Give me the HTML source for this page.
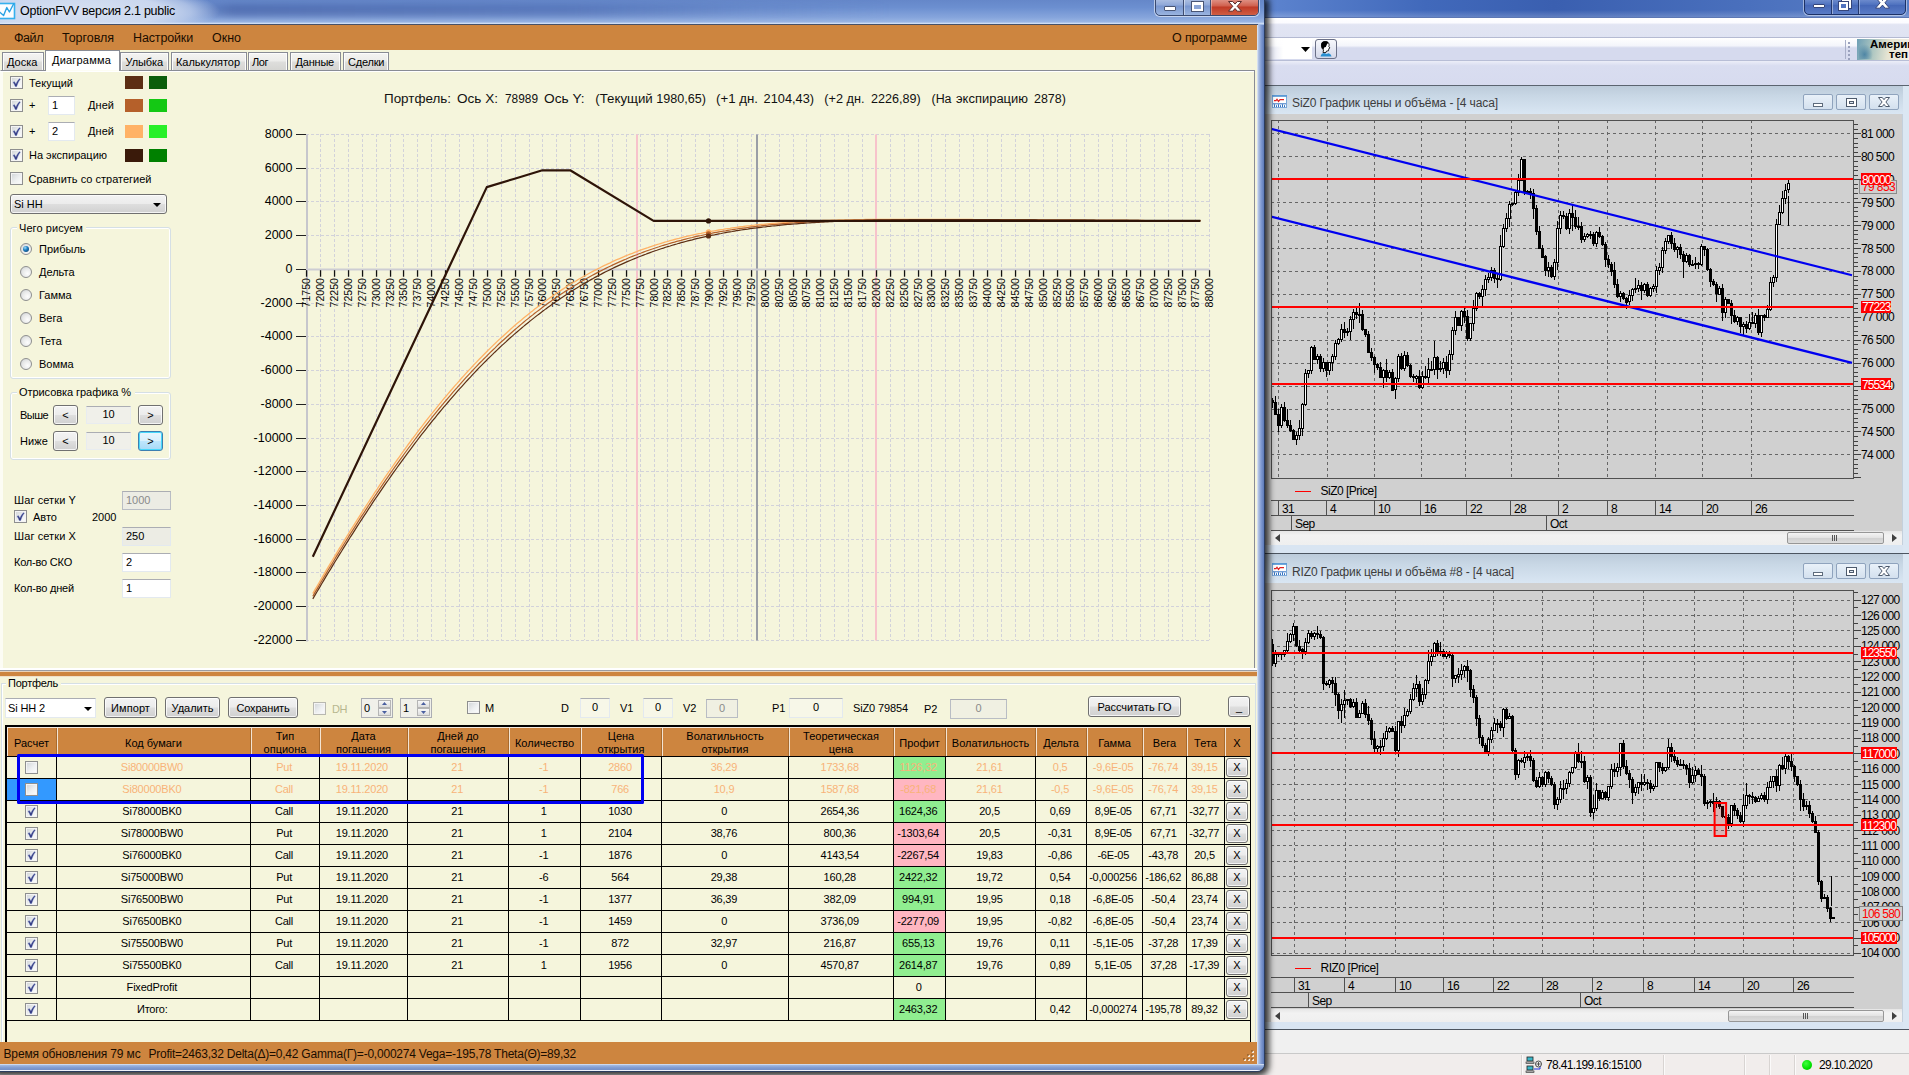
<!DOCTYPE html>
<html lang="ru"><head><meta charset="utf-8"><title>OptionFVV</title><style>html,body{margin:0;padding:0;}
body{width:1909px;height:1075px;overflow:hidden;position:relative;background:#f0f0f0;font-family:"Liberation Sans",sans-serif;font-size:11px;}
div,span.t,svg{position:absolute;}
span.t{white-space:nowrap;display:block;}
#root{left:0;top:0;width:1909px;height:1075px;overflow:hidden;}
</style></head><body><div id="root">
<div style="left:1264px;top:0px;width:645px;height:1075px;background:#f0f0f0;"></div>
<div style="left:1264px;top:0px;width:645px;height:17px;background:linear-gradient(90deg,#5d84cf 0%,#4169bb 25%,#3a5fb0 45%,#4a70bd 75%,#5a7fc7 100%);"></div>
<div style="left:1264px;top:10px;width:645px;height:7px;background:linear-gradient(rgba(255,255,255,0),rgba(255,255,255,.2));"></div>
<div style="left:1804px;top:-4px;width:102px;height:19px;border:1px solid #1c3166;border-radius:0 0 5px 5px;background:linear-gradient(#7e9ad6,#4f72bf 45%,#4668b8 50%,#5a7cc6);box-shadow:0 0 0 1px rgba(255,255,255,.45);box-sizing:border-box;"></div>
<div style="left:1831px;top:0px;width:1px;height:14px;background:#24396f;"></div>
<div style="left:1832px;top:0px;width:1px;height:14px;background:rgba(255,255,255,.4);"></div>
<div style="left:1858px;top:0px;width:1px;height:14px;background:#24396f;"></div>
<div style="left:1859px;top:0px;width:1px;height:14px;background:rgba(255,255,255,.4);"></div>
<div style="left:1813px;top:4px;width:12px;height:4px;background:#fff;border:1px solid #35457a;box-sizing:border-box;border-radius:1px;"></div>
<div style="left:1842px;top:0px;width:9px;height:8px;background:transparent;border:2px solid #fff;box-sizing:border-box;outline:1px solid #35457a;"></div>
<div style="left:1839px;top:2px;width:9px;height:8px;background:#5173bf;border:2px solid #fff;box-sizing:border-box;outline:1px solid #35457a;"></div>
<svg style="left:1875px;top:-3px" width="15" height="12" viewBox="0 0 15 12"><path d="M0.500 0.500h4.300l2.700 3 2.700-3h4.300l-4.600 5.300 4.600 5.400h-4.300l-2.700-3.100-2.700 3.100h-4.300l4.600-5.400z" fill="#fff" stroke="#35457a" stroke-width="1"/></svg>
<div style="left:1264px;top:17px;width:645px;height:1px;background:#5d78b4;"></div>
<div style="left:1264px;top:18px;width:645px;height:19px;background:linear-gradient(#ffffff 0,#fbfbff 25%,#e2e5f3 35%,#dfe3f2 100%);"></div>
<div style="left:1264px;top:37px;width:645px;height:1px;background:#b4bad2;"></div>
<div style="left:1264px;top:38px;width:645px;height:22px;background:linear-gradient(#ffffff 0,#f4f5fb 35%,#d6daee 45%,#d6daee 100%);"></div>
<div style="left:1264px;top:60px;width:645px;height:1px;background:#b8bed6;"></div>
<div style="left:1264px;top:61px;width:645px;height:24px;background:linear-gradient(#eceef8 0,#d9ddf0 20%,#d7dbef 100%);"></div>
<div style="left:1264px;top:39px;width:48px;height:20px;background:linear-gradient(90deg,rgba(255,255,255,0),#fff 40%);"></div>
<svg style="left:1301px;top:47px" width="9" height="5"><path d="M0 0h9l-4.5 5z" fill="#000"/></svg>
<div style="left:1315px;top:39px;width:22px;height:20px;border:1px solid #6a6f86;border-radius:3px;background:linear-gradient(#f7f8fc,#d4d8ea);box-sizing:border-box;"></div>
<svg style="left:1319px;top:41px" width="14" height="16" viewBox="0 0 14 16"><path d="M3 2c1-1.5 5-2 6.5 0 .8 1 .8 2.5.3 3.5l1.2 1.5-1.2.6-.3 2.2-2 .2-.5 1.5h-3l.5-2.5c-1.8-1-2.8-4.500-1.500-7z" fill="#fff" stroke="#000" stroke-width=".8"/><path d="M2.600 1.800c1.500-1.800 5.500-2 7 0l-1.500 1.200-1.300 3-1.700.5-.6 2.500c-1.800-1-3-5-1.900-7.200z" fill="#000"/><path d="M1.500 15.500c.5-2.500 2-3.500 4-3.500l2 1 2-.8c1.500.3 2.500 1.500 3 3.300z" fill="#2a8fd0"/></svg>
<div style="left:1845px;top:40px;width:1px;height:19px;background:#a9afc8;"></div>
<div style="left:1848px;top:42px;width:2px;height:2px;background:#9aa1bd;"></div>
<div style="left:1848px;top:46px;width:2px;height:2px;background:#9aa1bd;"></div>
<div style="left:1848px;top:50px;width:2px;height:2px;background:#9aa1bd;"></div>
<div style="left:1848px;top:54px;width:2px;height:2px;background:#9aa1bd;"></div>
<div style="left:1848px;top:58px;width:2px;height:2px;background:#9aa1bd;"></div>
<div style="left:1857px;top:39px;width:52px;height:21px;background:linear-gradient(100deg,#6e9fb5 0%,#a9c4c0 30%,#e6e4d2 60%,#f4f0e6 100%);overflow:hidden;"></div>
<div style="left:1859px;top:44px;width:14px;height:15px;background:radial-gradient(ellipse at 40% 70%,#4f86a5,rgba(110,160,180,0) 70%);"></div>
<span class="t" style="left:1909.50px;top:36.75px;height:15.5px;line-height:15.5px;font-size:11.5px;color:#000;font-weight:bold;left:1870px;">Америк</span>
<span class="t" style="left:1909.50px;top:46.75px;height:15.5px;line-height:15.5px;font-size:11.5px;color:#000;font-weight:bold;left:1889px;">теп</span>
<div style="left:1264px;top:85px;width:645px;height:1px;background:#5b6470;"></div>
<div style="left:1264px;top:86px;width:645px;height:28px;background:linear-gradient(#bccbda 0,#c8d7e5 35%,#d9e6f3 100%);"></div>
<div style="left:1903px;top:86px;width:6px;height:468px;background:#dbe7f3;"></div>
<div style="left:1902px;top:114px;width:1px;height:432px;background:#c4d0dc;"></div>
<svg style="left:1272px;top:95px" width="15" height="13" viewBox="0 0 15 14" preserveAspectRatio="none"><rect x="0.5" y="0.5" width="14" height="13" fill="#fff" stroke="#7aa7d8"/><rect x="0" y="0" width="15" height="2" fill="#5b9ad6"/><path d="M2 6h2l1-1.5 1.5 2.5 1.5-2h4" stroke="#e02020" fill="none" stroke-width="1.2"/><path d="M2.5 13v-3M4.5 13v-2M6.5 13v-3M8.5 13v-2M10.5 13v-3M12.5 13v-2" stroke="#2a6cc0" stroke-width="1"/><path d="M1 9.5h13" stroke="#2a6cc0" stroke-width="1"/></svg>
<span class="t" style="left:1292.00px;top:94.50px;height:16px;line-height:16px;font-size:12px;color:#3d3d3d;letter-spacing:-0.099px;">SiZ0 График цены и объёма - [4 часа]</span>
<div style="left:1803px;top:94px;width:30px;height:16px;border:1px solid #8fa3bd;border-radius:2px;background:linear-gradient(#e9f1f9,#d3e0ee);box-sizing:border-box;"></div>
<div style="left:1813px;top:103px;width:10px;height:4px;background:#fff;border:1px solid #5d6b7c;box-sizing:border-box;"></div>
<div style="left:1836px;top:94px;width:30px;height:16px;border:1px solid #8fa3bd;border-radius:2px;background:linear-gradient(#e9f1f9,#d3e0ee);box-sizing:border-box;"></div>
<div style="left:1846px;top:98px;width:11px;height:9px;background:#fff;border:1px solid #4d5a6c;box-sizing:border-box;"></div>
<div style="left:1849px;top:101px;width:5px;height:3px;background:#dfe8f2;border:1px solid #4d5a6c;box-sizing:border-box;"></div>
<div style="left:1869px;top:94px;width:30px;height:16px;border:1px solid #8fa3bd;border-radius:2px;background:linear-gradient(#e9f1f9,#d3e0ee);box-sizing:border-box;"></div>
<svg style="left:1878px;top:97px" width="12" height="10" viewBox="0 0 12 10"><path d="M0.500 0.500h3.800l1.700 2.200 1.700-2.200h3.800l-3.600 4.500 3.600 4.500h-3.800l-1.700-2.200-1.700 2.200h-3.800l3.600-4.500z" fill="#fff" stroke="#4d5a6c" stroke-width="1"/></svg>
<div style="left:1264px;top:114px;width:638px;height:432px;background:#d0d0d0;"></div>
<svg style="left:1271px;top:120px" width="583" height="359" viewBox="0 0 583 359" shape-rendering="crispEdges"><rect x="0" y="0" width="583" height="359" fill="#d0d0d0"/><path d="M0 334.5H582M0 311.5H582M0 289.5H582M0 266.5H582M0 243.5H582M0 220.5H582M0 197.5H582M0 174.5H582M0 151.5H582M0 128.5H582M0 105.5H582M0 82.5H582M0 59.5H582M0 36.5H582M0 13.5H582M7.5 0V358M56.5 0V358M103.5 0V358M150.5 0V358M194.5 0V358M240.5 0V358M287.5 0V358M336.5 0V358M384.5 0V358M431.5 0V358M480.5 0V358" stroke="#666" stroke-width="1" stroke-dasharray="3 3" fill="none"/><path d="M1.5 278.4V287.7M4.5 276.3V295.2M7.5 289.0V311.6M10.5 283.5V308.3M13.5 282.3V301.6M16.5 288.6V307.7M19.5 300.3V311.5M22.5 308.5V319.8M25.5 312.3V324.5M28.5 300.0V319.6M31.5 283.3V315.7M34.5 249.4V286.0M37.5 249.5V257.6M40.5 225.7V253.7M43.5 225.3V240.4M46.5 233.9V243.6M49.5 234.1V252.3M52.5 237.7V251.9M55.5 241.5V256.7M58.5 241.6V254.6M61.5 234.1V250.6M64.5 220.3V239.5M67.5 218.2V224.6M70.5 204.4V222.0M73.5 202.1V217.7M76.5 207.9V216.4M79.5 195.7V220.4M82.5 188.9V209.0M85.5 187.7V198.7M88.5 182.7V202.8M91.5 190.3V210.6M94.5 208.5V216.6M97.5 210.7V232.9M100.5 228.2V241.4M103.5 235.5V253.4M106.5 243.3V250.0M109.5 242.1V257.6M112.5 249.0V268.2M115.5 239.3V262.0M118.5 250.2V258.5M121.5 249.3V270.9M124.5 257.1V278.8M127.5 233.6V261.7M130.5 232.8V250.0M133.5 231.4V251.4M136.5 231.9V247.3M139.5 244.4V258.1M142.5 253.7V262.3M145.5 255.2V264.6M148.5 249.7V268.9M151.5 250.5V268.8M154.5 246.3V259.3M157.5 237.5V264.6M160.5 241.2V250.9M163.5 220.8V255.2M166.5 235.7V259.2M169.5 240.8V252.3M172.5 237.5V254.3M175.5 236.3V257.6M178.5 230.1V255.2M181.5 207.3V240.3M184.5 191.4V214.5M187.5 196.6V206.1M190.5 190.3V211.4M193.5 187.7V203.2M196.5 189.7V220.5M199.5 202.5V221.1M202.5 180.2V210.6M205.5 172.0V191.0M208.5 171.9V179.2M211.5 165.1V185.5M214.5 155.4V175.7M217.5 152.8V163.0M220.5 146.5V161.4M223.5 147.8V162.5M226.5 153.5V167.9M229.5 115.1V160.9M232.5 104.1V127.9M235.5 93.2V112.2M238.5 80.6V106.6M241.5 82.7V86.1M244.5 71.2V85.2M247.5 54.4V76.0M250.5 36.9V61.3M253.5 39.0V74.7M256.5 70.4V74.2M259.5 67.7V78.5M262.5 69.0V99.1M265.5 84.7V114.5M268.5 105.6V128.9M271.5 124.8V138.0M274.5 134.7V156.0M277.5 141.6V157.1M280.5 144.9V158.0M283.5 139.0V160.3M286.5 100.6V150.0M289.5 91.2V114.4M292.5 90.6V98.6M295.5 93.4V110.3M298.5 88.9V114.4M301.5 84.0V110.6M304.5 89.6V109.1M307.5 97.4V110.0M310.5 102.2V122.9M313.5 113.3V121.5M316.5 113.0V118.2M319.5 111.0V119.0M322.5 112.4V125.5M325.5 110.9V127.2M328.5 106.7V118.4M331.5 115.0V125.7M334.5 121.9V147.1M337.5 134.9V148.1M340.5 142.2V155.5M343.5 142.4V167.6M346.5 159.0V178.3M349.5 171.1V182.4M352.5 171.6V179.7M355.5 177.0V189.0M358.5 170.2V184.5M361.5 167.8V180.6M364.5 158.0V173.1M367.5 160.3V172.2M370.5 161.5V179.5M373.5 163.3V172.9M376.5 161.8V176.6M379.5 166.8V176.6M382.5 164.2V172.4M385.5 145.5V172.5M388.5 143.3V155.1M391.5 126.9V152.9M394.5 118.1V134.1M397.5 114.6V124.2M400.5 111.6V128.5M403.5 118.3V131.7M406.5 126.0V137.9M409.5 124.3V138.7M412.5 130.5V158.0M415.5 133.0V142.7M418.5 134.4V147.3M421.5 139.7V145.9M424.5 136.9V148.8M427.5 142.2V149.2M430.5 124.1V145.6M433.5 126.0V136.4M436.5 127.9V151.1M439.5 147.7V167.3M442.5 158.9V166.4M445.5 161.5V181.8M448.5 166.4V175.3M451.5 164.0V200.6M454.5 176.8V197.6M457.5 178.7V184.4M460.5 180.2V204.1M463.5 190.3V202.5M466.5 195.8V204.7M469.5 196.7V213.1M472.5 201.5V215.4M475.5 200.7V213.0M478.5 193.7V209.6M481.5 191.9V204.2M484.5 192.7V208.2M487.5 188.9V215.3M490.5 194.9V217.3M493.5 193.7V200.8M496.5 184.8V198.3M499.5 157.3V191.2M502.5 154.9V166.7M505.5 99.0V162.3M508.5 85.2V104.9M511.5 70.9V93.6M514.5 63.9V84.1M517.5 58.6V73.3" stroke="#000" stroke-width="1" fill="none"/><path d="M0.5 280.6h2.0v2.1h-2.0zM3.5 282.7h2.0v11.7h-2.0zM6.5 294.4h2.0v11.2h-2.0zM12.5 287.2h2.0v13.5h-2.0zM15.5 300.6h2.0v5.3h-2.0zM18.5 305.9h2.0v4.6h-2.0zM21.5 310.6h2.0v8.5h-2.0zM42.5 227.5h2.0v11.9h-2.0zM48.5 236.9h2.0v11.8h-2.0zM54.5 242.5h2.0v8.0h-2.0zM72.5 209.4h2.0v3.4h-2.0zM84.5 192.5h2.0v1.7h-2.0zM90.5 194.2h2.0v15.3h-2.0zM93.5 209.5h2.0v4.9h-2.0zM96.5 214.4h2.0v17.7h-2.0zM99.5 232.1h2.0v5.1h-2.0zM102.5 237.3h2.0v7.5h-2.0zM105.5 244.8h2.0v2.3h-2.0zM108.5 247.2h2.0v9.9h-2.0zM114.5 250.2h2.0v6.8h-2.0zM120.5 252.6h2.0v17.4h-2.0zM129.5 236.2h2.0v11.9h-2.0zM135.5 235.1h2.0v10.2h-2.0zM138.5 245.3h2.0v10.9h-2.0zM141.5 256.1h2.0v1.8h-2.0zM147.5 256.8h2.0v10.8h-2.0zM153.5 256.6h2.0v1.1h-2.0zM159.5 249.0h2.0v1.0h-2.0zM165.5 237.0h2.0v12.1h-2.0zM174.5 242.1h2.0v8.2h-2.0zM186.5 197.5h2.0v7.5h-2.0zM192.5 191.4h2.0v4.8h-2.0zM195.5 196.2h2.0v22.7h-2.0zM207.5 173.2h2.0v2.9h-2.0zM222.5 150.2h2.0v8.4h-2.0zM225.5 158.6h2.0v1.3h-2.0zM252.5 39.8h2.0v32.8h-2.0zM258.5 71.8h2.0v1.7h-2.0zM261.5 73.5h2.0v14.5h-2.0zM264.5 88.0h2.0v23.2h-2.0zM267.5 111.2h2.0v16.9h-2.0zM270.5 128.1h2.0v8.9h-2.0zM273.5 136.9h2.0v13.4h-2.0zM279.5 147.0h2.0v9.3h-2.0zM291.5 95.8h2.0v1.0h-2.0zM294.5 96.3h2.0v12.0h-2.0zM300.5 93.9h2.0v3.9h-2.0zM303.5 97.9h2.0v9.0h-2.0zM306.5 106.8h2.0v1.0h-2.0zM309.5 106.9h2.0v13.0h-2.0zM318.5 114.1h2.0v1.0h-2.0zM321.5 114.5h2.0v8.5h-2.0zM327.5 112.1h2.0v4.0h-2.0zM330.5 116.1h2.0v8.1h-2.0zM333.5 124.3h2.0v15.3h-2.0zM336.5 139.6h2.0v4.8h-2.0zM339.5 144.4h2.0v6.6h-2.0zM342.5 150.9h2.0v13.9h-2.0zM345.5 164.9h2.0v11.8h-2.0zM351.5 173.0h2.0v5.6h-2.0zM354.5 178.6h2.0v3.4h-2.0zM369.5 165.9h2.0v4.3h-2.0zM375.5 164.4h2.0v10.6h-2.0zM399.5 115.6h2.0v8.1h-2.0zM402.5 123.7h2.0v5.4h-2.0zM408.5 127.0h2.0v7.2h-2.0zM411.5 134.2h2.0v7.5h-2.0zM417.5 135.0h2.0v9.8h-2.0zM426.5 143.0h2.0v1.6h-2.0zM432.5 126.8h2.0v2.3h-2.0zM435.5 129.0h2.0v20.0h-2.0zM438.5 149.0h2.0v12.7h-2.0zM441.5 161.7h2.0v3.1h-2.0zM444.5 164.8h2.0v9.1h-2.0zM450.5 168.7h2.0v24.0h-2.0zM456.5 179.6h2.0v3.7h-2.0zM459.5 183.3h2.0v12.0h-2.0zM462.5 195.3h2.0v6.4h-2.0zM468.5 197.2h2.0v9.0h-2.0zM474.5 204.5h2.0v3.7h-2.0zM480.5 202.3h2.0v1.2h-2.0zM486.5 195.0h2.0v17.2h-2.0zM492.5 195.9h2.0v1.7h-2.0z" fill="#000" stroke="#000" stroke-width="1"/><path d="M9.5 287.2h2.0v18.5h-2.0zM24.5 315.9h2.0v3.2h-2.0zM27.5 308.6h2.0v7.3h-2.0zM30.5 284.6h2.0v24.0h-2.0zM33.5 253.4h2.0v31.2h-2.0zM36.5 250.2h2.0v3.2h-2.0zM39.5 227.5h2.0v22.7h-2.0zM45.5 236.9h2.0v2.5h-2.0zM51.5 242.5h2.0v6.2h-2.0zM57.5 242.8h2.0v7.8h-2.0zM60.5 236.7h2.0v6.0h-2.0zM63.5 223.2h2.0v13.5h-2.0zM66.5 219.7h2.0v3.6h-2.0zM69.5 209.4h2.0v10.2h-2.0zM75.5 211.9h2.0v1.0h-2.0zM78.5 199.7h2.0v12.2h-2.0zM81.5 192.5h2.0v7.2h-2.0zM87.5 194.2h2.0v1.0h-2.0zM111.5 250.2h2.0v6.8h-2.0zM117.5 252.6h2.0v4.4h-2.0zM123.5 258.0h2.0v11.9h-2.0zM126.5 236.2h2.0v21.8h-2.0zM132.5 235.1h2.0v13.1h-2.0zM144.5 256.8h2.0v1.2h-2.0zM150.5 256.6h2.0v11.0h-2.0zM156.5 249.0h2.0v8.7h-2.0zM162.5 237.0h2.0v12.6h-2.0zM168.5 248.3h2.0v1.0h-2.0zM171.5 242.1h2.0v6.2h-2.0zM177.5 234.4h2.0v15.8h-2.0zM180.5 210.9h2.0v23.6h-2.0zM183.5 197.5h2.0v13.4h-2.0zM189.5 191.4h2.0v13.6h-2.0zM198.5 203.4h2.0v15.5h-2.0zM201.5 188.4h2.0v15.1h-2.0zM204.5 173.2h2.0v15.2h-2.0zM210.5 169.3h2.0v6.8h-2.0zM213.5 159.0h2.0v10.2h-2.0zM216.5 157.9h2.0v1.2h-2.0zM219.5 150.2h2.0v7.6h-2.0zM228.5 126.3h2.0v33.6h-2.0zM231.5 108.0h2.0v18.3h-2.0zM234.5 98.2h2.0v9.8h-2.0zM237.5 84.6h2.0v13.6h-2.0zM240.5 83.8h2.0v1.0h-2.0zM243.5 72.6h2.0v11.2h-2.0zM246.5 60.5h2.0v12.1h-2.0zM249.5 39.8h2.0v20.7h-2.0zM255.5 71.8h2.0v1.0h-2.0zM276.5 147.0h2.0v3.3h-2.0zM282.5 142.5h2.0v13.9h-2.0zM285.5 108.1h2.0v34.4h-2.0zM288.5 95.8h2.0v12.3h-2.0zM297.5 93.9h2.0v14.4h-2.0zM312.5 116.2h2.0v3.7h-2.0zM315.5 114.1h2.0v2.1h-2.0zM324.5 112.1h2.0v10.9h-2.0zM348.5 173.0h2.0v3.7h-2.0zM357.5 175.5h2.0v6.4h-2.0zM360.5 169.9h2.0v5.7h-2.0zM363.5 168.4h2.0v1.5h-2.0zM366.5 165.9h2.0v2.5h-2.0zM372.5 164.4h2.0v5.8h-2.0zM378.5 168.2h2.0v6.8h-2.0zM381.5 166.3h2.0v2.0h-2.0zM384.5 150.9h2.0v15.4h-2.0zM387.5 147.6h2.0v3.3h-2.0zM390.5 130.3h2.0v17.3h-2.0zM393.5 121.9h2.0v8.4h-2.0zM396.5 115.6h2.0v6.3h-2.0zM405.5 127.0h2.0v2.2h-2.0zM414.5 135.0h2.0v6.7h-2.0zM420.5 144.3h2.0v1.0h-2.0zM423.5 143.0h2.0v1.3h-2.0zM429.5 126.8h2.0v17.9h-2.0zM447.5 168.7h2.0v5.3h-2.0zM453.5 179.6h2.0v13.0h-2.0zM465.5 197.2h2.0v4.4h-2.0zM471.5 204.5h2.0v1.8h-2.0zM477.5 202.3h2.0v6.0h-2.0zM483.5 195.0h2.0v8.4h-2.0zM489.5 195.9h2.0v16.4h-2.0zM495.5 189.5h2.0v8.1h-2.0zM498.5 162.6h2.0v26.9h-2.0zM501.5 157.4h2.0v5.2h-2.0zM504.5 104.4h2.0v53.0h-2.0zM507.5 92.2h2.0v12.2h-2.0zM510.5 78.7h2.0v13.5h-2.0zM513.5 70.0h2.0v8.7h-2.0zM516.5 63.6h2.0v6.3h-2.0z" fill="#fff" stroke="#000" stroke-width="1"/><g shape-rendering="auto"><line x1="0.0" y1="8.8" x2="581.0" y2="155.2" stroke="#0000f0" stroke-width="2.2"/><line x1="0.0" y1="96.5" x2="581.0" y2="242.9" stroke="#0000f0" stroke-width="2.2"/></g><rect x="0" y="58" width="582" height="2" fill="#ff0000"/><rect x="0" y="186" width="582" height="2" fill="#ff0000"/><rect x="0" y="263" width="582" height="2" fill="#ff0000"/><path d="M517.5 76.0V105.6" stroke="#000" stroke-width="1"/><rect x="0.5" y="0.5" width="582" height="358" fill="none" stroke="#505050" stroke-width="1"/></svg>
<div style="left:1854px;top:477px;width:7px;height:1px;background:#404040;"></div>
<div style="left:1854px;top:473px;width:4px;height:1px;background:#404040;"></div>
<div style="left:1854px;top:468px;width:4px;height:1px;background:#404040;"></div>
<div style="left:1854px;top:464px;width:4px;height:1px;background:#404040;"></div>
<div style="left:1854px;top:459px;width:4px;height:1px;background:#404040;"></div>
<div style="left:1854px;top:454px;width:7px;height:1px;background:#404040;"></div>
<div style="left:1854px;top:450px;width:4px;height:1px;background:#404040;"></div>
<div style="left:1854px;top:445px;width:4px;height:1px;background:#404040;"></div>
<div style="left:1854px;top:441px;width:4px;height:1px;background:#404040;"></div>
<div style="left:1854px;top:436px;width:4px;height:1px;background:#404040;"></div>
<div style="left:1854px;top:431px;width:7px;height:1px;background:#404040;"></div>
<div style="left:1854px;top:427px;width:4px;height:1px;background:#404040;"></div>
<div style="left:1854px;top:422px;width:4px;height:1px;background:#404040;"></div>
<div style="left:1854px;top:418px;width:4px;height:1px;background:#404040;"></div>
<div style="left:1854px;top:413px;width:4px;height:1px;background:#404040;"></div>
<div style="left:1854px;top:409px;width:7px;height:1px;background:#404040;"></div>
<div style="left:1854px;top:404px;width:4px;height:1px;background:#404040;"></div>
<div style="left:1854px;top:399px;width:4px;height:1px;background:#404040;"></div>
<div style="left:1854px;top:395px;width:4px;height:1px;background:#404040;"></div>
<div style="left:1854px;top:390px;width:4px;height:1px;background:#404040;"></div>
<div style="left:1854px;top:386px;width:7px;height:1px;background:#404040;"></div>
<div style="left:1854px;top:381px;width:4px;height:1px;background:#404040;"></div>
<div style="left:1854px;top:376px;width:4px;height:1px;background:#404040;"></div>
<div style="left:1854px;top:372px;width:4px;height:1px;background:#404040;"></div>
<div style="left:1854px;top:367px;width:4px;height:1px;background:#404040;"></div>
<div style="left:1854px;top:363px;width:7px;height:1px;background:#404040;"></div>
<div style="left:1854px;top:358px;width:4px;height:1px;background:#404040;"></div>
<div style="left:1854px;top:354px;width:4px;height:1px;background:#404040;"></div>
<div style="left:1854px;top:349px;width:4px;height:1px;background:#404040;"></div>
<div style="left:1854px;top:344px;width:4px;height:1px;background:#404040;"></div>
<div style="left:1854px;top:340px;width:7px;height:1px;background:#404040;"></div>
<div style="left:1854px;top:335px;width:4px;height:1px;background:#404040;"></div>
<div style="left:1854px;top:331px;width:4px;height:1px;background:#404040;"></div>
<div style="left:1854px;top:326px;width:4px;height:1px;background:#404040;"></div>
<div style="left:1854px;top:321px;width:4px;height:1px;background:#404040;"></div>
<div style="left:1854px;top:317px;width:7px;height:1px;background:#404040;"></div>
<div style="left:1854px;top:312px;width:4px;height:1px;background:#404040;"></div>
<div style="left:1854px;top:308px;width:4px;height:1px;background:#404040;"></div>
<div style="left:1854px;top:303px;width:4px;height:1px;background:#404040;"></div>
<div style="left:1854px;top:298px;width:4px;height:1px;background:#404040;"></div>
<div style="left:1854px;top:294px;width:7px;height:1px;background:#404040;"></div>
<div style="left:1854px;top:289px;width:4px;height:1px;background:#404040;"></div>
<div style="left:1854px;top:285px;width:4px;height:1px;background:#404040;"></div>
<div style="left:1854px;top:280px;width:4px;height:1px;background:#404040;"></div>
<div style="left:1854px;top:276px;width:4px;height:1px;background:#404040;"></div>
<div style="left:1854px;top:271px;width:7px;height:1px;background:#404040;"></div>
<div style="left:1854px;top:266px;width:4px;height:1px;background:#404040;"></div>
<div style="left:1854px;top:262px;width:4px;height:1px;background:#404040;"></div>
<div style="left:1854px;top:257px;width:4px;height:1px;background:#404040;"></div>
<div style="left:1854px;top:253px;width:4px;height:1px;background:#404040;"></div>
<div style="left:1854px;top:248px;width:7px;height:1px;background:#404040;"></div>
<div style="left:1854px;top:243px;width:4px;height:1px;background:#404040;"></div>
<div style="left:1854px;top:239px;width:4px;height:1px;background:#404040;"></div>
<div style="left:1854px;top:234px;width:4px;height:1px;background:#404040;"></div>
<div style="left:1854px;top:230px;width:4px;height:1px;background:#404040;"></div>
<div style="left:1854px;top:225px;width:7px;height:1px;background:#404040;"></div>
<div style="left:1854px;top:221px;width:4px;height:1px;background:#404040;"></div>
<div style="left:1854px;top:216px;width:4px;height:1px;background:#404040;"></div>
<div style="left:1854px;top:211px;width:4px;height:1px;background:#404040;"></div>
<div style="left:1854px;top:207px;width:4px;height:1px;background:#404040;"></div>
<div style="left:1854px;top:202px;width:7px;height:1px;background:#404040;"></div>
<div style="left:1854px;top:198px;width:4px;height:1px;background:#404040;"></div>
<div style="left:1854px;top:193px;width:4px;height:1px;background:#404040;"></div>
<div style="left:1854px;top:188px;width:4px;height:1px;background:#404040;"></div>
<div style="left:1854px;top:184px;width:4px;height:1px;background:#404040;"></div>
<div style="left:1854px;top:179px;width:7px;height:1px;background:#404040;"></div>
<div style="left:1854px;top:175px;width:4px;height:1px;background:#404040;"></div>
<div style="left:1854px;top:170px;width:4px;height:1px;background:#404040;"></div>
<div style="left:1854px;top:166px;width:4px;height:1px;background:#404040;"></div>
<div style="left:1854px;top:161px;width:4px;height:1px;background:#404040;"></div>
<div style="left:1854px;top:156px;width:7px;height:1px;background:#404040;"></div>
<div style="left:1854px;top:152px;width:4px;height:1px;background:#404040;"></div>
<div style="left:1854px;top:147px;width:4px;height:1px;background:#404040;"></div>
<div style="left:1854px;top:143px;width:4px;height:1px;background:#404040;"></div>
<div style="left:1854px;top:138px;width:4px;height:1px;background:#404040;"></div>
<div style="left:1854px;top:133px;width:7px;height:1px;background:#404040;"></div>
<div style="left:1854px;top:129px;width:4px;height:1px;background:#404040;"></div>
<div style="left:1854px;top:124px;width:4px;height:1px;background:#404040;"></div>
<span class="t" style="left:1861.00px;top:446.92px;height:16px;line-height:16px;font-size:12px;color:#000;letter-spacing:-0.617px;">74 000</span>
<span class="t" style="left:1861.00px;top:423.99px;height:16px;line-height:16px;font-size:12px;color:#000;letter-spacing:-0.617px;">74 500</span>
<span class="t" style="left:1861.00px;top:401.06px;height:16px;line-height:16px;font-size:12px;color:#000;letter-spacing:-0.617px;">75 000</span>
<span class="t" style="left:1861.00px;top:378.13px;height:16px;line-height:16px;font-size:12px;color:#000;letter-spacing:-0.617px;">75 500</span>
<span class="t" style="left:1861.00px;top:355.20px;height:16px;line-height:16px;font-size:12px;color:#000;letter-spacing:-0.617px;">76 000</span>
<span class="t" style="left:1861.00px;top:332.27px;height:16px;line-height:16px;font-size:12px;color:#000;letter-spacing:-0.617px;">76 500</span>
<span class="t" style="left:1861.00px;top:309.34px;height:16px;line-height:16px;font-size:12px;color:#000;letter-spacing:-0.617px;">77 000</span>
<span class="t" style="left:1861.00px;top:286.41px;height:16px;line-height:16px;font-size:12px;color:#000;letter-spacing:-0.617px;">77 500</span>
<span class="t" style="left:1861.00px;top:263.48px;height:16px;line-height:16px;font-size:12px;color:#000;letter-spacing:-0.617px;">78 000</span>
<span class="t" style="left:1861.00px;top:240.55px;height:16px;line-height:16px;font-size:12px;color:#000;letter-spacing:-0.617px;">78 500</span>
<span class="t" style="left:1861.00px;top:217.62px;height:16px;line-height:16px;font-size:12px;color:#000;letter-spacing:-0.617px;">79 000</span>
<span class="t" style="left:1861.00px;top:194.69px;height:16px;line-height:16px;font-size:12px;color:#000;letter-spacing:-0.617px;">79 500</span>
<span class="t" style="left:1861.00px;top:171.76px;height:16px;line-height:16px;font-size:12px;color:#000;letter-spacing:-0.617px;">80 000</span>
<span class="t" style="left:1861.00px;top:148.83px;height:16px;line-height:16px;font-size:12px;color:#000;letter-spacing:-0.617px;">80 500</span>
<span class="t" style="left:1861.00px;top:125.90px;height:16px;line-height:16px;font-size:12px;color:#000;letter-spacing:-0.617px;">81 000</span>
<div style="left:1859px;top:180px;width:38px;height:14px;background:#d0d0d0;border:1px solid #8a8a8a;box-sizing:border-box;"></div>
<span class="t" style="left:1862.00px;top:179.00px;height:16px;line-height:16px;font-size:12px;color:#ff0000;letter-spacing:-0.617px;">79 853</span>
<div style="left:1861px;top:173px;width:30px;height:12px;background:#ff0000;"></div>
<span class="t" style="left:1862.00px;top:171.76px;height:16px;line-height:16px;font-size:12px;color:#fff;letter-spacing:-0.974px;">80000</span>
<div style="left:1861px;top:301px;width:30px;height:12px;background:#ff0000;"></div>
<span class="t" style="left:1862.00px;top:299.11px;height:16px;line-height:16px;font-size:12px;color:#fff;letter-spacing:-0.974px;">77223</span>
<div style="left:1861px;top:378px;width:30px;height:12px;background:#ff0000;"></div>
<span class="t" style="left:1862.00px;top:376.57px;height:16px;line-height:16px;font-size:12px;color:#fff;letter-spacing:-0.974px;">75534</span>
<div style="left:1295px;top:490.5px;width:16px;height:1.3px;background:#ff0000;"></div>
<span class="t" style="left:1320.50px;top:483.00px;height:16px;line-height:16px;font-size:12px;color:#000;letter-spacing:-0.501px;">SiZ0 [Price]</span>
<div style="left:1271px;top:500px;width:583px;height:1px;background:#505050;"></div>
<div style="left:1271px;top:515px;width:583px;height:1px;background:#505050;"></div>
<div style="left:1271px;top:530px;width:583px;height:1px;background:#505050;"></div>
<div style="left:1278px;top:501px;width:1px;height:14px;background:#505050;"></div>
<span class="t" style="left:1282.00px;top:500.50px;height:16px;line-height:16px;font-size:12px;color:#000;letter-spacing:-0.7px;">31</span>
<div style="left:1326px;top:501px;width:1px;height:14px;background:#505050;"></div>
<span class="t" style="left:1330.00px;top:500.50px;height:16px;line-height:16px;font-size:12px;color:#000;letter-spacing:-0.7px;">4</span>
<div style="left:1374px;top:501px;width:1px;height:14px;background:#505050;"></div>
<span class="t" style="left:1378.00px;top:500.50px;height:16px;line-height:16px;font-size:12px;color:#000;letter-spacing:-0.7px;">10</span>
<div style="left:1420px;top:501px;width:1px;height:14px;background:#505050;"></div>
<span class="t" style="left:1424.00px;top:500.50px;height:16px;line-height:16px;font-size:12px;color:#000;letter-spacing:-0.7px;">16</span>
<div style="left:1466px;top:501px;width:1px;height:14px;background:#505050;"></div>
<span class="t" style="left:1470.00px;top:500.50px;height:16px;line-height:16px;font-size:12px;color:#000;letter-spacing:-0.7px;">22</span>
<div style="left:1510px;top:501px;width:1px;height:14px;background:#505050;"></div>
<span class="t" style="left:1514.00px;top:500.50px;height:16px;line-height:16px;font-size:12px;color:#000;letter-spacing:-0.7px;">28</span>
<div style="left:1558px;top:501px;width:1px;height:14px;background:#505050;"></div>
<span class="t" style="left:1562.00px;top:500.50px;height:16px;line-height:16px;font-size:12px;color:#000;letter-spacing:-0.7px;">2</span>
<div style="left:1607px;top:501px;width:1px;height:14px;background:#505050;"></div>
<span class="t" style="left:1611.00px;top:500.50px;height:16px;line-height:16px;font-size:12px;color:#000;letter-spacing:-0.7px;">8</span>
<div style="left:1655px;top:501px;width:1px;height:14px;background:#505050;"></div>
<span class="t" style="left:1659.00px;top:500.50px;height:16px;line-height:16px;font-size:12px;color:#000;letter-spacing:-0.7px;">14</span>
<div style="left:1702px;top:501px;width:1px;height:14px;background:#505050;"></div>
<span class="t" style="left:1706.00px;top:500.50px;height:16px;line-height:16px;font-size:12px;color:#000;letter-spacing:-0.7px;">20</span>
<div style="left:1751px;top:501px;width:1px;height:14px;background:#505050;"></div>
<span class="t" style="left:1755.00px;top:500.50px;height:16px;line-height:16px;font-size:12px;color:#000;letter-spacing:-0.7px;">26</span>
<div style="left:1291px;top:516px;width:1px;height:14px;background:#505050;"></div>
<span class="t" style="left:1295.00px;top:515.50px;height:16px;line-height:16px;font-size:12px;color:#000;letter-spacing:-0.6px;">Sep</span>
<div style="left:1546px;top:516px;width:1px;height:14px;background:#505050;"></div>
<span class="t" style="left:1550.00px;top:515.50px;height:16px;line-height:16px;font-size:12px;color:#000;letter-spacing:-0.5px;">Oct</span>
<div style="left:1271px;top:531px;width:631px;height:14px;background:linear-gradient(#e6e6e6,#f2f2f2 30%,#efefef);"></div>
<svg style="left:1275px;top:534px" width="5" height="8"><path d="M5 0v8l-5-4z" fill="#404040"/></svg>
<svg style="left:1892px;top:534px" width="5" height="8"><path d="M0 0v8l5-4z" fill="#404040"/></svg>
<div style="left:1787px;top:532px;width:96.5px;height:12px;border:1px solid #979797;border-radius:2px;box-sizing:border-box;background:linear-gradient(#f4f4f4,#e4e4e4 45%,#d2d2d2 55%,#dcdcdc);"></div>
<div style="left:1832px;top:535px;width:1px;height:6px;background:#555;"></div>
<div style="left:1834px;top:535px;width:1px;height:6px;background:#555;"></div>
<div style="left:1836px;top:535px;width:1px;height:6px;background:#555;"></div>
<div style="left:1264px;top:545px;width:639px;height:8px;background:#d9e5f2;"></div>
<div style="left:1264px;top:553px;width:645px;height:1px;background:#4c5560;"></div>
<div style="left:1264px;top:554px;width:645px;height:29px;background:linear-gradient(#bccbda 0,#c8d7e5 35%,#d9e6f3 100%);"></div>
<div style="left:1903px;top:554px;width:6px;height:476px;background:#dbe7f3;"></div>
<svg style="left:1272px;top:563px" width="15" height="13" viewBox="0 0 15 14" preserveAspectRatio="none"><rect x="0.5" y="0.5" width="14" height="13" fill="#fff" stroke="#7aa7d8"/><rect x="0" y="0" width="15" height="2" fill="#5b9ad6"/><path d="M2 6h2l1-1.5 1.5 2.5 1.5-2h4" stroke="#e02020" fill="none" stroke-width="1.2"/><path d="M2.5 13v-3M4.5 13v-2M6.5 13v-3M8.5 13v-2M10.5 13v-3M12.5 13v-2" stroke="#2a6cc0" stroke-width="1"/><path d="M1 9.5h13" stroke="#2a6cc0" stroke-width="1"/></svg>
<span class="t" style="left:1292.00px;top:563.50px;height:16px;line-height:16px;font-size:12px;color:#3d3d3d;letter-spacing:-0.143px;">RIZ0 График цены и объёма #8 - [4 часа]</span>
<div style="left:1803px;top:563px;width:30px;height:16px;border:1px solid #8fa3bd;border-radius:2px;background:linear-gradient(#e9f1f9,#d3e0ee);box-sizing:border-box;"></div>
<div style="left:1813px;top:572px;width:10px;height:4px;background:#fff;border:1px solid #5d6b7c;box-sizing:border-box;"></div>
<div style="left:1836px;top:563px;width:30px;height:16px;border:1px solid #8fa3bd;border-radius:2px;background:linear-gradient(#e9f1f9,#d3e0ee);box-sizing:border-box;"></div>
<div style="left:1846px;top:567px;width:11px;height:9px;background:#fff;border:1px solid #4d5a6c;box-sizing:border-box;"></div>
<div style="left:1849px;top:570px;width:5px;height:3px;background:#dfe8f2;border:1px solid #4d5a6c;box-sizing:border-box;"></div>
<div style="left:1869px;top:563px;width:30px;height:16px;border:1px solid #8fa3bd;border-radius:2px;background:linear-gradient(#e9f1f9,#d3e0ee);box-sizing:border-box;"></div>
<svg style="left:1878px;top:566px" width="12" height="10" viewBox="0 0 12 10"><path d="M0.500 0.500h3.800l1.700 2.200 1.700-2.200h3.800l-3.600 4.500 3.600 4.500h-3.800l-1.700-2.200-1.700 2.200h-3.800l3.600-4.500z" fill="#fff" stroke="#4d5a6c" stroke-width="1"/></svg>
<div style="left:1264px;top:583px;width:638px;height:439px;background:#d0d0d0;"></div>
<div style="left:1902px;top:583px;width:1px;height:439px;background:#c4d0dc;"></div>
<svg style="left:1271px;top:590px" width="583" height="365.5" viewBox="0 0 583 365.5" shape-rendering="crispEdges"><rect x="0" y="0" width="583" height="365.5" fill="#d0d0d0"/><path d="M0 363.5H582M0 348.5H582M0 332.5H582M0 317.5H582M0 301.5H582M0 286.5H582M0 271.5H582M0 255.5H582M0 240.5H582M0 225.5H582M0 209.5H582M0 194.5H582M0 179.5H582M0 163.5H582M0 148.5H582M0 133.5H582M0 117.5H582M0 102.5H582M0 87.5H582M0 71.5H582M0 56.5H582M0 40.5H582M0 25.5H582M0 10.5H582M23.5 0V364.5M74.5 0V364.5M124.5 0V364.5M172.5 0V364.5M222.5 0V364.5M271.5 0V364.5M322.5 0V364.5M372.5 0V364.5M423.5 0V364.5M472.5 0V364.5M522.5 0V364.5" stroke="#666" stroke-width="1" stroke-dasharray="3 3" fill="none"/><path d="M1.5 48.8V75.7M4.5 59.9V76.8M7.5 62.5V66.6M10.5 62.1V70.2M13.5 59.8V66.5M16.5 43.3V61.7M19.5 43.2V52.8M22.5 32.8V50.7M25.5 35.5V56.7M28.5 49.5V63.3M31.5 57.7V69.0M34.5 47.6V64.6M37.5 40.3V54.4M40.5 41.4V49.1M43.5 41.9V49.9M46.5 35.8V49.0M49.5 40.6V48.5M52.5 45.7V99.5M55.5 90.7V96.0M58.5 88.7V97.5M61.5 87.4V102.8M64.5 86.7V115.7M67.5 102.5V129.4M70.5 108.8V132.5M73.5 99.8V127.5M76.5 108.7V115.3M79.5 108.0V117.7M82.5 109.0V117.7M85.5 107.5V128.4M88.5 120.1V128.4M91.5 110.6V123.9M94.5 108.9V127.5M97.5 115.7V134.6M100.5 128.1V154.5M103.5 141.3V161.6M106.5 154.9V163.9M109.5 150.3V165.2M112.5 142.6V160.9M115.5 136.4V150.3M118.5 136.6V142.9M121.5 136.2V142.3M124.5 135.9V162.2M127.5 131.0V166.9M130.5 125.7V143.0M133.5 118.4V138.3M136.5 119.3V126.8M139.5 103.7V124.0M142.5 92.6V111.4M145.5 84.8V106.7M148.5 90.6V116.1M151.5 97.8V115.1M154.5 88.5V109.2M157.5 60.1V93.7M160.5 58.8V75.9M163.5 52.2V67.2M166.5 50.3V65.6M169.5 52.1V66.1M172.5 58.7V67.1M175.5 60.7V68.7M178.5 60.6V68.3M181.5 63.8V96.5M184.5 84.8V92.9M187.5 77.5V92.7M190.5 74.4V89.5M193.5 74.5V86.5M196.5 70.3V92.1M199.5 78.8V106.5M202.5 94.7V113.2M205.5 105.2V135.6M208.5 124.9V153.6M211.5 144.9V157.5M214.5 153.3V164.1M217.5 146.7V165.8M220.5 136.6V153.2M223.5 128.2V140.9M226.5 129.0V142.8M229.5 131.0V141.1M232.5 117.6V146.5M235.5 117.7V129.8M238.5 122.9V129.3M241.5 125.0V163.0M244.5 157.5V190.4M247.5 168.6V187.7M250.5 167.7V173.4M253.5 161.4V177.9M256.5 162.4V171.1M259.5 159.5V177.2M262.5 168.2V192.0M265.5 186.5V197.9M268.5 182.4V197.7M271.5 185.6V196.5M274.5 181.2V197.4M277.5 180.6V193.3M280.5 185.5V195.8M283.5 192.1V218.5M286.5 206.7V220.4M289.5 191.4V212.9M292.5 190.4V208.8M295.5 189.1V204.2M298.5 180.8V197.4M301.5 176.6V184.2M304.5 160.8V179.4M307.5 152.8V173.4M310.5 160.9V178.0M313.5 165.9V193.4M316.5 185.0V198.6M319.5 185.3V226.8M322.5 204.9V229.4M325.5 192.8V220.9M328.5 200.0V210.5M331.5 199.6V209.1M334.5 200.8V210.1M337.5 195.7V210.8M340.5 173.5V199.2M343.5 172.7V187.4M346.5 173.4V187.0M349.5 152.6V185.6M352.5 149.9V178.7M355.5 170.3V185.2M358.5 180.0V197.9M361.5 187.4V213.9M364.5 193.7V206.4M367.5 191.9V203.8M370.5 183.6V200.9M373.5 184.1V195.8M376.5 189.1V200.3M379.5 189.9V202.8M382.5 194.1V201.4M385.5 171.6V197.2M388.5 171.6V181.8M391.5 173.2V184.2M394.5 177.0V182.4M397.5 149.1V179.2M400.5 153.4V171.5M403.5 160.0V172.6M406.5 167.0V177.0M409.5 168.6V176.2M412.5 169.6V178.5M415.5 173.9V184.7M418.5 173.0V198.1M421.5 176.7V193.9M424.5 175.5V192.0M427.5 178.4V185.4M430.5 175.4V195.6M433.5 184.2V215.8M436.5 210.2V218.8M439.5 209.5V217.0M442.5 203.2V221.8M445.5 207.1V218.0M448.5 210.0V219.2M451.5 215.8V228.0M454.5 222.3V228.6M457.5 223.8V238.7M460.5 214.7V236.5M463.5 213.0V226.1M466.5 217.8V228.5M469.5 221.8V233.2M472.5 204.3V237.4M475.5 193.1V218.7M478.5 203.9V214.1M481.5 201.6V214.0M484.5 206.4V212.7M487.5 205.5V212.1M490.5 203.0V210.1M493.5 201.9V212.3M496.5 191.8V213.5M499.5 186.1V198.2M502.5 185.5V198.4M505.5 180.0V201.9M508.5 174.2V201.0M511.5 167.4V179.7M514.5 163.3V183.7M517.5 164.8V179.4M520.5 163.7V181.4M523.5 174.7V192.0M526.5 185.6V195.9M529.5 189.7V220.5M532.5 202.5V221.2M535.5 211.3V220.0M538.5 210.9V227.5M541.5 221.2V233.0M544.5 226.2V242.9M547.5 239.8V295.4M550.5 290.3V311.7M553.5 303.7V309.0M556.5 305.3V321.6M559.5 317.3V331.8M562.5 326.8V329.2" stroke="#000" stroke-width="1" fill="none"/><path d="M0.5 54.3h2.0v19.4h-2.0zM9.5 63.5h2.0v1.4h-2.0zM24.5 36.7h2.0v19.2h-2.0zM27.5 56.0h2.0v4.0h-2.0zM30.5 59.9h2.0v1.5h-2.0zM39.5 43.1h2.0v2.9h-2.0zM45.5 43.8h2.0v1.1h-2.0zM48.5 44.8h2.0v2.3h-2.0zM51.5 47.1h2.0v46.2h-2.0zM54.5 93.4h2.0v1.0h-2.0zM60.5 90.7h2.0v2.5h-2.0zM63.5 93.2h2.0v11.4h-2.0zM66.5 104.6h2.0v16.2h-2.0zM78.5 109.2h2.0v7.4h-2.0zM84.5 112.4h2.0v15.0h-2.0zM93.5 113.4h2.0v10.8h-2.0zM96.5 124.1h2.0v6.2h-2.0zM99.5 130.3h2.0v19.4h-2.0zM102.5 149.7h2.0v9.2h-2.0zM120.5 138.8h2.0v2.4h-2.0zM123.5 141.2h2.0v19.5h-2.0zM129.5 131.9h2.0v3.6h-2.0zM147.5 94.5h2.0v17.1h-2.0zM165.5 53.5h2.0v9.9h-2.0zM171.5 61.4h2.0v4.6h-2.0zM177.5 63.1h2.0v1.9h-2.0zM180.5 65.0h2.0v23.2h-2.0zM195.5 76.8h2.0v4.0h-2.0zM198.5 80.8h2.0v19.1h-2.0zM201.5 99.9h2.0v7.2h-2.0zM204.5 107.1h2.0v21.0h-2.0zM207.5 128.1h2.0v19.5h-2.0zM210.5 147.6h2.0v8.1h-2.0zM213.5 155.7h2.0v5.5h-2.0zM228.5 133.0h2.0v4.6h-2.0zM234.5 119.3h2.0v8.8h-2.0zM240.5 126.4h2.0v34.2h-2.0zM243.5 160.6h2.0v23.9h-2.0zM249.5 170.8h2.0v1.1h-2.0zM258.5 166.3h2.0v3.8h-2.0zM261.5 170.1h2.0v20.7h-2.0zM264.5 190.8h2.0v5.5h-2.0zM270.5 187.3h2.0v6.9h-2.0zM276.5 182.1h2.0v6.1h-2.0zM279.5 188.2h2.0v6.5h-2.0zM282.5 194.7h2.0v19.3h-2.0zM306.5 163.4h2.0v8.4h-2.0zM312.5 171.8h2.0v19.4h-2.0zM318.5 187.5h2.0v35.2h-2.0zM327.5 200.7h2.0v7.6h-2.0zM333.5 202.6h2.0v4.9h-2.0zM342.5 179.3h2.0v2.4h-2.0zM351.5 153.9h2.0v22.3h-2.0zM354.5 176.2h2.0v7.0h-2.0zM357.5 183.2h2.0v6.6h-2.0zM360.5 189.8h2.0v12.9h-2.0zM369.5 192.8h2.0v1.9h-2.0zM375.5 192.8h2.0v1.0h-2.0zM378.5 193.4h2.0v5.2h-2.0zM387.5 172.2h2.0v4.8h-2.0zM390.5 177.0h2.0v3.7h-2.0zM399.5 157.2h2.0v9.1h-2.0zM402.5 166.3h2.0v4.4h-2.0zM405.5 170.7h2.0v4.2h-2.0zM411.5 174.1h2.0v1.2h-2.0zM414.5 175.4h2.0v3.4h-2.0zM417.5 178.7h2.0v13.7h-2.0zM426.5 180.9h2.0v3.2h-2.0zM429.5 184.0h2.0v2.8h-2.0zM432.5 186.8h2.0v26.2h-2.0zM441.5 211.6h2.0v2.2h-2.0zM447.5 211.9h2.0v4.6h-2.0zM450.5 216.5h2.0v10.4h-2.0zM453.5 226.9h2.0v1.0h-2.0zM456.5 227.8h2.0v6.0h-2.0zM462.5 215.5h2.0v5.3h-2.0zM465.5 220.9h2.0v4.9h-2.0zM468.5 225.8h2.0v5.7h-2.0zM477.5 205.3h2.0v1.0h-2.0zM480.5 206.2h2.0v1.6h-2.0zM483.5 207.8h2.0v3.3h-2.0zM492.5 205.6h2.0v3.5h-2.0zM504.5 186.7h2.0v8.7h-2.0zM510.5 175.8h2.0v2.4h-2.0zM516.5 166.3h2.0v5.4h-2.0zM519.5 171.7h2.0v4.7h-2.0zM522.5 176.4h2.0v10.1h-2.0zM525.5 186.5h2.0v7.8h-2.0zM528.5 194.3h2.0v15.2h-2.0zM531.5 209.5h2.0v7.2h-2.0zM537.5 215.1h2.0v8.8h-2.0zM540.5 223.9h2.0v7.4h-2.0zM543.5 231.3h2.0v11.1h-2.0zM546.5 242.4h2.0v48.9h-2.0zM549.5 291.3h2.0v16.7h-2.0zM555.5 307.1h2.0v11.4h-2.0zM558.5 318.5h2.0v9.8h-2.0z" fill="#000" stroke="#000" stroke-width="1"/><path d="M3.5 64.4h2.0v9.4h-2.0zM6.5 63.5h2.0v1.0h-2.0zM12.5 60.6h2.0v4.2h-2.0zM15.5 51.1h2.0v9.5h-2.0zM18.5 44.9h2.0v6.2h-2.0zM21.5 36.7h2.0v8.2h-2.0zM33.5 52.2h2.0v9.2h-2.0zM36.5 43.1h2.0v9.1h-2.0zM42.5 43.8h2.0v2.2h-2.0zM57.5 90.7h2.0v3.3h-2.0zM69.5 114.0h2.0v6.9h-2.0zM72.5 110.7h2.0v3.3h-2.0zM75.5 109.2h2.0v1.5h-2.0zM81.5 112.4h2.0v4.1h-2.0zM87.5 123.3h2.0v4.1h-2.0zM90.5 113.4h2.0v10.0h-2.0zM105.5 156.7h2.0v2.2h-2.0zM108.5 156.4h2.0v1.0h-2.0zM111.5 148.0h2.0v8.4h-2.0zM114.5 141.9h2.0v6.2h-2.0zM117.5 138.8h2.0v3.1h-2.0zM126.5 131.9h2.0v28.9h-2.0zM132.5 125.4h2.0v10.1h-2.0zM135.5 121.4h2.0v4.0h-2.0zM138.5 109.1h2.0v12.4h-2.0zM141.5 98.3h2.0v10.8h-2.0zM144.5 94.5h2.0v3.8h-2.0zM150.5 104.9h2.0v6.7h-2.0zM153.5 90.8h2.0v14.1h-2.0zM156.5 71.4h2.0v19.4h-2.0zM159.5 66.5h2.0v4.9h-2.0zM162.5 53.5h2.0v13.0h-2.0zM168.5 61.4h2.0v2.0h-2.0zM174.5 63.1h2.0v2.9h-2.0zM183.5 85.9h2.0v2.2h-2.0zM186.5 84.9h2.0v1.1h-2.0zM189.5 80.3h2.0v4.5h-2.0zM192.5 76.8h2.0v3.5h-2.0zM216.5 149.0h2.0v12.3h-2.0zM219.5 140.1h2.0v8.9h-2.0zM222.5 133.7h2.0v6.5h-2.0zM225.5 133.0h2.0v1.0h-2.0zM231.5 119.3h2.0v18.3h-2.0zM237.5 126.4h2.0v1.7h-2.0zM246.5 170.8h2.0v13.7h-2.0zM252.5 167.3h2.0v4.7h-2.0zM255.5 166.3h2.0v1.0h-2.0zM267.5 187.3h2.0v9.0h-2.0zM273.5 182.1h2.0v12.1h-2.0zM285.5 209.5h2.0v4.6h-2.0zM288.5 198.1h2.0v11.4h-2.0zM291.5 198.1h2.0v1.0h-2.0zM294.5 193.3h2.0v4.8h-2.0zM297.5 182.3h2.0v11.0h-2.0zM300.5 177.4h2.0v4.9h-2.0zM303.5 163.4h2.0v13.9h-2.0zM309.5 171.8h2.0v1.0h-2.0zM315.5 187.5h2.0v3.8h-2.0zM321.5 218.0h2.0v4.7h-2.0zM324.5 200.7h2.0v17.4h-2.0zM330.5 202.6h2.0v5.6h-2.0zM336.5 196.2h2.0v11.3h-2.0zM339.5 179.3h2.0v16.9h-2.0zM345.5 177.6h2.0v4.2h-2.0zM348.5 153.9h2.0v23.7h-2.0zM363.5 197.8h2.0v4.9h-2.0zM366.5 192.8h2.0v5.1h-2.0zM372.5 192.8h2.0v1.9h-2.0zM381.5 196.5h2.0v2.1h-2.0zM384.5 172.2h2.0v24.3h-2.0zM393.5 177.5h2.0v3.1h-2.0zM396.5 157.2h2.0v20.3h-2.0zM408.5 174.1h2.0v1.0h-2.0zM420.5 185.5h2.0v7.0h-2.0zM423.5 180.9h2.0v4.6h-2.0zM435.5 212.4h2.0v1.0h-2.0zM438.5 211.6h2.0v1.0h-2.0zM444.5 211.9h2.0v1.8h-2.0zM459.5 215.5h2.0v18.3h-2.0zM471.5 215.7h2.0v15.8h-2.0zM474.5 205.3h2.0v10.3h-2.0zM486.5 208.7h2.0v2.3h-2.0zM489.5 205.6h2.0v3.2h-2.0zM495.5 197.7h2.0v11.3h-2.0zM498.5 191.7h2.0v6.0h-2.0zM501.5 186.7h2.0v5.0h-2.0zM507.5 175.8h2.0v19.6h-2.0zM513.5 166.3h2.0v11.8h-2.0zM534.5 215.1h2.0v1.7h-2.0zM552.5 307.1h2.0v1.0h-2.0zM561.5 327.4h2.0v1.0h-2.0z" fill="#fff" stroke="#000" stroke-width="1"/><g shape-rendering="auto"></g><rect x="0" y="62" width="582" height="2" fill="#ff0000"/><rect x="0" y="162" width="582" height="2" fill="#ff0000"/><rect x="0" y="234" width="582" height="2" fill="#ff0000"/><rect x="0" y="347" width="582" height="2" fill="#ff0000"/><rect x="443.6" y="213.0" width="11.5" height="33" fill="rgba(255,0,0,.13)" stroke="#ff0000" stroke-width="2" shape-rendering="auto"/><path d="M560.5 286.0V316.0" stroke="#000" stroke-width="1"/><rect x="0.5" y="0.5" width="582" height="364.5" fill="none" stroke="#505050" stroke-width="1"/></svg>
<div style="left:1854px;top:953px;width:7px;height:1px;background:#404040;"></div>
<div style="left:1854px;top:945px;width:4px;height:1px;background:#404040;"></div>
<div style="left:1854px;top:938px;width:7px;height:1px;background:#404040;"></div>
<div style="left:1854px;top:930px;width:4px;height:1px;background:#404040;"></div>
<div style="left:1854px;top:922px;width:7px;height:1px;background:#404040;"></div>
<div style="left:1854px;top:914px;width:4px;height:1px;background:#404040;"></div>
<div style="left:1854px;top:907px;width:7px;height:1px;background:#404040;"></div>
<div style="left:1854px;top:899px;width:4px;height:1px;background:#404040;"></div>
<div style="left:1854px;top:891px;width:7px;height:1px;background:#404040;"></div>
<div style="left:1854px;top:884px;width:4px;height:1px;background:#404040;"></div>
<div style="left:1854px;top:876px;width:7px;height:1px;background:#404040;"></div>
<div style="left:1854px;top:868px;width:4px;height:1px;background:#404040;"></div>
<div style="left:1854px;top:861px;width:7px;height:1px;background:#404040;"></div>
<div style="left:1854px;top:853px;width:4px;height:1px;background:#404040;"></div>
<div style="left:1854px;top:845px;width:7px;height:1px;background:#404040;"></div>
<div style="left:1854px;top:838px;width:4px;height:1px;background:#404040;"></div>
<div style="left:1854px;top:830px;width:7px;height:1px;background:#404040;"></div>
<div style="left:1854px;top:822px;width:4px;height:1px;background:#404040;"></div>
<div style="left:1854px;top:815px;width:7px;height:1px;background:#404040;"></div>
<div style="left:1854px;top:807px;width:4px;height:1px;background:#404040;"></div>
<div style="left:1854px;top:799px;width:7px;height:1px;background:#404040;"></div>
<div style="left:1854px;top:792px;width:4px;height:1px;background:#404040;"></div>
<div style="left:1854px;top:784px;width:7px;height:1px;background:#404040;"></div>
<div style="left:1854px;top:776px;width:4px;height:1px;background:#404040;"></div>
<div style="left:1854px;top:769px;width:7px;height:1px;background:#404040;"></div>
<div style="left:1854px;top:761px;width:4px;height:1px;background:#404040;"></div>
<div style="left:1854px;top:753px;width:7px;height:1px;background:#404040;"></div>
<div style="left:1854px;top:746px;width:4px;height:1px;background:#404040;"></div>
<div style="left:1854px;top:738px;width:7px;height:1px;background:#404040;"></div>
<div style="left:1854px;top:730px;width:4px;height:1px;background:#404040;"></div>
<div style="left:1854px;top:723px;width:7px;height:1px;background:#404040;"></div>
<div style="left:1854px;top:715px;width:4px;height:1px;background:#404040;"></div>
<div style="left:1854px;top:707px;width:7px;height:1px;background:#404040;"></div>
<div style="left:1854px;top:700px;width:4px;height:1px;background:#404040;"></div>
<div style="left:1854px;top:692px;width:7px;height:1px;background:#404040;"></div>
<div style="left:1854px;top:684px;width:4px;height:1px;background:#404040;"></div>
<div style="left:1854px;top:677px;width:7px;height:1px;background:#404040;"></div>
<div style="left:1854px;top:669px;width:4px;height:1px;background:#404040;"></div>
<div style="left:1854px;top:661px;width:7px;height:1px;background:#404040;"></div>
<div style="left:1854px;top:654px;width:4px;height:1px;background:#404040;"></div>
<div style="left:1854px;top:646px;width:7px;height:1px;background:#404040;"></div>
<div style="left:1854px;top:638px;width:4px;height:1px;background:#404040;"></div>
<div style="left:1854px;top:630px;width:7px;height:1px;background:#404040;"></div>
<div style="left:1854px;top:623px;width:4px;height:1px;background:#404040;"></div>
<div style="left:1854px;top:615px;width:7px;height:1px;background:#404040;"></div>
<div style="left:1854px;top:607px;width:4px;height:1px;background:#404040;"></div>
<div style="left:1854px;top:600px;width:7px;height:1px;background:#404040;"></div>
<div style="left:1854px;top:592px;width:4px;height:1px;background:#404040;"></div>
<span class="t" style="left:1861.00px;top:945.35px;height:16px;line-height:16px;font-size:12px;color:#000;letter-spacing:-0.697px;">104 000</span>
<span class="t" style="left:1861.00px;top:930.00px;height:16px;line-height:16px;font-size:12px;color:#000;letter-spacing:-0.697px;">105 000</span>
<span class="t" style="left:1861.00px;top:914.65px;height:16px;line-height:16px;font-size:12px;color:#000;letter-spacing:-0.697px;">106 000</span>
<span class="t" style="left:1861.00px;top:899.30px;height:16px;line-height:16px;font-size:12px;color:#000;letter-spacing:-0.697px;">107 000</span>
<span class="t" style="left:1861.00px;top:883.95px;height:16px;line-height:16px;font-size:12px;color:#000;letter-spacing:-0.697px;">108 000</span>
<span class="t" style="left:1861.00px;top:868.60px;height:16px;line-height:16px;font-size:12px;color:#000;letter-spacing:-0.697px;">109 000</span>
<span class="t" style="left:1861.00px;top:853.25px;height:16px;line-height:16px;font-size:12px;color:#000;letter-spacing:-0.569px;">110 000</span>
<span class="t" style="left:1861.00px;top:837.90px;height:16px;line-height:16px;font-size:12px;color:#000;letter-spacing:-0.442px;">111 000</span>
<span class="t" style="left:1861.00px;top:822.55px;height:16px;line-height:16px;font-size:12px;color:#000;letter-spacing:-0.569px;">112 000</span>
<span class="t" style="left:1861.00px;top:807.20px;height:16px;line-height:16px;font-size:12px;color:#000;letter-spacing:-0.569px;">113 000</span>
<span class="t" style="left:1861.00px;top:791.85px;height:16px;line-height:16px;font-size:12px;color:#000;letter-spacing:-0.569px;">114 000</span>
<span class="t" style="left:1861.00px;top:776.50px;height:16px;line-height:16px;font-size:12px;color:#000;letter-spacing:-0.569px;">115 000</span>
<span class="t" style="left:1861.00px;top:761.15px;height:16px;line-height:16px;font-size:12px;color:#000;letter-spacing:-0.569px;">116 000</span>
<span class="t" style="left:1861.00px;top:745.80px;height:16px;line-height:16px;font-size:12px;color:#000;letter-spacing:-0.569px;">117 000</span>
<span class="t" style="left:1861.00px;top:730.45px;height:16px;line-height:16px;font-size:12px;color:#000;letter-spacing:-0.569px;">118 000</span>
<span class="t" style="left:1861.00px;top:715.10px;height:16px;line-height:16px;font-size:12px;color:#000;letter-spacing:-0.569px;">119 000</span>
<span class="t" style="left:1861.00px;top:699.75px;height:16px;line-height:16px;font-size:12px;color:#000;letter-spacing:-0.697px;">120 000</span>
<span class="t" style="left:1861.00px;top:684.40px;height:16px;line-height:16px;font-size:12px;color:#000;letter-spacing:-0.697px;">121 000</span>
<span class="t" style="left:1861.00px;top:669.05px;height:16px;line-height:16px;font-size:12px;color:#000;letter-spacing:-0.697px;">122 000</span>
<span class="t" style="left:1861.00px;top:653.70px;height:16px;line-height:16px;font-size:12px;color:#000;letter-spacing:-0.697px;">123 000</span>
<span class="t" style="left:1861.00px;top:638.35px;height:16px;line-height:16px;font-size:12px;color:#000;letter-spacing:-0.697px;">124 000</span>
<span class="t" style="left:1861.00px;top:623.00px;height:16px;line-height:16px;font-size:12px;color:#000;letter-spacing:-0.697px;">125 000</span>
<span class="t" style="left:1861.00px;top:607.65px;height:16px;line-height:16px;font-size:12px;color:#000;letter-spacing:-0.697px;">126 000</span>
<span class="t" style="left:1861.00px;top:592.30px;height:16px;line-height:16px;font-size:12px;color:#000;letter-spacing:-0.697px;">127 000</span>
<div style="left:1861px;top:647px;width:36px;height:12px;background:#ff0000;"></div>
<span class="t" style="left:1862.00px;top:645.26px;height:16px;line-height:16px;font-size:12px;color:#fff;letter-spacing:-1.007px;">123550</span>
<div style="left:1861px;top:747px;width:36px;height:12px;background:#ff0000;"></div>
<span class="t" style="left:1862.00px;top:745.80px;height:16px;line-height:16px;font-size:12px;color:#fff;letter-spacing:-0.859px;">117000</span>
<div style="left:1861px;top:819px;width:36px;height:12px;background:#ff0000;"></div>
<span class="t" style="left:1862.00px;top:817.94px;height:16px;line-height:16px;font-size:12px;color:#fff;letter-spacing:-0.859px;">112300</span>
<div style="left:1861px;top:932px;width:36px;height:12px;background:#ff0000;"></div>
<span class="t" style="left:1862.00px;top:930.00px;height:16px;line-height:16px;font-size:12px;color:#fff;letter-spacing:-1.007px;">105000</span>
<div style="left:1859px;top:906px;width:44px;height:15px;background:#d0d0d0;border:1px solid #858585;box-sizing:border-box;"></div>
<span class="t" style="left:1862.00px;top:905.75px;height:16px;line-height:16px;font-size:12px;color:#ff0000;letter-spacing:-0.768px;">106 580</span>
<div style="left:1295px;top:967.5px;width:16px;height:1.3px;background:#ff0000;"></div>
<span class="t" style="left:1320.50px;top:959.50px;height:16px;line-height:16px;font-size:12px;color:#000;letter-spacing:-0.445px;">RIZ0 [Price]</span>
<div style="left:1271px;top:977px;width:583px;height:1px;background:#505050;"></div>
<div style="left:1271px;top:992px;width:583px;height:1px;background:#505050;"></div>
<div style="left:1271px;top:1007px;width:583px;height:1px;background:#505050;"></div>
<div style="left:1294px;top:978px;width:1px;height:14px;background:#505050;"></div>
<span class="t" style="left:1298.00px;top:977.50px;height:16px;line-height:16px;font-size:12px;color:#000;letter-spacing:-0.7px;">31</span>
<div style="left:1344px;top:978px;width:1px;height:14px;background:#505050;"></div>
<span class="t" style="left:1348.00px;top:977.50px;height:16px;line-height:16px;font-size:12px;color:#000;letter-spacing:-0.7px;">4</span>
<div style="left:1395px;top:978px;width:1px;height:14px;background:#505050;"></div>
<span class="t" style="left:1399.00px;top:977.50px;height:16px;line-height:16px;font-size:12px;color:#000;letter-spacing:-0.7px;">10</span>
<div style="left:1443px;top:978px;width:1px;height:14px;background:#505050;"></div>
<span class="t" style="left:1447.00px;top:977.50px;height:16px;line-height:16px;font-size:12px;color:#000;letter-spacing:-0.7px;">16</span>
<div style="left:1493px;top:978px;width:1px;height:14px;background:#505050;"></div>
<span class="t" style="left:1497.00px;top:977.50px;height:16px;line-height:16px;font-size:12px;color:#000;letter-spacing:-0.7px;">22</span>
<div style="left:1542px;top:978px;width:1px;height:14px;background:#505050;"></div>
<span class="t" style="left:1546.00px;top:977.50px;height:16px;line-height:16px;font-size:12px;color:#000;letter-spacing:-0.7px;">28</span>
<div style="left:1592px;top:978px;width:1px;height:14px;background:#505050;"></div>
<span class="t" style="left:1596.00px;top:977.50px;height:16px;line-height:16px;font-size:12px;color:#000;letter-spacing:-0.7px;">2</span>
<div style="left:1643px;top:978px;width:1px;height:14px;background:#505050;"></div>
<span class="t" style="left:1647.00px;top:977.50px;height:16px;line-height:16px;font-size:12px;color:#000;letter-spacing:-0.7px;">8</span>
<div style="left:1694px;top:978px;width:1px;height:14px;background:#505050;"></div>
<span class="t" style="left:1698.00px;top:977.50px;height:16px;line-height:16px;font-size:12px;color:#000;letter-spacing:-0.7px;">14</span>
<div style="left:1743px;top:978px;width:1px;height:14px;background:#505050;"></div>
<span class="t" style="left:1747.00px;top:977.50px;height:16px;line-height:16px;font-size:12px;color:#000;letter-spacing:-0.7px;">20</span>
<div style="left:1793px;top:978px;width:1px;height:14px;background:#505050;"></div>
<span class="t" style="left:1797.00px;top:977.50px;height:16px;line-height:16px;font-size:12px;color:#000;letter-spacing:-0.7px;">26</span>
<div style="left:1308px;top:993px;width:1px;height:14px;background:#505050;"></div>
<span class="t" style="left:1312.00px;top:992.50px;height:16px;line-height:16px;font-size:12px;color:#000;letter-spacing:-0.6px;">Sep</span>
<div style="left:1580px;top:993px;width:1px;height:14px;background:#505050;"></div>
<span class="t" style="left:1584.00px;top:992.50px;height:16px;line-height:16px;font-size:12px;color:#000;letter-spacing:-0.5px;">Oct</span>
<div style="left:1271px;top:1009px;width:631px;height:14px;background:linear-gradient(#e6e6e6,#f2f2f2 30%,#efefef);"></div>
<svg style="left:1275px;top:1012px" width="5" height="8"><path d="M5 0v8l-5-4z" fill="#404040"/></svg>
<svg style="left:1892px;top:1012px" width="5" height="8"><path d="M0 0v8l5-4z" fill="#404040"/></svg>
<div style="left:1728px;top:1010px;width:155.5px;height:12px;border:1px solid #979797;border-radius:2px;box-sizing:border-box;background:linear-gradient(#f4f4f4,#e4e4e4 45%,#d2d2d2 55%,#dcdcdc);"></div>
<div style="left:1803px;top:1013px;width:1px;height:6px;background:#555;"></div>
<div style="left:1805px;top:1013px;width:1px;height:6px;background:#555;"></div>
<div style="left:1807px;top:1013px;width:1px;height:6px;background:#555;"></div>
<div style="left:1264px;top:1022px;width:639px;height:7px;background:#d9e5f2;"></div>
<div style="left:1264px;top:1029px;width:645px;height:1px;background:#4c5560;"></div>
<div style="left:1264px;top:1030px;width:645px;height:23px;background:#f0f0f0;"></div>
<div style="left:1264px;top:1053px;width:645px;height:1px;background:#c9c9c9;"></div>
<div style="left:1264px;top:1054px;width:645px;height:21px;background:#f1edec;"></div>
<div style="left:1521px;top:1055px;width:1px;height:20px;background:#d8d4d2;"></div>
<div style="left:1522px;top:1055px;width:1px;height:20px;background:#fbfafa;"></div>
<div style="left:1663px;top:1055px;width:1px;height:20px;background:#d8d4d2;"></div>
<div style="left:1664px;top:1055px;width:1px;height:20px;background:#fbfafa;"></div>
<div style="left:1744px;top:1055px;width:1px;height:20px;background:#d8d4d2;"></div>
<div style="left:1745px;top:1055px;width:1px;height:20px;background:#fbfafa;"></div>
<div style="left:1769px;top:1055px;width:1px;height:20px;background:#d8d4d2;"></div>
<div style="left:1770px;top:1055px;width:1px;height:20px;background:#fbfafa;"></div>
<div style="left:1794px;top:1055px;width:1px;height:20px;background:#d8d4d2;"></div>
<div style="left:1795px;top:1055px;width:1px;height:20px;background:#fbfafa;"></div>
<svg style="left:1525px;top:1056px" width="18" height="17" viewBox="0 0 18 17"><rect x="2" y="1" width="6" height="4" fill="#3bb7c9" stroke="#222" stroke-width=".8"/><rect x="1" y="6" width="8" height="1.600" fill="#ddd" stroke="#222" stroke-width=".6"/><rect x="2" y="10" width="6" height="4" fill="#3bb7c9" stroke="#222" stroke-width=".8"/><rect x="1" y="15" width="8" height="1.600" fill="#ddd" stroke="#222" stroke-width=".6"/><path d="M9 13h6v-7" stroke="#2030e0" fill="none"/><circle cx="13.5" cy="8" r="3" fill="#eee" stroke="#222" stroke-width=".8"/><path d="M11.5 8h4M13.5 6v4" stroke="#222" stroke-width=".7"/></svg>
<span class="t" style="left:1546.00px;top:1057.00px;height:16px;line-height:16px;font-size:12px;color:#000;letter-spacing:-0.654px;">78.41.199.16:15100</span>
<div style="left:1802px;top:1060px;width:10px;height:10px;border-radius:50%;background:radial-gradient(circle at 40% 35%,#40ff40,#00e000 60%,#00b800);"></div>
<span class="t" style="left:1819.00px;top:1057.00px;height:16px;line-height:16px;font-size:12px;color:#000;letter-spacing:-0.706px;">29.10.2020</span>
<div style="left:-10px;top:0px;width:1274px;height:1071px;background:#7f9fd6;border-radius:0 0 7px 7px;box-shadow:0 0 0 1px #2b3c5e, 2px 2px 6px 3px rgba(0,0,0,.78);"></div>
<div style="left:0px;top:0px;width:1264px;height:25px;background:linear-gradient(#6587c9 0,#6c8fd0 30%,#86a5dc 70%,#a6bfe8 100%);"></div>
<div style="left:190px;top:4px;width:700px;height:13px;background:linear-gradient(90deg,rgba(55,80,150,0),rgba(55,80,150,.5) 6%,rgba(60,88,160,.42) 55%,rgba(70,100,170,.15) 80%,rgba(70,100,170,0));filter:blur(3px);"></div>
<div style="left:-70px;top:-16px;width:290px;height:54px;background:radial-gradient(ellipse closest-side at 50% 50%,rgba(218,227,243,.97) 0,rgba(207,219,240,.95) 62%,rgba(197,211,237,.7) 80%,rgba(190,206,235,0) 100%);"></div>
<div style="left:0px;top:22px;width:1264px;height:2px;background:linear-gradient(rgba(255,255,255,.0),rgba(225,235,250,.95));"></div>
<div style="left:0px;top:24px;width:1258px;height:1px;background:#465169;"></div>
<div style="left:1257px;top:25px;width:7px;height:1040px;background:linear-gradient(90deg,#e6edf8 0,#b0c2e3 22%,#819bd2 58%,#5c7ab8 100%);"></div>
<div style="left:-10px;top:1064px;width:1274px;height:7px;background:linear-gradient(#e3ebf7 0,#9db4de 22%,#7f9ad0 55%,#7690c8 84%,#e8eef8 86%,#f4f7fc 100%);border-radius:0 0 7px 7px;"></div>
<svg style="left:0;top:2px" width="16" height="18" viewBox="0 0 16 18"><rect x="-2" y="1.500" width="16.500" height="15" fill="#fbfdff" stroke="#35b0ee" stroke-width="1.600"/><path d="M-1 9.500l4.600 4 3.200-8 2.600 4.500 4.400-8.500" fill="none" stroke="#2aa2e4" stroke-width="1.400" stroke-linejoin="round"/></svg>
<span class="t" style="left:20.00px;top:3.25px;height:16.5px;line-height:16.5px;font-size:12.5px;color:#000;letter-spacing:-0.259px;">OptionFVV версия 2.1 public</span>
<div style="left:1155px;top:-4px;width:104px;height:20px;border:1px solid #3a4a70;border-radius:0 0 5px 5px;box-sizing:border-box;background:linear-gradient(#b9c9e6 0,#8fa8d8 45%,#7896cf 50%,#9ab4e0 100%);box-shadow:0 0 0 1px rgba(255,255,255,.55);overflow:hidden;"><div style="left:55px;top:0;width:48px;height:20px;background:linear-gradient(#e5a69c 0,#d0604e 45%,#c03a26 50%,#d4664a 100%);"></div></div>
<div style="left:1183px;top:0px;width:1px;height:15px;background:#3f4d72;"></div>
<div style="left:1184px;top:0px;width:1px;height:15px;background:rgba(255,255,255,.45);"></div>
<div style="left:1210px;top:0px;width:1px;height:15px;background:#3f4d72;"></div>
<div style="left:1211px;top:0px;width:1px;height:15px;background:rgba(255,255,255,.35);"></div>
<div style="left:1164px;top:6px;width:12px;height:5px;background:#fff;border:1px solid #4a5675;box-sizing:border-box;border-radius:1px;"></div>
<div style="left:1192px;top:2px;width:11px;height:9px;background:#8da6d6;border:2px solid #fff;border-top-width:3px;box-sizing:border-box;outline:1px solid #4a5675;"></div>
<svg style="left:1228px;top:1px" width="14" height="11" viewBox="0 0 14 11"><path d="M0.500 0.500h4.200l2.300 2.600 2.300-2.600h4.200l-4.300 4.800 4.300 4.900h-4.200l-2.300-2.700-2.300 2.700h-4.200l4.300-4.900z" fill="#fff" stroke="#5a2a2a" stroke-width="1"/></svg>
<div style="left:0px;top:25px;width:1257px;height:25px;background:#cd853f;"></div>
<span class="t" style="left:14.00px;top:29.75px;height:16.5px;line-height:16.5px;font-size:12.5px;color:#1a0d00;letter-spacing:-0.433px;">Файл</span>
<span class="t" style="left:62.00px;top:29.75px;height:16.5px;line-height:16.5px;font-size:12.5px;color:#1a0d00;letter-spacing:-0.027px;">Торговля</span>
<span class="t" style="left:133.00px;top:29.75px;height:16.5px;line-height:16.5px;font-size:12.5px;color:#1a0d00;letter-spacing:-0.144px;">Настройки</span>
<span class="t" style="left:212.00px;top:29.75px;height:16.5px;line-height:16.5px;font-size:12.5px;color:#1a0d00;letter-spacing:-0.012px;">Окно</span>
<span class="t" style="left:1172.00px;top:29.75px;height:16.5px;line-height:16.5px;font-size:12.5px;color:#1a0d00;letter-spacing:-0.134px;">О программе</span>
<div style="left:0px;top:50px;width:1257px;height:620px;background:#f5f5dc;"></div>
<div style="left:0px;top:70px;width:1255px;height:598px;border:1px solid #898c95;border-left-color:#fbfbf2;border-bottom:none;box-sizing:border-box;background:#f5f5dc;"></div>
<div style="left:0px;top:71px;width:3px;height:597px;background:#fcfcf4;"></div>
<div style="left:0px;top:71px;width:1254px;height:1px;background:#fff;"></div>
<div style="left:1.5px;top:52px;width:42.5px;height:18px;border:1px solid #898c95;border-bottom:none;box-sizing:border-box;background:linear-gradient(#f4f4f2 0,#ececea 48%,#dededc 52%,#d5d5d2 100%);box-shadow:inset 1px 1px 0 #fcfcfc,inset -1px 0 0 #fcfcfc;"></div>
<span class="t" style="left:7.00px;top:55.00px;height:15px;line-height:15px;font-size:11px;color:#000;letter-spacing:0.027px;">Доска</span>
<div style="left:120px;top:52px;width:49px;height:18px;border:1px solid #898c95;border-bottom:none;box-sizing:border-box;background:linear-gradient(#f4f4f2 0,#ececea 48%,#dededc 52%,#d5d5d2 100%);box-shadow:inset 1px 1px 0 #fcfcfc,inset -1px 0 0 #fcfcfc;"></div>
<span class="t" style="left:125.50px;top:55.00px;height:15px;line-height:15px;font-size:11px;color:#000;letter-spacing:-0.092px;">Улыбка</span>
<div style="left:170.5px;top:52px;width:76px;height:18px;border:1px solid #898c95;border-bottom:none;box-sizing:border-box;background:linear-gradient(#f4f4f2 0,#ececea 48%,#dededc 52%,#d5d5d2 100%);box-shadow:inset 1px 1px 0 #fcfcfc,inset -1px 0 0 #fcfcfc;"></div>
<span class="t" style="left:176.00px;top:55.00px;height:15px;line-height:15px;font-size:11px;color:#000;letter-spacing:-0.036px;">Калькулятор</span>
<div style="left:248px;top:52px;width:40px;height:18px;border:1px solid #898c95;border-bottom:none;box-sizing:border-box;background:linear-gradient(#f4f4f2 0,#ececea 48%,#dededc 52%,#d5d5d2 100%);box-shadow:inset 1px 1px 0 #fcfcfc,inset -1px 0 0 #fcfcfc;"></div>
<span class="t" style="left:252.00px;top:55.00px;height:15px;line-height:15px;font-size:11px;color:#000;letter-spacing:-0.450px;">Лог</span>
<div style="left:290px;top:52px;width:51px;height:18px;border:1px solid #898c95;border-bottom:none;box-sizing:border-box;background:linear-gradient(#f4f4f2 0,#ececea 48%,#dededc 52%,#d5d5d2 100%);box-shadow:inset 1px 1px 0 #fcfcfc,inset -1px 0 0 #fcfcfc;"></div>
<span class="t" style="left:295.50px;top:55.00px;height:15px;line-height:15px;font-size:11px;color:#000;letter-spacing:-0.207px;">Данные</span>
<div style="left:342.5px;top:52px;width:46.5px;height:18px;border:1px solid #898c95;border-bottom:none;box-sizing:border-box;background:linear-gradient(#f4f4f2 0,#ececea 48%,#dededc 52%,#d5d5d2 100%);box-shadow:inset 1px 1px 0 #fcfcfc,inset -1px 0 0 #fcfcfc;"></div>
<span class="t" style="left:348.00px;top:55.00px;height:15px;line-height:15px;font-size:11px;color:#000;letter-spacing:-0.215px;">Сделки</span>
<div style="left:45px;top:50px;width:75px;height:21px;border:1px solid #898c95;border-bottom:none;box-sizing:border-box;background:#fff;"></div>
<div style="left:46px;top:70px;width:73px;height:1px;background:#fdfdf4;"></div>
<span class="t" style="left:52.00px;top:52.50px;height:15px;line-height:15px;font-size:11px;color:#000;letter-spacing:0.199px;">Диаграмма</span>
<div style="left:10px;top:76px;width:13px;height:13px;border:1px solid #8e8f8f;box-sizing:border-box;background:linear-gradient(135deg,#cfd3d6 0,#eef0f1 55%,#fdfdfd 100%);box-shadow:inset 0 0 0 1px #f4f4f4;"></div>
<svg style="left:10px;top:76px" width="13" height="13" viewBox="0 0 13 13"><path d="M3.2 6.300l1.200-.6 1.500 2.600c.9-2.300 2-4 3.600-5.600l.7.500c-1.600 2.100-2.700 4.300-3.600 7.300h-1.300c-.5-1.500-1.200-2.900-2.100-4.200z" fill="#31347c" stroke="#4a5fa8" stroke-width=".5"/></svg>
<div style="left:125px;top:76px;width:18px;height:13px;background:#5c2e14;"></div>
<div style="left:149px;top:76px;width:18px;height:13px;background:#0b5e0b;"></div>
<div style="left:10px;top:99px;width:13px;height:13px;border:1px solid #8e8f8f;box-sizing:border-box;background:linear-gradient(135deg,#cfd3d6 0,#eef0f1 55%,#fdfdfd 100%);box-shadow:inset 0 0 0 1px #f4f4f4;"></div>
<svg style="left:10px;top:99px" width="13" height="13" viewBox="0 0 13 13"><path d="M3.2 6.300l1.200-.6 1.500 2.600c.9-2.300 2-4 3.600-5.600l.7.500c-1.600 2.100-2.700 4.300-3.600 7.300h-1.300c-.5-1.500-1.200-2.900-2.100-4.200z" fill="#31347c" stroke="#4a5fa8" stroke-width=".5"/></svg>
<div style="left:125px;top:99px;width:18px;height:13px;background:#b5602a;"></div>
<div style="left:149px;top:99px;width:18px;height:13px;background:#14c814;"></div>
<div style="left:10px;top:125px;width:13px;height:13px;border:1px solid #8e8f8f;box-sizing:border-box;background:linear-gradient(135deg,#cfd3d6 0,#eef0f1 55%,#fdfdfd 100%);box-shadow:inset 0 0 0 1px #f4f4f4;"></div>
<svg style="left:10px;top:125px" width="13" height="13" viewBox="0 0 13 13"><path d="M3.2 6.300l1.200-.6 1.500 2.600c.9-2.300 2-4 3.600-5.600l.7.500c-1.600 2.100-2.700 4.300-3.600 7.300h-1.300c-.5-1.500-1.200-2.900-2.100-4.200z" fill="#31347c" stroke="#4a5fa8" stroke-width=".5"/></svg>
<div style="left:125px;top:125px;width:18px;height:13px;background:#ffb266;"></div>
<div style="left:149px;top:125px;width:18px;height:13px;background:#28f028;"></div>
<div style="left:10px;top:149px;width:13px;height:13px;border:1px solid #8e8f8f;box-sizing:border-box;background:linear-gradient(135deg,#cfd3d6 0,#eef0f1 55%,#fdfdfd 100%);box-shadow:inset 0 0 0 1px #f4f4f4;"></div>
<svg style="left:10px;top:149px" width="13" height="13" viewBox="0 0 13 13"><path d="M3.2 6.300l1.200-.6 1.500 2.600c.9-2.300 2-4 3.600-5.600l.7.500c-1.600 2.100-2.700 4.300-3.600 7.300h-1.300c-.5-1.500-1.200-2.900-2.100-4.200z" fill="#31347c" stroke="#4a5fa8" stroke-width=".5"/></svg>
<div style="left:125px;top:149px;width:18px;height:13px;background:#3a1a0a;"></div>
<div style="left:149px;top:149px;width:18px;height:13px;background:#008000;"></div>
<span class="t" style="left:29.00px;top:75.50px;height:15px;line-height:15px;font-size:11px;color:#000;letter-spacing:0.000px;">Текущий</span>
<span class="t" style="left:29.00px;top:148.00px;height:15px;line-height:15px;font-size:11px;color:#000;letter-spacing:-0.016px;">На экспирацию</span>
<span class="t" style="left:29.00px;top:98.00px;height:15px;line-height:15px;font-size:11px;color:#000;">+</span>
<div style="left:48px;top:96px;width:27px;height:19px;background:#fff;border:1px solid #e3e9ef;border-top-color:#abadb3;box-sizing:border-box;"></div>
<span class="t" style="left:52.00px;top:97.50px;height:15px;line-height:15px;font-size:11px;color:#000;">1</span>
<span class="t" style="left:88.00px;top:98.00px;height:15px;line-height:15px;font-size:11px;color:#000;letter-spacing:0.053px;">Дней</span>
<span class="t" style="left:29.00px;top:124.00px;height:15px;line-height:15px;font-size:11px;color:#000;">+</span>
<div style="left:48px;top:122px;width:27px;height:19px;background:#fff;border:1px solid #e3e9ef;border-top-color:#abadb3;box-sizing:border-box;"></div>
<span class="t" style="left:52.00px;top:123.50px;height:15px;line-height:15px;font-size:11px;color:#000;">2</span>
<span class="t" style="left:88.00px;top:124.00px;height:15px;line-height:15px;font-size:11px;color:#000;letter-spacing:0.053px;">Дней</span>
<div style="left:10px;top:172px;width:13px;height:13px;border:1px solid #8e8f8f;box-sizing:border-box;background:linear-gradient(135deg,#cfd3d6 0,#eef0f1 55%,#fdfdfd 100%);box-shadow:inset 0 0 0 1px #f4f4f4;"></div>
<span class="t" style="left:28.50px;top:171.50px;height:15px;line-height:15px;font-size:11px;color:#000;letter-spacing:0.007px;">Сравнить со стратегией</span>
<div style="left:10px;top:194px;width:157px;height:20px;border:1px solid #707070;border-radius:3px;box-sizing:border-box;background:linear-gradient(#f3f3f3 0,#ececec 48%,#dedede 52%,#d0d0d0 100%);box-shadow:inset 0 0 0 1px rgba(255,255,255,.75);"></div>
<span class="t" style="left:14.00px;top:197.00px;height:15px;line-height:15px;font-size:11px;color:#000;">Si HH</span>
<svg style="left:153px;top:203px" width="8" height="4"><path d="M0 0h8l-4 4z" fill="#000"/></svg>
<div style="left:10px;top:227px;width:161px;height:152px;border:1px solid #d5dfe5;border-radius:3px;box-sizing:border-box;box-shadow:inset 0 0 0 1px #fff;"></div>
<div style="left:17px;top:221px;width:69px;height:13px;background:#f5f5dc;"></div>
<span class="t" style="left:19.00px;top:220.50px;height:15px;line-height:15px;font-size:11px;color:#000;letter-spacing:0.071px;">Чего рисуем</span>
<div style="left:20px;top:243px;width:12px;height:12px;border-radius:50%;border:1px solid #8e8f8f;box-sizing:border-box;background:radial-gradient(circle at 65% 65%,#fdfdfd 0,#e9eaea 50%,#c9cdd0 100%);"></div>
<div style="left:23px;top:246px;width:6px;height:6px;border-radius:50%;background:radial-gradient(circle at 35% 30%,#9fdcf8 0,#1f7fc4 40%,#0b3358 100%);"></div>
<span class="t" style="left:39.00px;top:241.50px;height:15px;line-height:15px;font-size:11px;color:#000;">Прибыль</span>
<div style="left:20px;top:266px;width:12px;height:12px;border-radius:50%;border:1px solid #8e8f8f;box-sizing:border-box;background:radial-gradient(circle at 65% 65%,#fdfdfd 0,#e9eaea 50%,#c9cdd0 100%);"></div>
<span class="t" style="left:39.00px;top:264.50px;height:15px;line-height:15px;font-size:11px;color:#000;">Дельта</span>
<div style="left:20px;top:289px;width:12px;height:12px;border-radius:50%;border:1px solid #8e8f8f;box-sizing:border-box;background:radial-gradient(circle at 65% 65%,#fdfdfd 0,#e9eaea 50%,#c9cdd0 100%);"></div>
<span class="t" style="left:39.00px;top:287.50px;height:15px;line-height:15px;font-size:11px;color:#000;">Гамма</span>
<div style="left:20px;top:312px;width:12px;height:12px;border-radius:50%;border:1px solid #8e8f8f;box-sizing:border-box;background:radial-gradient(circle at 65% 65%,#fdfdfd 0,#e9eaea 50%,#c9cdd0 100%);"></div>
<span class="t" style="left:39.00px;top:310.50px;height:15px;line-height:15px;font-size:11px;color:#000;">Вега</span>
<div style="left:20px;top:335px;width:12px;height:12px;border-radius:50%;border:1px solid #8e8f8f;box-sizing:border-box;background:radial-gradient(circle at 65% 65%,#fdfdfd 0,#e9eaea 50%,#c9cdd0 100%);"></div>
<span class="t" style="left:39.00px;top:333.50px;height:15px;line-height:15px;font-size:11px;color:#000;">Тета</span>
<div style="left:20px;top:358px;width:12px;height:12px;border-radius:50%;border:1px solid #8e8f8f;box-sizing:border-box;background:radial-gradient(circle at 65% 65%,#fdfdfd 0,#e9eaea 50%,#c9cdd0 100%);"></div>
<span class="t" style="left:39.00px;top:356.50px;height:15px;line-height:15px;font-size:11px;color:#000;">Вомма</span>
<div style="left:10px;top:392px;width:161px;height:68px;border:1px solid #d5dfe5;border-radius:3px;box-sizing:border-box;box-shadow:inset 0 0 0 1px #fff;"></div>
<div style="left:17px;top:386px;width:118px;height:13px;background:#f5f5dc;"></div>
<span class="t" style="left:19.00px;top:385.00px;height:15px;line-height:15px;font-size:11px;color:#000;letter-spacing:-0.059px;">Отрисовка графика %</span>
<span class="t" style="left:20.00px;top:407.50px;height:15px;line-height:15px;font-size:11px;color:#000;letter-spacing:-0.547px;">Выше</span>
<div style="left:53px;top:405px;width:25px;height:20px;border:1px solid #707070;border-radius:3px;box-sizing:border-box;background:linear-gradient(#f3f3f3 0,#ececec 48%,#dedede 52%,#d0d0d0 100%);box-shadow:inset 0 0 0 1px rgba(255,255,255,.75);"></div>
<span class="t" style="left:62.29px;top:408.00px;height:15px;line-height:15px;font-size:11px;color:#000;">&lt;</span>
<div style="left:86px;top:406px;width:45px;height:18px;background:#f0f0ea;border:1px solid #e8ecf0;border-top-color:#abadb3;box-sizing:border-box;"></div>
<span class="t" style="left:102.38px;top:407.20px;height:15px;line-height:15px;font-size:11px;color:#000;">10</span>
<div style="left:138px;top:405px;width:25px;height:20px;border:1px solid #707070;border-radius:3px;box-sizing:border-box;background:linear-gradient(#f3f3f3 0,#ececec 48%,#dedede 52%,#d0d0d0 100%);box-shadow:inset 0 0 0 1px rgba(255,255,255,.75);"></div>
<span class="t" style="left:147.29px;top:408.00px;height:15px;line-height:15px;font-size:11px;color:#000;">&gt;</span>
<span class="t" style="left:20.00px;top:433.50px;height:15px;line-height:15px;font-size:11px;color:#000;letter-spacing:0.109px;">Ниже</span>
<div style="left:53px;top:431px;width:25px;height:20px;border:1px solid #707070;border-radius:3px;box-sizing:border-box;background:linear-gradient(#f3f3f3 0,#ececec 48%,#dedede 52%,#d0d0d0 100%);box-shadow:inset 0 0 0 1px rgba(255,255,255,.75);"></div>
<span class="t" style="left:62.29px;top:434.00px;height:15px;line-height:15px;font-size:11px;color:#000;">&lt;</span>
<div style="left:86px;top:432px;width:45px;height:18px;background:#f0f0ea;border:1px solid #e8ecf0;border-top-color:#abadb3;box-sizing:border-box;"></div>
<span class="t" style="left:102.38px;top:433.20px;height:15px;line-height:15px;font-size:11px;color:#000;">10</span>
<div style="left:138px;top:431px;width:25px;height:20px;border:1px solid #3c7fb1;border-radius:3px;box-sizing:border-box;background:linear-gradient(#eaf6fd 0,#d9f0fc 48%,#bee6fd 52%,#a7d9f5 100%);box-shadow:inset 0 0 0 1px #48d8fb;"></div>
<span class="t" style="left:147.29px;top:434.00px;height:15px;line-height:15px;font-size:11px;color:#000;">&gt;</span>
<span class="t" style="left:14.00px;top:492.50px;height:15px;line-height:15px;font-size:11px;color:#000;letter-spacing:0.099px;">Шаг сетки Y</span>
<div style="left:122px;top:491px;width:49px;height:19px;background:#ecece4;border:1px solid #b9bdc4;border-top-color:#abadb3;box-sizing:border-box;"></div>
<span class="t" style="left:126.00px;top:492.50px;height:15px;line-height:15px;font-size:11px;color:#8a8a8a;">1000</span>
<div style="left:14px;top:510px;width:13px;height:13px;border:1px solid #8e8f8f;box-sizing:border-box;background:linear-gradient(135deg,#cfd3d6 0,#eef0f1 55%,#fdfdfd 100%);box-shadow:inset 0 0 0 1px #f4f4f4;"></div>
<svg style="left:14px;top:510px" width="13" height="13" viewBox="0 0 13 13"><path d="M3.2 6.300l1.200-.6 1.500 2.600c.9-2.300 2-4 3.600-5.600l.7.500c-1.600 2.100-2.700 4.300-3.600 7.300h-1.300c-.5-1.500-1.200-2.900-2.100-4.200z" fill="#31347c" stroke="#4a5fa8" stroke-width=".5"/></svg>
<span class="t" style="left:33.00px;top:509.50px;height:15px;line-height:15px;font-size:11px;color:#000;letter-spacing:0.007px;">Авто</span>
<span class="t" style="left:92.00px;top:509.50px;height:15px;line-height:15px;font-size:11px;color:#000;">2000</span>
<span class="t" style="left:14.00px;top:528.50px;height:15px;line-height:15px;font-size:11px;color:#000;letter-spacing:0.099px;">Шаг сетки X</span>
<div style="left:122px;top:527px;width:49px;height:19px;background:#ecece4;border:1px solid #e3e9ef;border-top-color:#abadb3;box-sizing:border-box;"></div>
<span class="t" style="left:126.00px;top:528.50px;height:15px;line-height:15px;font-size:11px;color:#000;">250</span>
<span class="t" style="left:14.00px;top:554.50px;height:15px;line-height:15px;font-size:11px;color:#000;letter-spacing:-0.205px;">Кол-во СКО</span>
<div style="left:122px;top:553px;width:49px;height:19px;background:#fff;border:1px solid #e3e9ef;border-top-color:#abadb3;box-sizing:border-box;"></div>
<span class="t" style="left:126.00px;top:554.50px;height:15px;line-height:15px;font-size:11px;color:#000;">2</span>
<span class="t" style="left:14.00px;top:580.50px;height:15px;line-height:15px;font-size:11px;color:#000;letter-spacing:-0.184px;">Кол-во дней</span>
<div style="left:122px;top:579px;width:49px;height:19px;background:#fff;border:1px solid #e3e9ef;border-top-color:#abadb3;box-sizing:border-box;"></div>
<span class="t" style="left:126.00px;top:580.50px;height:15px;line-height:15px;font-size:11px;color:#000;">1</span>
<svg style="left:0;top:0" width="1257" height="668" viewBox="0 0 1257 668" font-family="Liberation Sans, sans-serif"><path d="M306.2 134.5H1209.38M306.2 168.5H1209.38M306.2 201.5H1209.38M306.2 235.5H1209.38M306.2 269.5H1209.38M306.2 303.5H1209.38M306.2 336.5H1209.38M306.2 370.5H1209.38M306.2 404.5H1209.38M306.2 438.5H1209.38M306.2 471.5H1209.38M306.2 505.5H1209.38M306.2 539.5H1209.38M306.2 572.5H1209.38M306.2 606.5H1209.38M306.2 640.5H1209.38M320.5 134.468V640.463M334.5 134.468V640.463M348.5 134.468V640.463M362.5 134.468V640.463M376.5 134.468V640.463M390.5 134.468V640.463M403.5 134.468V640.463M417.5 134.468V640.463M431.5 134.468V640.463M445.5 134.468V640.463M459.5 134.468V640.463M473.5 134.468V640.463M487.5 134.468V640.463M501.5 134.468V640.463M515.5 134.468V640.463M529.5 134.468V640.463M542.5 134.468V640.463M556.5 134.468V640.463M570.5 134.468V640.463M584.5 134.468V640.463M598.5 134.468V640.463M612.5 134.468V640.463M626.5 134.468V640.463M640.5 134.468V640.463M654.5 134.468V640.463M667.5 134.468V640.463M681.5 134.468V640.463M695.5 134.468V640.463M709.5 134.468V640.463M723.5 134.468V640.463M737.5 134.468V640.463M751.5 134.468V640.463M765.5 134.468V640.463M779.5 134.468V640.463M793.5 134.468V640.463M806.5 134.468V640.463M820.5 134.468V640.463M834.5 134.468V640.463M848.5 134.468V640.463M862.5 134.468V640.463M876.5 134.468V640.463M890.5 134.468V640.463M904.5 134.468V640.463M918.5 134.468V640.463M931.5 134.468V640.463M945.5 134.468V640.463M959.5 134.468V640.463M973.5 134.468V640.463M987.5 134.468V640.463M1001.5 134.468V640.463M1015.5 134.468V640.463M1029.5 134.468V640.463M1043.5 134.468V640.463M1057.5 134.468V640.463M1070.5 134.468V640.463M1084.5 134.468V640.463M1098.5 134.468V640.463M1112.5 134.468V640.463M1126.5 134.468V640.463M1140.5 134.468V640.463M1154.5 134.468V640.463M1168.5 134.468V640.463M1182.5 134.468V640.463M1195.5 134.468V640.463M1209.5 134.468V640.463" stroke="#d2d2da" stroke-width="1" stroke-dasharray="3 2" fill="none" shape-rendering="crispEdges"/><rect x="636" y="134.468" width="2" height="505.995" fill="#f7c3cb"/><rect x="875" y="134.468" width="2" height="505.995" fill="#f7c3cb"/><rect x="756" y="134.468" width="2" height="505.995" fill="#9a9ea6"/><rect x="306" y="134.468" width="2" height="506.995" fill="#c6c6cc"/><rect x="306.2" y="268.5" width="903.175" height="2" fill="#cdcdd3"/><rect x="296" y="134" width="10" height="1" fill="#222"/><text x="292.5" y="137.8" font-size="12.5" text-anchor="end" fill="#000">8000</text><rect x="296" y="168" width="10" height="1" fill="#222"/><text x="292.5" y="171.8" font-size="12.5" text-anchor="end" fill="#000">6000</text><rect x="296" y="201" width="10" height="1" fill="#222"/><text x="292.5" y="204.8" font-size="12.5" text-anchor="end" fill="#000">4000</text><rect x="296" y="235" width="10" height="1" fill="#222"/><text x="292.5" y="238.8" font-size="12.5" text-anchor="end" fill="#000">2000</text><rect x="296" y="269" width="10" height="1" fill="#222"/><text x="292.5" y="272.8" font-size="12.5" text-anchor="end" fill="#000">0</text><rect x="296" y="303" width="10" height="1" fill="#222"/><text x="292.5" y="306.8" font-size="12.5" text-anchor="end" fill="#000">-2000</text><rect x="296" y="336" width="10" height="1" fill="#222"/><text x="292.5" y="339.8" font-size="12.5" text-anchor="end" fill="#000">-4000</text><rect x="296" y="370" width="10" height="1" fill="#222"/><text x="292.5" y="373.8" font-size="12.5" text-anchor="end" fill="#000">-6000</text><rect x="296" y="404" width="10" height="1" fill="#222"/><text x="292.5" y="407.8" font-size="12.5" text-anchor="end" fill="#000">-8000</text><rect x="296" y="438" width="10" height="1" fill="#222"/><text x="292.5" y="441.8" font-size="12.5" text-anchor="end" fill="#000">-10000</text><rect x="296" y="471" width="10" height="1" fill="#222"/><text x="292.5" y="474.8" font-size="12.5" text-anchor="end" fill="#000">-12000</text><rect x="296" y="505" width="10" height="1" fill="#222"/><text x="292.5" y="508.8" font-size="12.5" text-anchor="end" fill="#000">-14000</text><rect x="296" y="539" width="10" height="1" fill="#222"/><text x="292.5" y="542.8" font-size="12.5" text-anchor="end" fill="#000">-16000</text><rect x="296" y="572" width="10" height="1" fill="#222"/><text x="292.5" y="575.8" font-size="12.5" text-anchor="end" fill="#000">-18000</text><rect x="296" y="606" width="10" height="1" fill="#222"/><text x="292.5" y="609.8" font-size="12.5" text-anchor="end" fill="#000">-20000</text><rect x="296" y="640" width="10" height="1" fill="#222"/><text x="292.5" y="643.8" font-size="12.5" text-anchor="end" fill="#000">-22000</text><rect x="305.9" y="270.2" width="1.3" height="6.500" fill="#111"/><text transform="translate(309.5,278) rotate(-90)" font-size="11.5" text-anchor="end" fill="#000" textLength="29.5" lengthAdjust="spacingAndGlyphs">71750</text><rect x="319.9" y="270.2" width="1.3" height="6.500" fill="#111"/><text transform="translate(323.5,278) rotate(-90)" font-size="11.5" text-anchor="end" fill="#000" textLength="29.5" lengthAdjust="spacingAndGlyphs">72000</text><rect x="333.9" y="270.2" width="1.3" height="6.500" fill="#111"/><text transform="translate(337.5,278) rotate(-90)" font-size="11.5" text-anchor="end" fill="#000" textLength="29.5" lengthAdjust="spacingAndGlyphs">72250</text><rect x="347.9" y="270.2" width="1.3" height="6.500" fill="#111"/><text transform="translate(351.5,278) rotate(-90)" font-size="11.5" text-anchor="end" fill="#000" textLength="29.5" lengthAdjust="spacingAndGlyphs">72500</text><rect x="361.9" y="270.2" width="1.3" height="6.500" fill="#111"/><text transform="translate(365.5,278) rotate(-90)" font-size="11.5" text-anchor="end" fill="#000" textLength="29.5" lengthAdjust="spacingAndGlyphs">72750</text><rect x="375.9" y="270.2" width="1.3" height="6.500" fill="#111"/><text transform="translate(379.5,278) rotate(-90)" font-size="11.5" text-anchor="end" fill="#000" textLength="29.5" lengthAdjust="spacingAndGlyphs">73000</text><rect x="389.9" y="270.2" width="1.3" height="6.500" fill="#111"/><text transform="translate(393.5,278) rotate(-90)" font-size="11.5" text-anchor="end" fill="#000" textLength="29.5" lengthAdjust="spacingAndGlyphs">73250</text><rect x="402.9" y="270.2" width="1.3" height="6.500" fill="#111"/><text transform="translate(406.5,278) rotate(-90)" font-size="11.5" text-anchor="end" fill="#000" textLength="29.5" lengthAdjust="spacingAndGlyphs">73500</text><rect x="416.9" y="270.2" width="1.3" height="6.500" fill="#111"/><text transform="translate(420.5,278) rotate(-90)" font-size="11.5" text-anchor="end" fill="#000" textLength="29.5" lengthAdjust="spacingAndGlyphs">73750</text><rect x="430.9" y="270.2" width="1.3" height="6.500" fill="#111"/><text transform="translate(434.5,278) rotate(-90)" font-size="11.5" text-anchor="end" fill="#000" textLength="29.5" lengthAdjust="spacingAndGlyphs">74000</text><rect x="444.9" y="270.2" width="1.3" height="6.500" fill="#111"/><text transform="translate(448.5,278) rotate(-90)" font-size="11.5" text-anchor="end" fill="#000" textLength="29.5" lengthAdjust="spacingAndGlyphs">74250</text><rect x="458.9" y="270.2" width="1.3" height="6.500" fill="#111"/><text transform="translate(462.5,278) rotate(-90)" font-size="11.5" text-anchor="end" fill="#000" textLength="29.5" lengthAdjust="spacingAndGlyphs">74500</text><rect x="472.9" y="270.2" width="1.3" height="6.500" fill="#111"/><text transform="translate(476.5,278) rotate(-90)" font-size="11.5" text-anchor="end" fill="#000" textLength="29.5" lengthAdjust="spacingAndGlyphs">74750</text><rect x="486.9" y="270.2" width="1.3" height="6.500" fill="#111"/><text transform="translate(490.5,278) rotate(-90)" font-size="11.5" text-anchor="end" fill="#000" textLength="29.5" lengthAdjust="spacingAndGlyphs">75000</text><rect x="500.9" y="270.2" width="1.3" height="6.500" fill="#111"/><text transform="translate(504.5,278) rotate(-90)" font-size="11.5" text-anchor="end" fill="#000" textLength="29.5" lengthAdjust="spacingAndGlyphs">75250</text><rect x="514.9" y="270.2" width="1.3" height="6.500" fill="#111"/><text transform="translate(518.5,278) rotate(-90)" font-size="11.5" text-anchor="end" fill="#000" textLength="29.5" lengthAdjust="spacingAndGlyphs">75500</text><rect x="528.9" y="270.2" width="1.3" height="6.500" fill="#111"/><text transform="translate(532.5,278) rotate(-90)" font-size="11.5" text-anchor="end" fill="#000" textLength="29.5" lengthAdjust="spacingAndGlyphs">75750</text><rect x="541.9" y="270.2" width="1.3" height="6.500" fill="#111"/><text transform="translate(545.5,278) rotate(-90)" font-size="11.5" text-anchor="end" fill="#000" textLength="29.5" lengthAdjust="spacingAndGlyphs">76000</text><rect x="555.9" y="270.2" width="1.3" height="6.500" fill="#111"/><text transform="translate(559.5,278) rotate(-90)" font-size="11.5" text-anchor="end" fill="#000" textLength="29.5" lengthAdjust="spacingAndGlyphs">76250</text><rect x="569.9" y="270.2" width="1.3" height="6.500" fill="#111"/><text transform="translate(573.5,278) rotate(-90)" font-size="11.5" text-anchor="end" fill="#000" textLength="29.5" lengthAdjust="spacingAndGlyphs">76500</text><rect x="583.9" y="270.2" width="1.3" height="6.500" fill="#111"/><text transform="translate(587.5,278) rotate(-90)" font-size="11.5" text-anchor="end" fill="#000" textLength="29.5" lengthAdjust="spacingAndGlyphs">76750</text><rect x="597.9" y="270.2" width="1.3" height="6.500" fill="#111"/><text transform="translate(601.5,278) rotate(-90)" font-size="11.5" text-anchor="end" fill="#000" textLength="29.5" lengthAdjust="spacingAndGlyphs">77000</text><rect x="611.9" y="270.2" width="1.3" height="6.500" fill="#111"/><text transform="translate(615.5,278) rotate(-90)" font-size="11.5" text-anchor="end" fill="#000" textLength="29.5" lengthAdjust="spacingAndGlyphs">77250</text><rect x="625.9" y="270.2" width="1.3" height="6.500" fill="#111"/><text transform="translate(629.5,278) rotate(-90)" font-size="11.5" text-anchor="end" fill="#000" textLength="29.5" lengthAdjust="spacingAndGlyphs">77500</text><rect x="639.9" y="270.2" width="1.3" height="6.500" fill="#111"/><text transform="translate(643.5,278) rotate(-90)" font-size="11.5" text-anchor="end" fill="#000" textLength="29.5" lengthAdjust="spacingAndGlyphs">77750</text><rect x="653.9" y="270.2" width="1.3" height="6.500" fill="#111"/><text transform="translate(657.5,278) rotate(-90)" font-size="11.5" text-anchor="end" fill="#000" textLength="29.5" lengthAdjust="spacingAndGlyphs">78000</text><rect x="666.9" y="270.2" width="1.3" height="6.500" fill="#111"/><text transform="translate(670.5,278) rotate(-90)" font-size="11.5" text-anchor="end" fill="#000" textLength="29.5" lengthAdjust="spacingAndGlyphs">78250</text><rect x="680.9" y="270.2" width="1.3" height="6.500" fill="#111"/><text transform="translate(684.5,278) rotate(-90)" font-size="11.5" text-anchor="end" fill="#000" textLength="29.5" lengthAdjust="spacingAndGlyphs">78500</text><rect x="694.9" y="270.2" width="1.3" height="6.500" fill="#111"/><text transform="translate(698.5,278) rotate(-90)" font-size="11.5" text-anchor="end" fill="#000" textLength="29.5" lengthAdjust="spacingAndGlyphs">78750</text><rect x="708.9" y="270.2" width="1.3" height="6.500" fill="#111"/><text transform="translate(712.5,278) rotate(-90)" font-size="11.5" text-anchor="end" fill="#000" textLength="29.5" lengthAdjust="spacingAndGlyphs">79000</text><rect x="722.9" y="270.2" width="1.3" height="6.500" fill="#111"/><text transform="translate(726.5,278) rotate(-90)" font-size="11.5" text-anchor="end" fill="#000" textLength="29.5" lengthAdjust="spacingAndGlyphs">79250</text><rect x="736.9" y="270.2" width="1.3" height="6.500" fill="#111"/><text transform="translate(740.5,278) rotate(-90)" font-size="11.5" text-anchor="end" fill="#000" textLength="29.5" lengthAdjust="spacingAndGlyphs">79500</text><rect x="750.9" y="270.2" width="1.3" height="6.500" fill="#111"/><text transform="translate(754.5,278) rotate(-90)" font-size="11.5" text-anchor="end" fill="#000" textLength="29.5" lengthAdjust="spacingAndGlyphs">79750</text><rect x="764.9" y="270.2" width="1.3" height="6.500" fill="#111"/><text transform="translate(768.5,278) rotate(-90)" font-size="11.5" text-anchor="end" fill="#000" textLength="29.5" lengthAdjust="spacingAndGlyphs">80000</text><rect x="778.9" y="270.2" width="1.3" height="6.500" fill="#111"/><text transform="translate(782.5,278) rotate(-90)" font-size="11.5" text-anchor="end" fill="#000" textLength="29.5" lengthAdjust="spacingAndGlyphs">80250</text><rect x="792.9" y="270.2" width="1.3" height="6.500" fill="#111"/><text transform="translate(796.5,278) rotate(-90)" font-size="11.5" text-anchor="end" fill="#000" textLength="29.5" lengthAdjust="spacingAndGlyphs">80500</text><rect x="805.9" y="270.2" width="1.3" height="6.500" fill="#111"/><text transform="translate(809.5,278) rotate(-90)" font-size="11.5" text-anchor="end" fill="#000" textLength="29.5" lengthAdjust="spacingAndGlyphs">80750</text><rect x="819.9" y="270.2" width="1.3" height="6.500" fill="#111"/><text transform="translate(823.5,278) rotate(-90)" font-size="11.5" text-anchor="end" fill="#000" textLength="29.5" lengthAdjust="spacingAndGlyphs">81000</text><rect x="833.9" y="270.2" width="1.3" height="6.500" fill="#111"/><text transform="translate(837.5,278) rotate(-90)" font-size="11.5" text-anchor="end" fill="#000" textLength="29.5" lengthAdjust="spacingAndGlyphs">81250</text><rect x="847.9" y="270.2" width="1.3" height="6.500" fill="#111"/><text transform="translate(851.5,278) rotate(-90)" font-size="11.5" text-anchor="end" fill="#000" textLength="29.5" lengthAdjust="spacingAndGlyphs">81500</text><rect x="861.9" y="270.2" width="1.3" height="6.500" fill="#111"/><text transform="translate(865.5,278) rotate(-90)" font-size="11.5" text-anchor="end" fill="#000" textLength="29.5" lengthAdjust="spacingAndGlyphs">81750</text><rect x="875.9" y="270.2" width="1.3" height="6.500" fill="#111"/><text transform="translate(879.5,278) rotate(-90)" font-size="11.5" text-anchor="end" fill="#000" textLength="29.5" lengthAdjust="spacingAndGlyphs">82000</text><rect x="889.9" y="270.2" width="1.3" height="6.500" fill="#111"/><text transform="translate(893.5,278) rotate(-90)" font-size="11.5" text-anchor="end" fill="#000" textLength="29.5" lengthAdjust="spacingAndGlyphs">82250</text><rect x="903.9" y="270.2" width="1.3" height="6.500" fill="#111"/><text transform="translate(907.5,278) rotate(-90)" font-size="11.5" text-anchor="end" fill="#000" textLength="29.5" lengthAdjust="spacingAndGlyphs">82500</text><rect x="917.9" y="270.2" width="1.3" height="6.500" fill="#111"/><text transform="translate(921.5,278) rotate(-90)" font-size="11.5" text-anchor="end" fill="#000" textLength="29.5" lengthAdjust="spacingAndGlyphs">82750</text><rect x="930.9" y="270.2" width="1.3" height="6.500" fill="#111"/><text transform="translate(934.5,278) rotate(-90)" font-size="11.5" text-anchor="end" fill="#000" textLength="29.5" lengthAdjust="spacingAndGlyphs">83000</text><rect x="944.9" y="270.2" width="1.3" height="6.500" fill="#111"/><text transform="translate(948.5,278) rotate(-90)" font-size="11.5" text-anchor="end" fill="#000" textLength="29.5" lengthAdjust="spacingAndGlyphs">83250</text><rect x="958.9" y="270.2" width="1.3" height="6.500" fill="#111"/><text transform="translate(962.5,278) rotate(-90)" font-size="11.5" text-anchor="end" fill="#000" textLength="29.5" lengthAdjust="spacingAndGlyphs">83500</text><rect x="972.9" y="270.2" width="1.3" height="6.500" fill="#111"/><text transform="translate(976.5,278) rotate(-90)" font-size="11.5" text-anchor="end" fill="#000" textLength="29.5" lengthAdjust="spacingAndGlyphs">83750</text><rect x="986.9" y="270.2" width="1.3" height="6.500" fill="#111"/><text transform="translate(990.5,278) rotate(-90)" font-size="11.5" text-anchor="end" fill="#000" textLength="29.5" lengthAdjust="spacingAndGlyphs">84000</text><rect x="1000.9" y="270.2" width="1.3" height="6.500" fill="#111"/><text transform="translate(1004.5,278) rotate(-90)" font-size="11.5" text-anchor="end" fill="#000" textLength="29.5" lengthAdjust="spacingAndGlyphs">84250</text><rect x="1014.9" y="270.2" width="1.3" height="6.500" fill="#111"/><text transform="translate(1018.5,278) rotate(-90)" font-size="11.5" text-anchor="end" fill="#000" textLength="29.5" lengthAdjust="spacingAndGlyphs">84500</text><rect x="1028.9" y="270.2" width="1.3" height="6.500" fill="#111"/><text transform="translate(1032.5,278) rotate(-90)" font-size="11.5" text-anchor="end" fill="#000" textLength="29.5" lengthAdjust="spacingAndGlyphs">84750</text><rect x="1042.9" y="270.2" width="1.3" height="6.500" fill="#111"/><text transform="translate(1046.5,278) rotate(-90)" font-size="11.5" text-anchor="end" fill="#000" textLength="29.5" lengthAdjust="spacingAndGlyphs">85000</text><rect x="1056.9" y="270.2" width="1.3" height="6.500" fill="#111"/><text transform="translate(1060.5,278) rotate(-90)" font-size="11.5" text-anchor="end" fill="#000" textLength="29.5" lengthAdjust="spacingAndGlyphs">85250</text><rect x="1069.9" y="270.2" width="1.3" height="6.500" fill="#111"/><text transform="translate(1073.5,278) rotate(-90)" font-size="11.5" text-anchor="end" fill="#000" textLength="29.5" lengthAdjust="spacingAndGlyphs">85500</text><rect x="1083.9" y="270.2" width="1.3" height="6.500" fill="#111"/><text transform="translate(1087.5,278) rotate(-90)" font-size="11.5" text-anchor="end" fill="#000" textLength="29.5" lengthAdjust="spacingAndGlyphs">85750</text><rect x="1097.9" y="270.2" width="1.3" height="6.500" fill="#111"/><text transform="translate(1101.5,278) rotate(-90)" font-size="11.5" text-anchor="end" fill="#000" textLength="29.5" lengthAdjust="spacingAndGlyphs">86000</text><rect x="1111.9" y="270.2" width="1.3" height="6.500" fill="#111"/><text transform="translate(1115.5,278) rotate(-90)" font-size="11.5" text-anchor="end" fill="#000" textLength="29.5" lengthAdjust="spacingAndGlyphs">86250</text><rect x="1125.9" y="270.2" width="1.3" height="6.500" fill="#111"/><text transform="translate(1129.5,278) rotate(-90)" font-size="11.5" text-anchor="end" fill="#000" textLength="29.5" lengthAdjust="spacingAndGlyphs">86500</text><rect x="1139.9" y="270.2" width="1.3" height="6.500" fill="#111"/><text transform="translate(1143.5,278) rotate(-90)" font-size="11.5" text-anchor="end" fill="#000" textLength="29.5" lengthAdjust="spacingAndGlyphs">86750</text><rect x="1153.9" y="270.2" width="1.3" height="6.500" fill="#111"/><text transform="translate(1157.5,278) rotate(-90)" font-size="11.5" text-anchor="end" fill="#000" textLength="29.5" lengthAdjust="spacingAndGlyphs">87000</text><rect x="1167.9" y="270.2" width="1.3" height="6.500" fill="#111"/><text transform="translate(1171.5,278) rotate(-90)" font-size="11.5" text-anchor="end" fill="#000" textLength="29.5" lengthAdjust="spacingAndGlyphs">87250</text><rect x="1181.9" y="270.2" width="1.3" height="6.500" fill="#111"/><text transform="translate(1185.5,278) rotate(-90)" font-size="11.5" text-anchor="end" fill="#000" textLength="29.5" lengthAdjust="spacingAndGlyphs">87500</text><rect x="1194.9" y="270.2" width="1.3" height="6.500" fill="#111"/><text transform="translate(1198.5,278) rotate(-90)" font-size="11.5" text-anchor="end" fill="#000" textLength="29.5" lengthAdjust="spacingAndGlyphs">87750</text><rect x="1208.9" y="270.2" width="1.3" height="6.500" fill="#111"/><text transform="translate(1212.5,278) rotate(-90)" font-size="11.5" text-anchor="end" fill="#000" textLength="29.5" lengthAdjust="spacingAndGlyphs">88000</text><path d="M312.8 593.5 L315.0 589.6 L317.3 585.8 L319.5 582.0 L321.7 578.2 L323.9 574.4 L326.1 570.7 L328.3 566.9 L330.6 563.2 L332.8 559.5 L335.0 555.8 L337.2 552.1 L339.4 548.4 L341.7 544.8 L343.9 541.2 L346.1 537.6 L348.3 534.0 L350.5 530.4 L352.8 526.8 L355.0 523.3 L357.2 519.8 L359.4 516.3 L361.6 512.8 L363.9 509.4 L366.1 505.9 L368.3 502.5 L370.5 499.1 L372.7 495.8 L374.9 492.4 L377.2 489.1 L379.4 485.7 L381.6 482.4 L383.8 479.2 L386.0 475.9 L388.3 472.7 L390.5 469.5 L392.7 466.3 L394.9 463.1 L397.1 460.0 L399.4 456.8 L401.6 453.7 L403.8 450.6 L406.0 447.6 L408.2 444.5 L410.5 441.5 L412.7 438.5 L414.9 435.6 L417.1 432.6 L419.3 429.7 L421.5 426.8 L423.8 423.9 L426.0 421.0 L428.2 418.2 L430.4 415.4 L432.6 412.6 L434.9 409.8 L437.1 407.1 L439.3 404.3 L441.5 401.6 L443.7 398.9 L446.0 396.3 L448.2 393.7 L450.4 391.0 L452.6 388.5 L454.8 385.9 L457.1 383.4 L459.3 380.8 L461.5 378.3 L463.7 375.9 L465.9 373.4 L468.1 371.0 L470.4 368.6 L472.6 366.2 L474.8 363.9 L477.0 361.6 L479.2 359.2 L481.5 357.0 L483.7 354.7 L485.9 352.5 L488.1 350.3 L490.3 348.1 L492.6 345.9 L494.8 343.8 L497.0 341.6 L499.2 339.6 L501.4 337.5 L503.7 335.4 L505.9 333.4 L508.1 331.4 L510.3 329.4 L512.5 327.5 L514.7 325.5 L517.0 323.6 L519.2 321.7 L521.4 319.9 L523.6 318.0 L525.8 316.2 L528.1 314.4 L530.3 312.6 L532.5 310.9 L534.7 309.1 L536.9 307.4 L539.2 305.8 L541.4 304.1 L543.6 302.4 L545.8 300.8 L548.0 299.2 L550.3 297.6 L552.5 296.1 L554.7 294.6 L556.9 293.0 L559.1 291.5 L561.3 290.1 L563.6 288.6 L565.8 287.2 L568.0 285.8 L570.2 284.4 L572.4 283.0 L574.7 281.7 L576.9 280.4 L579.1 279.0 L581.3 277.8 L583.5 276.5 L585.8 275.2 L588.0 274.0 L590.2 272.8 L592.4 271.6 L594.6 270.4 L596.9 269.3 L599.1 268.2 L601.3 267.0 L603.5 265.9 L605.7 264.9 L607.9 263.8 L610.2 262.8 L612.4 261.7 L614.6 260.7 L616.8 259.7 L619.0 258.8 L621.3 257.8 L623.5 256.9 L625.7 255.9 L627.9 255.0 L630.1 254.1 L632.4 253.3 L634.6 252.4 L636.8 251.6 L639.0 250.7 L641.2 249.9 L643.4 249.1 L645.7 248.3 L647.9 247.6 L650.1 246.8 L652.3 246.1 L654.5 245.4 L656.8 244.7 L659.0 244.0 L661.2 243.3 L663.4 242.6 L665.6 242.0 L667.9 241.3 L670.1 240.7 L672.3 240.1 L674.5 239.5 L676.7 238.9 L679.0 238.4 L681.2 237.8 L683.4 237.2 L685.6 236.7 L687.8 236.2 L690.0 235.7 L692.3 235.2 L694.5 234.7 L696.7 234.2 L698.9 233.7 L701.1 233.3 L703.4 232.8 L705.6 232.4 L707.8 232.0 L710.0 231.6 L712.2 231.2 L714.5 230.8 L716.7 230.4 L718.9 230.0 L721.1 229.6 L723.3 229.3 L725.6 228.9 L727.8 228.6 L730.0 228.3 L732.2 227.9 L734.4 227.6 L736.6 227.3 L738.9 227.0 L741.1 226.7 L743.3 226.5 L745.5 226.2 L747.7 225.9 L750.0 225.7 L752.2 225.4 L754.4 225.2 L756.6 224.9 L758.8 224.7 L761.1 224.5 L763.3 224.3 L765.5 224.1 L767.7 223.9 L769.9 223.7 L772.2 223.5 L774.4 223.3 L776.6 223.1 L778.8 222.9 L781.0 222.8 L783.2 222.6 L785.5 222.5 L787.7 222.3 L789.9 222.2 L792.1 222.0 L794.3 221.9 L796.6 221.7 L798.8 221.6 L801.0 221.5 L803.2 221.4 L805.4 221.3 L807.7 221.2 L809.9 221.1 L812.1 221.0 L814.3 220.9 L816.5 220.8 L818.8 220.7 L821.0 220.6 L823.2 220.5 L825.4 220.4 L827.6 220.4 L829.8 220.3 L832.1 220.2 L834.3 220.2 L836.5 220.1 L838.7 220.0 L840.9 220.0 L843.2 219.9 L845.4 219.9 L847.6 219.8 L849.8 219.8 L852.0 219.7 L854.3 219.7 L856.5 219.7 L858.7 219.6 L860.9 219.6 L863.1 219.6 L865.4 219.5 L867.6 219.5 L869.8 219.5 L872.0 219.4 L874.2 219.4 L876.4 219.4 L878.7 219.4 L880.9 219.4 L883.1 219.4 L885.3 219.3 L887.5 219.3 L889.8 219.3 L892.0 219.3 L894.2 219.3 L896.4 219.3 L898.6 219.3 L900.9 219.3 L903.1 219.3 L905.3 219.3 L907.5 219.3 L909.7 219.3 L912.0 219.3 L914.2 219.3 L916.4 219.3 L918.6 219.3 L920.8 219.3 L923.0 219.3 L925.3 219.3 L927.5 219.3 L929.7 219.3 L931.9 219.3 L934.1 219.3 L936.4 219.3 L938.6 219.4 L940.8 219.4 L943.0 219.4 L945.2 219.4 L947.5 219.4 L949.7 219.4 L951.9 219.4 L954.1 219.4 L956.3 219.4 L958.6 219.5 L960.8 219.5 L963.0 219.5 L965.2 219.5 L967.4 219.5 L969.6 219.5 L971.9 219.5 L974.1 219.6 L976.3 219.6 L978.5 219.6 L980.7 219.6 L983.0 219.6 L985.2 219.6 L987.4 219.7 L989.6 219.7 L991.8 219.7 L994.1 219.7 L996.3 219.7 L998.5 219.7 L1000.7 219.7 L1002.9 219.8 L1005.2 219.8 L1007.4 219.8 L1009.6 219.8 L1011.8 219.8 L1014.0 219.8 L1016.2 219.9 L1018.5 219.9 L1020.7 219.9 L1022.9 219.9 L1025.1 219.9 L1027.3 219.9 L1029.6 220.0 L1031.8 220.0 L1034.0 220.0 L1036.2 220.0 L1038.4 220.0 L1040.7 220.0 L1042.9 220.0 L1045.1 220.1 L1047.3 220.1 L1049.5 220.1 L1051.8 220.1 L1054.0 220.1 L1056.2 220.1 L1058.4 220.1 L1060.6 220.2 L1062.8 220.2 L1065.1 220.2 L1067.3 220.2 L1069.5 220.2 L1071.7 220.2 L1073.9 220.2 L1076.2 220.2 L1078.4 220.3 L1080.6 220.3 L1082.8 220.3 L1085.0 220.3 L1087.3 220.3 L1089.5 220.3 L1091.7 220.3 L1093.9 220.3 L1096.1 220.4 L1098.4 220.4 L1100.6 220.4 L1102.8 220.4 L1105.0 220.4 L1107.2 220.4 L1109.4 220.4 L1111.7 220.4 L1113.9 220.4 L1116.1 220.4 L1118.3 220.5 L1120.5 220.5 L1122.8 220.5 L1125.0 220.5 L1127.2 220.5 L1129.4 220.5 L1131.6 220.5 L1133.9 220.5 L1136.1 220.5 L1138.3 220.5 L1140.5 220.5 L1142.7 220.5 L1145.0 220.6 L1147.2 220.6 L1149.4 220.6 L1151.6 220.6 L1153.8 220.6 L1156.0 220.6 L1158.3 220.6 L1160.5 220.6 L1162.7 220.6 L1164.9 220.6 L1167.1 220.6 L1169.4 220.6 L1171.6 220.6 L1173.8 220.6 L1176.0 220.6 L1178.2 220.6 L1180.5 220.7 L1182.7 220.7 L1184.9 220.7 L1187.1 220.7 L1189.3 220.7 L1191.6 220.7 L1193.8 220.7 L1196.0 220.7 L1198.2 220.7 L1200.4 220.7" fill="none" stroke="#ffb266" stroke-width="1.3"/><path d="M312.8 596.2 L315.0 592.4 L317.3 588.6 L319.5 584.8 L321.7 581.0 L323.9 577.3 L326.1 573.6 L328.3 569.8 L330.6 566.1 L332.8 562.5 L335.0 558.8 L337.2 555.1 L339.4 551.5 L341.7 547.9 L343.9 544.3 L346.1 540.7 L348.3 537.2 L350.5 533.6 L352.8 530.1 L355.0 526.6 L357.2 523.1 L359.4 519.7 L361.6 516.2 L363.9 512.8 L366.1 509.4 L368.3 506.0 L370.5 502.6 L372.7 499.3 L374.9 496.0 L377.2 492.6 L379.4 489.4 L381.6 486.1 L383.8 482.8 L386.0 479.6 L388.3 476.4 L390.5 473.2 L392.7 470.0 L394.9 466.9 L397.1 463.8 L399.4 460.7 L401.6 457.6 L403.8 454.5 L406.0 451.5 L408.2 448.5 L410.5 445.5 L412.7 442.5 L414.9 439.5 L417.1 436.6 L419.3 433.7 L421.5 430.8 L423.8 427.9 L426.0 425.1 L428.2 422.3 L430.4 419.5 L432.6 416.7 L434.9 413.9 L437.1 411.2 L439.3 408.5 L441.5 405.8 L443.7 403.1 L446.0 400.5 L448.2 397.9 L450.4 395.3 L452.6 392.7 L454.8 390.1 L457.1 387.6 L459.3 385.1 L461.5 382.6 L463.7 380.1 L465.9 377.7 L468.1 375.3 L470.4 372.9 L472.6 370.5 L474.8 368.2 L477.0 365.8 L479.2 363.5 L481.5 361.3 L483.7 359.0 L485.9 356.8 L488.1 354.6 L490.3 352.4 L492.6 350.2 L494.8 348.1 L497.0 345.9 L499.2 343.8 L501.4 341.8 L503.7 339.7 L505.9 337.7 L508.1 335.7 L510.3 333.7 L512.5 331.7 L514.7 329.8 L517.0 327.9 L519.2 326.0 L521.4 324.1 L523.6 322.2 L525.8 320.4 L528.1 318.6 L530.3 316.8 L532.5 315.1 L534.7 313.3 L536.9 311.6 L539.2 309.9 L541.4 308.2 L543.6 306.6 L545.8 304.9 L548.0 303.3 L550.3 301.7 L552.5 300.1 L554.7 298.6 L556.9 297.0 L559.1 295.5 L561.3 294.0 L563.6 292.6 L565.8 291.1 L568.0 289.7 L570.2 288.3 L572.4 286.9 L574.7 285.5 L576.9 284.2 L579.1 282.8 L581.3 281.5 L583.5 280.2 L585.8 279.0 L588.0 277.7 L590.2 276.5 L592.4 275.3 L594.6 274.1 L596.9 272.9 L599.1 271.7 L601.3 270.6 L603.5 269.5 L605.7 268.4 L607.9 267.3 L610.2 266.2 L612.4 265.1 L614.6 264.1 L616.8 263.1 L619.0 262.1 L621.3 261.1 L623.5 260.1 L625.7 259.2 L627.9 258.2 L630.1 257.3 L632.4 256.4 L634.6 255.5 L636.8 254.7 L639.0 253.8 L641.2 253.0 L643.4 252.1 L645.7 251.3 L647.9 250.5 L650.1 249.7 L652.3 249.0 L654.5 248.2 L656.8 247.5 L659.0 246.8 L661.2 246.0 L663.4 245.3 L665.6 244.7 L667.9 244.0 L670.1 243.3 L672.3 242.7 L674.5 242.1 L676.7 241.4 L679.0 240.8 L681.2 240.3 L683.4 239.7 L685.6 239.1 L687.8 238.5 L690.0 238.0 L692.3 237.5 L694.5 236.9 L696.7 236.4 L698.9 235.9 L701.1 235.5 L703.4 235.0 L705.6 234.5 L707.8 234.1 L710.0 233.6 L712.2 233.2 L714.5 232.7 L716.7 232.3 L718.9 231.9 L721.1 231.5 L723.3 231.1 L725.6 230.8 L727.8 230.4 L730.0 230.0 L732.2 229.7 L734.4 229.3 L736.6 229.0 L738.9 228.7 L741.1 228.4 L743.3 228.1 L745.5 227.8 L747.7 227.5 L750.0 227.2 L752.2 226.9 L754.4 226.6 L756.6 226.4 L758.8 226.1 L761.1 225.9 L763.3 225.6 L765.5 225.4 L767.7 225.2 L769.9 224.9 L772.2 224.7 L774.4 224.5 L776.6 224.3 L778.8 224.1 L781.0 223.9 L783.2 223.7 L785.5 223.6 L787.7 223.4 L789.9 223.2 L792.1 223.0 L794.3 222.9 L796.6 222.7 L798.8 222.6 L801.0 222.4 L803.2 222.3 L805.4 222.2 L807.7 222.0 L809.9 221.9 L812.1 221.8 L814.3 221.7 L816.5 221.6 L818.8 221.5 L821.0 221.4 L823.2 221.3 L825.4 221.2 L827.6 221.1 L829.8 221.0 L832.1 220.9 L834.3 220.8 L836.5 220.7 L838.7 220.6 L840.9 220.6 L843.2 220.5 L845.4 220.4 L847.6 220.4 L849.8 220.3 L852.0 220.3 L854.3 220.2 L856.5 220.1 L858.7 220.1 L860.9 220.0 L863.1 220.0 L865.4 220.0 L867.6 219.9 L869.8 219.9 L872.0 219.8 L874.2 219.8 L876.4 219.8 L878.7 219.7 L880.9 219.7 L883.1 219.7 L885.3 219.7 L887.5 219.6 L889.8 219.6 L892.0 219.6 L894.2 219.6 L896.4 219.6 L898.6 219.5 L900.9 219.5 L903.1 219.5 L905.3 219.5 L907.5 219.5 L909.7 219.5 L912.0 219.5 L914.2 219.5 L916.4 219.5 L918.6 219.5 L920.8 219.5 L923.0 219.5 L925.3 219.5 L927.5 219.5 L929.7 219.5 L931.9 219.5 L934.1 219.5 L936.4 219.5 L938.6 219.5 L940.8 219.5 L943.0 219.5 L945.2 219.5 L947.5 219.5 L949.7 219.5 L951.9 219.5 L954.1 219.5 L956.3 219.5 L958.6 219.5 L960.8 219.5 L963.0 219.5 L965.2 219.5 L967.4 219.6 L969.6 219.6 L971.9 219.6 L974.1 219.6 L976.3 219.6 L978.5 219.6 L980.7 219.6 L983.0 219.6 L985.2 219.6 L987.4 219.7 L989.6 219.7 L991.8 219.7 L994.1 219.7 L996.3 219.7 L998.5 219.7 L1000.7 219.7 L1002.9 219.8 L1005.2 219.8 L1007.4 219.8 L1009.6 219.8 L1011.8 219.8 L1014.0 219.8 L1016.2 219.8 L1018.5 219.8 L1020.7 219.9 L1022.9 219.9 L1025.1 219.9 L1027.3 219.9 L1029.6 219.9 L1031.8 219.9 L1034.0 219.9 L1036.2 220.0 L1038.4 220.0 L1040.7 220.0 L1042.9 220.0 L1045.1 220.0 L1047.3 220.0 L1049.5 220.0 L1051.8 220.1 L1054.0 220.1 L1056.2 220.1 L1058.4 220.1 L1060.6 220.1 L1062.8 220.1 L1065.1 220.1 L1067.3 220.1 L1069.5 220.2 L1071.7 220.2 L1073.9 220.2 L1076.2 220.2 L1078.4 220.2 L1080.6 220.2 L1082.8 220.2 L1085.0 220.2 L1087.3 220.3 L1089.5 220.3 L1091.7 220.3 L1093.9 220.3 L1096.1 220.3 L1098.4 220.3 L1100.6 220.3 L1102.8 220.3 L1105.0 220.3 L1107.2 220.4 L1109.4 220.4 L1111.7 220.4 L1113.9 220.4 L1116.1 220.4 L1118.3 220.4 L1120.5 220.4 L1122.8 220.4 L1125.0 220.4 L1127.2 220.4 L1129.4 220.5 L1131.6 220.5 L1133.9 220.5 L1136.1 220.5 L1138.3 220.5 L1140.5 220.5 L1142.7 220.5 L1145.0 220.5 L1147.2 220.5 L1149.4 220.5 L1151.6 220.5 L1153.8 220.5 L1156.0 220.5 L1158.3 220.6 L1160.5 220.6 L1162.7 220.6 L1164.9 220.6 L1167.1 220.6 L1169.4 220.6 L1171.6 220.6 L1173.8 220.6 L1176.0 220.6 L1178.2 220.6 L1180.5 220.6 L1182.7 220.6 L1184.9 220.6 L1187.1 220.6 L1189.3 220.6 L1191.6 220.6 L1193.8 220.7 L1196.0 220.7 L1198.2 220.7 L1200.4 220.7" fill="none" stroke="#b5602a" stroke-width="1.2"/><path d="M312.8 598.9 L315.0 595.1 L317.3 591.3 L319.5 587.6 L321.7 583.8 L323.9 580.1 L326.1 576.4 L328.3 572.7 L330.6 569.1 L332.8 565.4 L335.0 561.8 L337.2 558.2 L339.4 554.6 L341.7 551.0 L343.9 547.4 L346.1 543.9 L348.3 540.4 L350.5 536.8 L352.8 533.3 L355.0 529.9 L357.2 526.4 L359.4 523.0 L361.6 519.6 L363.9 516.2 L366.1 512.8 L368.3 509.4 L370.5 506.1 L372.7 502.7 L374.9 499.4 L377.2 496.2 L379.4 492.9 L381.6 489.7 L383.8 486.4 L386.0 483.2 L388.3 480.0 L390.5 476.9 L392.7 473.7 L394.9 470.6 L397.1 467.5 L399.4 464.4 L401.6 461.3 L403.8 458.3 L406.0 455.3 L408.2 452.3 L410.5 449.3 L412.7 446.4 L414.9 443.4 L417.1 440.5 L419.3 437.6 L421.5 434.7 L423.8 431.9 L426.0 429.1 L428.2 426.2 L430.4 423.5 L432.6 420.7 L434.9 418.0 L437.1 415.2 L439.3 412.5 L441.5 409.9 L443.7 407.2 L446.0 404.6 L448.2 402.0 L450.4 399.4 L452.6 396.8 L454.8 394.3 L457.1 391.7 L459.3 389.2 L461.5 386.8 L463.7 384.3 L465.9 381.9 L468.1 379.5 L470.4 377.1 L472.6 374.7 L474.8 372.4 L477.0 370.0 L479.2 367.7 L481.5 365.4 L483.7 363.2 L485.9 361.0 L488.1 358.7 L490.3 356.6 L492.6 354.4 L494.8 352.2 L497.0 350.1 L499.2 348.0 L501.4 345.9 L503.7 343.9 L505.9 341.9 L508.1 339.8 L510.3 337.8 L512.5 335.9 L514.7 333.9 L517.0 332.0 L519.2 330.1 L521.4 328.2 L523.6 326.4 L525.8 324.5 L528.1 322.7 L530.3 320.9 L532.5 319.1 L534.7 317.4 L536.9 315.6 L539.2 313.9 L541.4 312.2 L543.6 310.6 L545.8 308.9 L548.0 307.3 L550.3 305.7 L552.5 304.1 L554.7 302.5 L556.9 301.0 L559.1 299.4 L561.3 297.9 L563.6 296.4 L565.8 295.0 L568.0 293.5 L570.2 292.1 L572.4 290.7 L574.7 289.3 L576.9 287.9 L579.1 286.6 L581.3 285.2 L583.5 283.9 L585.8 282.6 L588.0 281.4 L590.2 280.1 L592.4 278.9 L594.6 277.6 L596.9 276.4 L599.1 275.2 L601.3 274.1 L603.5 272.9 L605.7 271.8 L607.9 270.7 L610.2 269.6 L612.4 268.5 L614.6 267.4 L616.8 266.4 L619.0 265.4 L621.3 264.4 L623.5 263.4 L625.7 262.4 L627.9 261.4 L630.1 260.5 L632.4 259.5 L634.6 258.6 L636.8 257.7 L639.0 256.8 L641.2 256.0 L643.4 255.1 L645.7 254.3 L647.9 253.4 L650.1 252.6 L652.3 251.8 L654.5 251.0 L656.8 250.3 L659.0 249.5 L661.2 248.8 L663.4 248.1 L665.6 247.3 L667.9 246.6 L670.1 246.0 L672.3 245.3 L674.5 244.6 L676.7 244.0 L679.0 243.3 L681.2 242.7 L683.4 242.1 L685.6 241.5 L687.8 240.9 L690.0 240.3 L692.3 239.8 L694.5 239.2 L696.7 238.7 L698.9 238.2 L701.1 237.6 L703.4 237.1 L705.6 236.6 L707.8 236.2 L710.0 235.7 L712.2 235.2 L714.5 234.8 L716.7 234.3 L718.9 233.9 L721.1 233.5 L723.3 233.0 L725.6 232.6 L727.8 232.2 L730.0 231.8 L732.2 231.5 L734.4 231.1 L736.6 230.7 L738.9 230.4 L741.1 230.0 L743.3 229.7 L745.5 229.4 L747.7 229.1 L750.0 228.7 L752.2 228.4 L754.4 228.1 L756.6 227.9 L758.8 227.6 L761.1 227.3 L763.3 227.0 L765.5 226.8 L767.7 226.5 L769.9 226.3 L772.2 226.0 L774.4 225.8 L776.6 225.6 L778.8 225.3 L781.0 225.1 L783.2 224.9 L785.5 224.7 L787.7 224.5 L789.9 224.3 L792.1 224.1 L794.3 224.0 L796.6 223.8 L798.8 223.6 L801.0 223.4 L803.2 223.3 L805.4 223.1 L807.7 223.0 L809.9 222.8 L812.1 222.7 L814.3 222.6 L816.5 222.4 L818.8 222.3 L821.0 222.2 L823.2 222.1 L825.4 221.9 L827.6 221.8 L829.8 221.7 L832.1 221.6 L834.3 221.5 L836.5 221.4 L838.7 221.3 L840.9 221.2 L843.2 221.1 L845.4 221.1 L847.6 221.0 L849.8 220.9 L852.0 220.8 L854.3 220.8 L856.5 220.7 L858.7 220.6 L860.9 220.6 L863.1 220.5 L865.4 220.4 L867.6 220.4 L869.8 220.3 L872.0 220.3 L874.2 220.2 L876.4 220.2 L878.7 220.2 L880.9 220.1 L883.1 220.1 L885.3 220.0 L887.5 220.0 L889.8 220.0 L892.0 219.9 L894.2 219.9 L896.4 219.9 L898.6 219.8 L900.9 219.8 L903.1 219.8 L905.3 219.8 L907.5 219.8 L909.7 219.7 L912.0 219.7 L914.2 219.7 L916.4 219.7 L918.6 219.7 L920.8 219.7 L923.0 219.7 L925.3 219.6 L927.5 219.6 L929.7 219.6 L931.9 219.6 L934.1 219.6 L936.4 219.6 L938.6 219.6 L940.8 219.6 L943.0 219.6 L945.2 219.6 L947.5 219.6 L949.7 219.6 L951.9 219.6 L954.1 219.6 L956.3 219.6 L958.6 219.6 L960.8 219.6 L963.0 219.6 L965.2 219.6 L967.4 219.6 L969.6 219.6 L971.9 219.6 L974.1 219.6 L976.3 219.7 L978.5 219.7 L980.7 219.7 L983.0 219.7 L985.2 219.7 L987.4 219.7 L989.6 219.7 L991.8 219.7 L994.1 219.7 L996.3 219.7 L998.5 219.7 L1000.7 219.8 L1002.9 219.8 L1005.2 219.8 L1007.4 219.8 L1009.6 219.8 L1011.8 219.8 L1014.0 219.8 L1016.2 219.8 L1018.5 219.8 L1020.7 219.9 L1022.9 219.9 L1025.1 219.9 L1027.3 219.9 L1029.6 219.9 L1031.8 219.9 L1034.0 219.9 L1036.2 219.9 L1038.4 220.0 L1040.7 220.0 L1042.9 220.0 L1045.1 220.0 L1047.3 220.0 L1049.5 220.0 L1051.8 220.0 L1054.0 220.0 L1056.2 220.1 L1058.4 220.1 L1060.6 220.1 L1062.8 220.1 L1065.1 220.1 L1067.3 220.1 L1069.5 220.1 L1071.7 220.1 L1073.9 220.1 L1076.2 220.2 L1078.4 220.2 L1080.6 220.2 L1082.8 220.2 L1085.0 220.2 L1087.3 220.2 L1089.5 220.2 L1091.7 220.2 L1093.9 220.2 L1096.1 220.3 L1098.4 220.3 L1100.6 220.3 L1102.8 220.3 L1105.0 220.3 L1107.2 220.3 L1109.4 220.3 L1111.7 220.3 L1113.9 220.3 L1116.1 220.4 L1118.3 220.4 L1120.5 220.4 L1122.8 220.4 L1125.0 220.4 L1127.2 220.4 L1129.4 220.4 L1131.6 220.4 L1133.9 220.4 L1136.1 220.4 L1138.3 220.4 L1140.5 220.5 L1142.7 220.5 L1145.0 220.5 L1147.2 220.5 L1149.4 220.5 L1151.6 220.5 L1153.8 220.5 L1156.0 220.5 L1158.3 220.5 L1160.5 220.5 L1162.7 220.5 L1164.9 220.5 L1167.1 220.5 L1169.4 220.6 L1171.6 220.6 L1173.8 220.6 L1176.0 220.6 L1178.2 220.6 L1180.5 220.6 L1182.7 220.6 L1184.9 220.6 L1187.1 220.6 L1189.3 220.6 L1191.6 220.6 L1193.8 220.6 L1196.0 220.6 L1198.2 220.6 L1200.4 220.6" fill="none" stroke="#5c2e14" stroke-width="1.2"/><path d="M312.8 556.8 L486.8 187.1 L514.6 178.7 L542.4 170.3 L570.2 170.3 L653.6 220.9 L1200.4 220.9" fill="none" stroke="#2e1408" stroke-width="2.2" stroke-linejoin="round"/><circle cx="708.5" cy="231.8" r="2.600" fill="#ffb266"/><circle cx="708.5" cy="233.9" r="2.600" fill="#b5602a"/><circle cx="708.5" cy="236.0" r="2.600" fill="#5c2e14"/><circle cx="708.5" cy="220.9" r="2.600" fill="#2e1408"/><text x="384" y="102.5" font-size="12.5" fill="#111" textLength="67" lengthAdjust="spacingAndGlyphs">Портфель:</text><text x="457" y="102.5" font-size="12.5" fill="#111" textLength="41" lengthAdjust="spacingAndGlyphs">Ось X:</text><text x="505" y="102.5" font-size="12.5" fill="#111" textLength="33" lengthAdjust="spacingAndGlyphs">78989</text><text x="544" y="102.5" font-size="12.5" fill="#111" textLength="40.6" lengthAdjust="spacingAndGlyphs">Ось Y:</text><text x="595.3" y="102.5" font-size="12.5" fill="#111" textLength="57.5" lengthAdjust="spacingAndGlyphs">(Текущий</text><text x="656.3" y="102.5" font-size="12.5" fill="#111" textLength="49.7" lengthAdjust="spacingAndGlyphs">1980,65)</text><text x="716" y="102.5" font-size="12.5" fill="#111" textLength="42" lengthAdjust="spacingAndGlyphs">(+1 дн.</text><text x="763.6" y="102.5" font-size="12.5" fill="#111" textLength="50.4" lengthAdjust="spacingAndGlyphs">2104,43)</text><text x="824.3" y="102.5" font-size="12.5" fill="#111" textLength="40.2" lengthAdjust="spacingAndGlyphs">(+2 дн.</text><text x="871" y="102.5" font-size="12.5" fill="#111" textLength="49.7" lengthAdjust="spacingAndGlyphs">2226,89)</text><text x="931.5" y="102.5" font-size="12.5" fill="#111" textLength="20" lengthAdjust="spacingAndGlyphs">(На</text><text x="956" y="102.5" font-size="12.5" fill="#111" textLength="72" lengthAdjust="spacingAndGlyphs">экспирацию</text><text x="1034" y="102.5" font-size="12.5" fill="#111" textLength="31.8" lengthAdjust="spacingAndGlyphs">2878)</text></svg>
<div style="left:0px;top:668px;width:1257px;height:2px;background:#fff;"></div>
<div style="left:0px;top:670px;width:1257px;height:1px;background:#9a9ca3;"></div>
<div style="left:0px;top:671px;width:1257px;height:1px;background:#e9d2b8;"></div>
<div style="left:0px;top:672px;width:1257px;height:4px;background:#cd853f;"></div>
<div style="left:0px;top:676px;width:1257px;height:366px;background:#f5f5dc;"></div>
<div style="left:0px;top:676px;width:1257px;height:1px;background:#f0dfc8;"></div>
<div style="left:1px;top:683px;width:1255px;height:360px;border:1px solid #d5dfe5;border-bottom:none;box-sizing:border-box;box-shadow:inset 1px 1px 0 #fff;"></div>
<div style="left:6px;top:677px;width:55px;height:13px;background:#f5f5dc;"></div>
<span class="t" style="left:8.00px;top:676.00px;height:15px;line-height:15px;font-size:11px;color:#000;letter-spacing:-0.237px;">Портфель</span>
<div style="left:5px;top:698px;width:91px;height:20px;background:#fff;border:1px solid #e3e9ef;border-top-color:#abadb3;box-sizing:border-box;"></div>
<span class="t" style="left:8.00px;top:701.00px;height:15px;line-height:15px;font-size:11px;color:#000;letter-spacing:-0.129px;">Si HH 2</span>
<svg style="left:84px;top:707px" width="8" height="4"><path d="M0 0h8l-4 4z" fill="#000"/></svg>
<div style="left:104px;top:697px;width:53px;height:21px;border:1px solid #707070;border-radius:3px;box-sizing:border-box;background:linear-gradient(#f3f3f3 0,#ececec 48%,#dedede 52%,#d0d0d0 100%);box-shadow:inset 0 0 0 1px rgba(255,255,255,.75);"></div>
<span class="t" style="left:111.00px;top:700.50px;height:15px;line-height:15px;font-size:11px;color:#000;letter-spacing:0.090px;">Импорт</span>
<div style="left:165px;top:697px;width:55px;height:21px;border:1px solid #707070;border-radius:3px;box-sizing:border-box;background:linear-gradient(#f3f3f3 0,#ececec 48%,#dedede 52%,#d0d0d0 100%);box-shadow:inset 0 0 0 1px rgba(255,255,255,.75);"></div>
<span class="t" style="left:171.50px;top:700.50px;height:15px;line-height:15px;font-size:11px;color:#000;letter-spacing:0.000px;">Удалить</span>
<div style="left:228px;top:697px;width:70px;height:21px;border:1px solid #707070;border-radius:3px;box-sizing:border-box;background:linear-gradient(#f3f3f3 0,#ececec 48%,#dedede 52%,#d0d0d0 100%);box-shadow:inset 0 0 0 1px rgba(255,255,255,.75);"></div>
<span class="t" style="left:236.50px;top:700.50px;height:15px;line-height:15px;font-size:11px;color:#000;letter-spacing:-0.185px;">Сохранить</span>
<div style="left:313px;top:702px;width:13px;height:13px;border:1px solid #b8b8b0;box-sizing:border-box;background:linear-gradient(135deg,#cfd3d6 0,#eef0f1 55%,#fdfdfd 100%);box-shadow:inset 0 0 0 1px #f4f4f4;"></div>
<span class="t" style="left:332.00px;top:701.50px;height:15px;line-height:15px;font-size:11px;color:#b7b78f;letter-spacing:-0.444px;">DH</span>
<div style="left:361px;top:698px;width:32px;height:20px;background:#f0f0ea;border:1px solid #abadb3;box-sizing:border-box;"></div>
<span class="t" style="left:364.00px;top:701.00px;height:15px;line-height:15px;font-size:11px;color:#000;">0</span>
<div style="left:378px;top:700px;width:13px;height:8px;border:1px solid #b5b5b5;box-sizing:border-box;background:linear-gradient(#f8f8f8,#dcdcdc);"></div>
<div style="left:378px;top:708px;width:13px;height:8px;border:1px solid #b5b5b5;box-sizing:border-box;background:linear-gradient(#f8f8f8,#dcdcdc);"></div>
<svg style="left:382px;top:702px" width="5" height="3"><path d="M0 3h5l-2.500-3z" fill="#4a5fa0"/></svg>
<svg style="left:382px;top:711px" width="5" height="3"><path d="M0 0h5l-2.500 3z" fill="#4a5fa0"/></svg>
<div style="left:400px;top:698px;width:32px;height:20px;background:#f0f0ea;border:1px solid #abadb3;box-sizing:border-box;"></div>
<span class="t" style="left:403.00px;top:701.00px;height:15px;line-height:15px;font-size:11px;color:#000;">1</span>
<div style="left:417px;top:700px;width:13px;height:8px;border:1px solid #b5b5b5;box-sizing:border-box;background:linear-gradient(#f8f8f8,#dcdcdc);"></div>
<div style="left:417px;top:708px;width:13px;height:8px;border:1px solid #b5b5b5;box-sizing:border-box;background:linear-gradient(#f8f8f8,#dcdcdc);"></div>
<svg style="left:421px;top:702px" width="5" height="3"><path d="M0 3h5l-2.500-3z" fill="#4a5fa0"/></svg>
<svg style="left:421px;top:711px" width="5" height="3"><path d="M0 0h5l-2.500 3z" fill="#4a5fa0"/></svg>
<div style="left:467px;top:701px;width:13px;height:13px;border:1px solid #8e8f8f;box-sizing:border-box;background:linear-gradient(135deg,#cfd3d6 0,#eef0f1 55%,#fdfdfd 100%);box-shadow:inset 0 0 0 1px #f4f4f4;"></div>
<span class="t" style="left:485.00px;top:700.50px;height:15px;line-height:15px;font-size:11px;color:#000;">M</span>
<span class="t" style="left:561.00px;top:701.00px;height:15px;line-height:15px;font-size:11px;color:#000;">D</span>
<div style="left:580px;top:698px;width:30px;height:20px;background:#f7f7e8;border:1px solid #e3e9ef;border-top-color:#abadb3;box-sizing:border-box;"></div>
<span class="t" style="left:591.94px;top:700.20px;height:15px;line-height:15px;font-size:11px;color:#000;">0</span>
<span class="t" style="left:620.00px;top:701.00px;height:15px;line-height:15px;font-size:11px;color:#000;">V1</span>
<div style="left:643px;top:698px;width:30px;height:20px;background:#f7f7e8;border:1px solid #e3e9ef;border-top-color:#abadb3;box-sizing:border-box;"></div>
<span class="t" style="left:654.94px;top:700.20px;height:15px;line-height:15px;font-size:11px;color:#000;">0</span>
<span class="t" style="left:683.00px;top:701.00px;height:15px;line-height:15px;font-size:11px;color:#000;">V2</span>
<div style="left:706px;top:699px;width:32px;height:19px;background:#f0f0e2;border:1px solid #b9bdc4;border-top-color:#abadb3;box-sizing:border-box;"></div>
<span class="t" style="left:718.94px;top:700.70px;height:15px;line-height:15px;font-size:11px;color:#8a8a8a;">0</span>
<span class="t" style="left:772.00px;top:701.00px;height:15px;line-height:15px;font-size:11px;color:#000;">P1</span>
<div style="left:789px;top:698px;width:54px;height:20px;background:#f7f7e8;border:1px solid #e3e9ef;border-top-color:#abadb3;box-sizing:border-box;"></div>
<span class="t" style="left:812.94px;top:700.20px;height:15px;line-height:15px;font-size:11px;color:#000;">0</span>
<span class="t" style="left:853.00px;top:701.00px;height:15px;line-height:15px;font-size:11px;color:#000;letter-spacing:-0.127px;">SiZ0 79854</span>
<span class="t" style="left:924.00px;top:702.00px;height:15px;line-height:15px;font-size:11px;color:#000;">P2</span>
<div style="left:950px;top:699px;width:57px;height:20px;background:#f0f0e2;border:1px solid #b9bdc4;border-top-color:#abadb3;box-sizing:border-box;"></div>
<span class="t" style="left:975.44px;top:701.20px;height:15px;line-height:15px;font-size:11px;color:#8a8a8a;">0</span>
<div style="left:1088px;top:696px;width:93px;height:21px;border:1px solid #707070;border-radius:3px;box-sizing:border-box;background:linear-gradient(#f3f3f3 0,#ececec 48%,#dedede 52%,#d0d0d0 100%);box-shadow:inset 0 0 0 1px rgba(255,255,255,.75);"></div>
<span class="t" style="left:1097.50px;top:699.50px;height:15px;line-height:15px;font-size:11px;color:#000;letter-spacing:-0.027px;">Рассчитать ГО</span>
<div style="left:1228px;top:696px;width:22px;height:21px;border:1px solid #707070;border-radius:3px;box-sizing:border-box;background:linear-gradient(#f3f3f3 0,#ececec 48%,#dedede 52%,#d0d0d0 100%);box-shadow:inset 0 0 0 1px rgba(255,255,255,.75);"></div>
<span class="t" style="left:1235.94px;top:700.00px;height:15px;line-height:15px;font-size:11px;color:#000;">_</span>
<div style="left:5px;top:725px;width:1246px;height:317px;border:1px solid #000;border-bottom:none;box-sizing:border-box;border-width:2px 1px 0 2px;"></div>
<div style="left:7px;top:727px;width:1243px;height:30px;background:#cd853f;"></div>
<div style="left:7px;top:727px;width:1243px;height:1px;background:#f6eadc;"></div>
<div style="left:7px;top:727px;width:1px;height:29px;background:#f6eadc;"></div>
<span class="t" style="left:14.01px;top:735.50px;height:15px;line-height:15px;font-size:11px;color:#000;">Расчет</span>
<div style="left:57px;top:728px;width:1px;height:28px;background:#f3e4d3;"></div>
<div style="left:56px;top:728px;width:1px;height:28px;background:#a96a2c;"></div>
<span class="t" style="left:124.98px;top:735.50px;height:15px;line-height:15px;font-size:11px;color:#000;">Код бумаги</span>
<div style="left:251px;top:728px;width:1px;height:28px;background:#f3e4d3;"></div>
<div style="left:250px;top:728px;width:1px;height:28px;background:#a96a2c;"></div>
<span class="t" style="left:275.83px;top:729.00px;height:15px;line-height:15px;font-size:11px;color:#000;">Тип</span>
<span class="t" style="left:263.58px;top:742.00px;height:15px;line-height:15px;font-size:11px;color:#000;">опциона</span>
<div style="left:320px;top:728px;width:1px;height:28px;background:#f3e4d3;"></div>
<div style="left:319px;top:728px;width:1px;height:28px;background:#a96a2c;"></div>
<span class="t" style="left:351.32px;top:729.00px;height:15px;line-height:15px;font-size:11px;color:#000;">Дата</span>
<span class="t" style="left:335.96px;top:742.00px;height:15px;line-height:15px;font-size:11px;color:#000;">погашения</span>
<div style="left:408px;top:728px;width:1px;height:28px;background:#f3e4d3;"></div>
<div style="left:407px;top:728px;width:1px;height:28px;background:#a96a2c;"></div>
<span class="t" style="left:437.31px;top:729.00px;height:15px;line-height:15px;font-size:11px;color:#000;">Дней до</span>
<span class="t" style="left:430.46px;top:742.00px;height:15px;line-height:15px;font-size:11px;color:#000;">погашения</span>
<div style="left:509px;top:728px;width:1px;height:28px;background:#f3e4d3;"></div>
<div style="left:508px;top:728px;width:1px;height:28px;background:#a96a2c;"></div>
<span class="t" style="left:514.96px;top:735.50px;height:15px;line-height:15px;font-size:11px;color:#000;">Количество</span>
<div style="left:581px;top:728px;width:1px;height:28px;background:#f3e4d3;"></div>
<div style="left:580px;top:728px;width:1px;height:28px;background:#a96a2c;"></div>
<span class="t" style="left:607.78px;top:729.00px;height:15px;line-height:15px;font-size:11px;color:#000;">Цена</span>
<span class="t" style="left:597.55px;top:742.00px;height:15px;line-height:15px;font-size:11px;color:#000;">открытия</span>
<div style="left:662px;top:728px;width:1px;height:28px;background:#f3e4d3;"></div>
<div style="left:661px;top:728px;width:1px;height:28px;background:#a96a2c;"></div>
<span class="t" style="left:686.35px;top:729.00px;height:15px;line-height:15px;font-size:11px;color:#000;">Волатильность</span>
<span class="t" style="left:701.55px;top:742.00px;height:15px;line-height:15px;font-size:11px;color:#000;">открытия</span>
<div style="left:789px;top:728px;width:1px;height:28px;background:#f3e4d3;"></div>
<div style="left:788px;top:728px;width:1px;height:28px;background:#a96a2c;"></div>
<span class="t" style="left:803.06px;top:729.00px;height:15px;line-height:15px;font-size:11px;color:#000;">Теоретическая</span>
<span class="t" style="left:828.76px;top:742.00px;height:15px;line-height:15px;font-size:11px;color:#000;">цена</span>
<div style="left:894px;top:728px;width:1px;height:28px;background:#f3e4d3;"></div>
<div style="left:893px;top:728px;width:1px;height:28px;background:#a96a2c;"></div>
<span class="t" style="left:899.31px;top:735.50px;height:15px;line-height:15px;font-size:11px;color:#000;">Профит</span>
<div style="left:946px;top:728px;width:1px;height:28px;background:#f3e4d3;"></div>
<div style="left:945px;top:728px;width:1px;height:28px;background:#a96a2c;"></div>
<span class="t" style="left:951.85px;top:735.50px;height:15px;line-height:15px;font-size:11px;color:#000;">Волатильность</span>
<div style="left:1036px;top:728px;width:1px;height:28px;background:#f3e4d3;"></div>
<div style="left:1035px;top:728px;width:1px;height:28px;background:#a96a2c;"></div>
<span class="t" style="left:1043.24px;top:735.50px;height:15px;line-height:15px;font-size:11px;color:#000;">Дельта</span>
<div style="left:1087px;top:728px;width:1px;height:28px;background:#f3e4d3;"></div>
<div style="left:1086px;top:728px;width:1px;height:28px;background:#a96a2c;"></div>
<span class="t" style="left:1098.15px;top:735.50px;height:15px;line-height:15px;font-size:11px;color:#000;">Гамма</span>
<div style="left:1143px;top:728px;width:1px;height:28px;background:#f3e4d3;"></div>
<div style="left:1142px;top:728px;width:1px;height:28px;background:#a96a2c;"></div>
<span class="t" style="left:1152.83px;top:735.50px;height:15px;line-height:15px;font-size:11px;color:#000;">Вега</span>
<div style="left:1187px;top:728px;width:1px;height:28px;background:#f3e4d3;"></div>
<div style="left:1186px;top:728px;width:1px;height:28px;background:#a96a2c;"></div>
<span class="t" style="left:1194.06px;top:735.50px;height:15px;line-height:15px;font-size:11px;color:#000;">Тета</span>
<div style="left:1225px;top:728px;width:1px;height:28px;background:#f3e4d3;"></div>
<div style="left:1224px;top:728px;width:1px;height:28px;background:#a96a2c;"></div>
<span class="t" style="left:1233.33px;top:735.50px;height:15px;line-height:15px;font-size:11px;color:#000;">X</span>
<div style="left:7px;top:778px;width:1243px;height:1px;background:#000;"></div>
<div style="left:25px;top:761px;width:13px;height:13px;border:1px solid #8e8f8f;box-sizing:border-box;background:linear-gradient(135deg,#cfd3d6 0,#eef0f1 55%,#fdfdfd 100%);box-shadow:inset 0 0 0 1px #f4f4f4;"></div>
<span class="t" style="left:120.80px;top:760.00px;height:15px;line-height:15px;font-size:11px;color:#f8b379;letter-spacing:-0.2px;">Si80000BW0</span>
<span class="t" style="left:276.14px;top:760.00px;height:15px;line-height:15px;font-size:11px;color:#f8b379;letter-spacing:-0.2px;">Put</span>
<span class="t" style="left:335.78px;top:760.00px;height:15px;line-height:15px;font-size:11px;color:#f8b379;letter-spacing:-0.2px;">19.11.2020</span>
<span class="t" style="left:451.28px;top:760.00px;height:15px;line-height:15px;font-size:11px;color:#f8b379;letter-spacing:-0.2px;">21</span>
<span class="t" style="left:539.01px;top:760.00px;height:15px;line-height:15px;font-size:11px;color:#f8b379;letter-spacing:-0.2px;">-1</span>
<span class="t" style="left:608.16px;top:760.00px;height:15px;line-height:15px;font-size:11px;color:#f8b379;letter-spacing:-0.2px;">2860</span>
<span class="t" style="left:710.64px;top:760.00px;height:15px;line-height:15px;font-size:11px;color:#f8b379;letter-spacing:-0.2px;">36,29</span>
<span class="t" style="left:820.52px;top:760.00px;height:15px;line-height:15px;font-size:11px;color:#f8b379;letter-spacing:-0.2px;">1733,68</span>
<div style="left:894px;top:757px;width:51px;height:21px;background:#90ee90;"></div>
<span class="t" style="left:899.43px;top:760.00px;height:15px;line-height:15px;font-size:11px;color:#f8b379;letter-spacing:-0.2px;">1126,32</span>
<span class="t" style="left:976.14px;top:760.00px;height:15px;line-height:15px;font-size:11px;color:#f8b379;letter-spacing:-0.2px;">21,61</span>
<span class="t" style="left:1052.75px;top:760.00px;height:15px;line-height:15px;font-size:11px;color:#f8b379;letter-spacing:-0.2px;">0,5</span>
<span class="t" style="left:1092.80px;top:760.00px;height:15px;line-height:15px;font-size:11px;color:#f8b379;letter-spacing:-0.2px;">-9,6E-05</span>
<span class="t" style="left:1148.30px;top:760.00px;height:15px;line-height:15px;font-size:11px;color:#f8b379;letter-spacing:-0.2px;">-76,74</span>
<span class="t" style="left:1191.14px;top:760.00px;height:15px;line-height:15px;font-size:11px;color:#f8b379;letter-spacing:-0.2px;">39,15</span>
<div style="left:1226px;top:758px;width:22px;height:19px;border:1px solid #707070;border-radius:3px;box-sizing:border-box;background:linear-gradient(#f3f3f3 0,#ececec 48%,#dedede 52%,#d0d0d0 100%);box-shadow:inset 0 0 0 1px rgba(255,255,255,.75);"></div>
<span class="t" style="left:1233.33px;top:760.00px;height:15px;line-height:15px;font-size:11px;color:#000;">X</span>
<div style="left:7px;top:800px;width:1243px;height:1px;background:#000;"></div>
<div style="left:7px;top:779px;width:49px;height:21px;background:#3399ff;"></div>
<div style="left:25px;top:783px;width:13px;height:13px;border:1px solid #8e8f8f;box-sizing:border-box;background:linear-gradient(135deg,#cfd3d6 0,#eef0f1 55%,#fdfdfd 100%);box-shadow:inset 0 0 0 1px #f4f4f4;"></div>
<span class="t" style="left:122.32px;top:782.00px;height:15px;line-height:15px;font-size:11px;color:#f8b379;letter-spacing:-0.2px;">Si80000BK0</span>
<span class="t" style="left:274.92px;top:782.00px;height:15px;line-height:15px;font-size:11px;color:#f8b379;letter-spacing:-0.2px;">Call</span>
<span class="t" style="left:335.78px;top:782.00px;height:15px;line-height:15px;font-size:11px;color:#f8b379;letter-spacing:-0.2px;">19.11.2020</span>
<span class="t" style="left:451.28px;top:782.00px;height:15px;line-height:15px;font-size:11px;color:#f8b379;letter-spacing:-0.2px;">21</span>
<span class="t" style="left:539.01px;top:782.00px;height:15px;line-height:15px;font-size:11px;color:#f8b379;letter-spacing:-0.2px;">-1</span>
<span class="t" style="left:611.22px;top:782.00px;height:15px;line-height:15px;font-size:11px;color:#f8b379;letter-spacing:-0.2px;">766</span>
<span class="t" style="left:713.69px;top:782.00px;height:15px;line-height:15px;font-size:11px;color:#f8b379;letter-spacing:-0.2px;">10,9</span>
<span class="t" style="left:820.52px;top:782.00px;height:15px;line-height:15px;font-size:11px;color:#f8b379;letter-spacing:-0.2px;">1587,68</span>
<div style="left:894px;top:779px;width:51px;height:21px;background:#ffb6c1;"></div>
<span class="t" style="left:900.24px;top:782.00px;height:15px;line-height:15px;font-size:11px;color:#f8b379;letter-spacing:-0.2px;">-821,68</span>
<span class="t" style="left:976.14px;top:782.00px;height:15px;line-height:15px;font-size:11px;color:#f8b379;letter-spacing:-0.2px;">21,61</span>
<span class="t" style="left:1050.92px;top:782.00px;height:15px;line-height:15px;font-size:11px;color:#f8b379;letter-spacing:-0.2px;">-0,5</span>
<span class="t" style="left:1092.80px;top:782.00px;height:15px;line-height:15px;font-size:11px;color:#f8b379;letter-spacing:-0.2px;">-9,6E-05</span>
<span class="t" style="left:1148.30px;top:782.00px;height:15px;line-height:15px;font-size:11px;color:#f8b379;letter-spacing:-0.2px;">-76,74</span>
<span class="t" style="left:1191.14px;top:782.00px;height:15px;line-height:15px;font-size:11px;color:#f8b379;letter-spacing:-0.2px;">39,15</span>
<div style="left:1226px;top:780px;width:22px;height:19px;border:1px solid #707070;border-radius:3px;box-sizing:border-box;background:linear-gradient(#f3f3f3 0,#ececec 48%,#dedede 52%,#d0d0d0 100%);box-shadow:inset 0 0 0 1px rgba(255,255,255,.75);"></div>
<span class="t" style="left:1233.33px;top:782.00px;height:15px;line-height:15px;font-size:11px;color:#000;">X</span>
<div style="left:7px;top:822px;width:1243px;height:1px;background:#000;"></div>
<div style="left:25px;top:805px;width:13px;height:13px;border:1px solid #8e8f8f;box-sizing:border-box;background:linear-gradient(135deg,#cfd3d6 0,#eef0f1 55%,#fdfdfd 100%);box-shadow:inset 0 0 0 1px #f4f4f4;"></div>
<svg style="left:25px;top:805px" width="13" height="13" viewBox="0 0 13 13"><path d="M3.2 6.300l1.200-.6 1.500 2.600c.9-2.300 2-4 3.600-5.600l.7.500c-1.600 2.100-2.700 4.300-3.600 7.300h-1.300c-.5-1.500-1.200-2.900-2.100-4.200z" fill="#31347c" stroke="#4a5fa8" stroke-width=".5"/></svg>
<span class="t" style="left:122.32px;top:804.00px;height:15px;line-height:15px;font-size:11px;color:#000;letter-spacing:-0.2px;">Si78000BK0</span>
<span class="t" style="left:274.92px;top:804.00px;height:15px;line-height:15px;font-size:11px;color:#000;letter-spacing:-0.2px;">Call</span>
<span class="t" style="left:335.78px;top:804.00px;height:15px;line-height:15px;font-size:11px;color:#000;letter-spacing:-0.2px;">19.11.2020</span>
<span class="t" style="left:451.28px;top:804.00px;height:15px;line-height:15px;font-size:11px;color:#000;letter-spacing:-0.2px;">21</span>
<span class="t" style="left:540.84px;top:804.00px;height:15px;line-height:15px;font-size:11px;color:#000;letter-spacing:-0.2px;">1</span>
<span class="t" style="left:608.16px;top:804.00px;height:15px;line-height:15px;font-size:11px;color:#000;letter-spacing:-0.2px;">1030</span>
<span class="t" style="left:721.34px;top:804.00px;height:15px;line-height:15px;font-size:11px;color:#000;letter-spacing:-0.2px;">0</span>
<span class="t" style="left:820.52px;top:804.00px;height:15px;line-height:15px;font-size:11px;color:#000;letter-spacing:-0.2px;">2654,36</span>
<div style="left:894px;top:801px;width:51px;height:21px;background:#90ee90;"></div>
<span class="t" style="left:899.02px;top:804.00px;height:15px;line-height:15px;font-size:11px;color:#000;letter-spacing:-0.2px;">1624,36</span>
<span class="t" style="left:979.19px;top:804.00px;height:15px;line-height:15px;font-size:11px;color:#000;letter-spacing:-0.2px;">20,5</span>
<span class="t" style="left:1049.69px;top:804.00px;height:15px;line-height:15px;font-size:11px;color:#000;letter-spacing:-0.2px;">0,69</span>
<span class="t" style="left:1094.64px;top:804.00px;height:15px;line-height:15px;font-size:11px;color:#000;letter-spacing:-0.2px;">8,9E-05</span>
<span class="t" style="left:1150.14px;top:804.00px;height:15px;line-height:15px;font-size:11px;color:#000;letter-spacing:-0.2px;">67,71</span>
<span class="t" style="left:1189.30px;top:804.00px;height:15px;line-height:15px;font-size:11px;color:#000;letter-spacing:-0.2px;">-32,77</span>
<div style="left:1226px;top:802px;width:22px;height:19px;border:1px solid #707070;border-radius:3px;box-sizing:border-box;background:linear-gradient(#f3f3f3 0,#ececec 48%,#dedede 52%,#d0d0d0 100%);box-shadow:inset 0 0 0 1px rgba(255,255,255,.75);"></div>
<span class="t" style="left:1233.33px;top:804.00px;height:15px;line-height:15px;font-size:11px;color:#000;">X</span>
<div style="left:7px;top:844px;width:1243px;height:1px;background:#000;"></div>
<div style="left:25px;top:827px;width:13px;height:13px;border:1px solid #8e8f8f;box-sizing:border-box;background:linear-gradient(135deg,#cfd3d6 0,#eef0f1 55%,#fdfdfd 100%);box-shadow:inset 0 0 0 1px #f4f4f4;"></div>
<svg style="left:25px;top:827px" width="13" height="13" viewBox="0 0 13 13"><path d="M3.2 6.300l1.200-.6 1.500 2.600c.9-2.300 2-4 3.600-5.600l.7.500c-1.600 2.100-2.700 4.300-3.600 7.300h-1.300c-.5-1.500-1.200-2.900-2.100-4.200z" fill="#31347c" stroke="#4a5fa8" stroke-width=".5"/></svg>
<span class="t" style="left:120.80px;top:826.00px;height:15px;line-height:15px;font-size:11px;color:#000;letter-spacing:-0.2px;">Si78000BW0</span>
<span class="t" style="left:276.14px;top:826.00px;height:15px;line-height:15px;font-size:11px;color:#000;letter-spacing:-0.2px;">Put</span>
<span class="t" style="left:335.78px;top:826.00px;height:15px;line-height:15px;font-size:11px;color:#000;letter-spacing:-0.2px;">19.11.2020</span>
<span class="t" style="left:451.28px;top:826.00px;height:15px;line-height:15px;font-size:11px;color:#000;letter-spacing:-0.2px;">21</span>
<span class="t" style="left:540.84px;top:826.00px;height:15px;line-height:15px;font-size:11px;color:#000;letter-spacing:-0.2px;">1</span>
<span class="t" style="left:608.16px;top:826.00px;height:15px;line-height:15px;font-size:11px;color:#000;letter-spacing:-0.2px;">2104</span>
<span class="t" style="left:710.64px;top:826.00px;height:15px;line-height:15px;font-size:11px;color:#000;letter-spacing:-0.2px;">38,76</span>
<span class="t" style="left:823.58px;top:826.00px;height:15px;line-height:15px;font-size:11px;color:#000;letter-spacing:-0.2px;">800,36</span>
<div style="left:894px;top:823px;width:51px;height:21px;background:#ffb6c1;"></div>
<span class="t" style="left:897.19px;top:826.00px;height:15px;line-height:15px;font-size:11px;color:#000;letter-spacing:-0.2px;">-1303,64</span>
<span class="t" style="left:979.19px;top:826.00px;height:15px;line-height:15px;font-size:11px;color:#000;letter-spacing:-0.2px;">20,5</span>
<span class="t" style="left:1047.86px;top:826.00px;height:15px;line-height:15px;font-size:11px;color:#000;letter-spacing:-0.2px;">-0,31</span>
<span class="t" style="left:1094.64px;top:826.00px;height:15px;line-height:15px;font-size:11px;color:#000;letter-spacing:-0.2px;">8,9E-05</span>
<span class="t" style="left:1150.14px;top:826.00px;height:15px;line-height:15px;font-size:11px;color:#000;letter-spacing:-0.2px;">67,71</span>
<span class="t" style="left:1189.30px;top:826.00px;height:15px;line-height:15px;font-size:11px;color:#000;letter-spacing:-0.2px;">-32,77</span>
<div style="left:1226px;top:824px;width:22px;height:19px;border:1px solid #707070;border-radius:3px;box-sizing:border-box;background:linear-gradient(#f3f3f3 0,#ececec 48%,#dedede 52%,#d0d0d0 100%);box-shadow:inset 0 0 0 1px rgba(255,255,255,.75);"></div>
<span class="t" style="left:1233.33px;top:826.00px;height:15px;line-height:15px;font-size:11px;color:#000;">X</span>
<div style="left:7px;top:866px;width:1243px;height:1px;background:#000;"></div>
<div style="left:25px;top:849px;width:13px;height:13px;border:1px solid #8e8f8f;box-sizing:border-box;background:linear-gradient(135deg,#cfd3d6 0,#eef0f1 55%,#fdfdfd 100%);box-shadow:inset 0 0 0 1px #f4f4f4;"></div>
<svg style="left:25px;top:849px" width="13" height="13" viewBox="0 0 13 13"><path d="M3.2 6.300l1.200-.6 1.500 2.600c.9-2.300 2-4 3.600-5.600l.7.500c-1.600 2.100-2.700 4.300-3.600 7.300h-1.300c-.5-1.500-1.200-2.900-2.100-4.200z" fill="#31347c" stroke="#4a5fa8" stroke-width=".5"/></svg>
<span class="t" style="left:122.32px;top:848.00px;height:15px;line-height:15px;font-size:11px;color:#000;letter-spacing:-0.2px;">Si76000BK0</span>
<span class="t" style="left:274.92px;top:848.00px;height:15px;line-height:15px;font-size:11px;color:#000;letter-spacing:-0.2px;">Call</span>
<span class="t" style="left:335.78px;top:848.00px;height:15px;line-height:15px;font-size:11px;color:#000;letter-spacing:-0.2px;">19.11.2020</span>
<span class="t" style="left:451.28px;top:848.00px;height:15px;line-height:15px;font-size:11px;color:#000;letter-spacing:-0.2px;">21</span>
<span class="t" style="left:539.01px;top:848.00px;height:15px;line-height:15px;font-size:11px;color:#000;letter-spacing:-0.2px;">-1</span>
<span class="t" style="left:608.16px;top:848.00px;height:15px;line-height:15px;font-size:11px;color:#000;letter-spacing:-0.2px;">1876</span>
<span class="t" style="left:721.34px;top:848.00px;height:15px;line-height:15px;font-size:11px;color:#000;letter-spacing:-0.2px;">0</span>
<span class="t" style="left:820.52px;top:848.00px;height:15px;line-height:15px;font-size:11px;color:#000;letter-spacing:-0.2px;">4143,54</span>
<div style="left:894px;top:845px;width:51px;height:21px;background:#ffb6c1;"></div>
<span class="t" style="left:897.19px;top:848.00px;height:15px;line-height:15px;font-size:11px;color:#000;letter-spacing:-0.2px;">-2267,54</span>
<span class="t" style="left:976.14px;top:848.00px;height:15px;line-height:15px;font-size:11px;color:#000;letter-spacing:-0.2px;">19,83</span>
<span class="t" style="left:1047.86px;top:848.00px;height:15px;line-height:15px;font-size:11px;color:#000;letter-spacing:-0.2px;">-0,86</span>
<span class="t" style="left:1097.39px;top:848.00px;height:15px;line-height:15px;font-size:11px;color:#000;letter-spacing:-0.2px;">-6E-05</span>
<span class="t" style="left:1148.30px;top:848.00px;height:15px;line-height:15px;font-size:11px;color:#000;letter-spacing:-0.2px;">-43,78</span>
<span class="t" style="left:1194.19px;top:848.00px;height:15px;line-height:15px;font-size:11px;color:#000;letter-spacing:-0.2px;">20,5</span>
<div style="left:1226px;top:846px;width:22px;height:19px;border:1px solid #707070;border-radius:3px;box-sizing:border-box;background:linear-gradient(#f3f3f3 0,#ececec 48%,#dedede 52%,#d0d0d0 100%);box-shadow:inset 0 0 0 1px rgba(255,255,255,.75);"></div>
<span class="t" style="left:1233.33px;top:848.00px;height:15px;line-height:15px;font-size:11px;color:#000;">X</span>
<div style="left:7px;top:888px;width:1243px;height:1px;background:#000;"></div>
<div style="left:25px;top:871px;width:13px;height:13px;border:1px solid #8e8f8f;box-sizing:border-box;background:linear-gradient(135deg,#cfd3d6 0,#eef0f1 55%,#fdfdfd 100%);box-shadow:inset 0 0 0 1px #f4f4f4;"></div>
<svg style="left:25px;top:871px" width="13" height="13" viewBox="0 0 13 13"><path d="M3.2 6.300l1.200-.6 1.500 2.600c.9-2.300 2-4 3.600-5.600l.7.500c-1.600 2.100-2.700 4.300-3.600 7.300h-1.300c-.5-1.500-1.200-2.900-2.100-4.200z" fill="#31347c" stroke="#4a5fa8" stroke-width=".5"/></svg>
<span class="t" style="left:120.80px;top:870.00px;height:15px;line-height:15px;font-size:11px;color:#000;letter-spacing:-0.2px;">Si75000BW0</span>
<span class="t" style="left:276.14px;top:870.00px;height:15px;line-height:15px;font-size:11px;color:#000;letter-spacing:-0.2px;">Put</span>
<span class="t" style="left:335.78px;top:870.00px;height:15px;line-height:15px;font-size:11px;color:#000;letter-spacing:-0.2px;">19.11.2020</span>
<span class="t" style="left:451.28px;top:870.00px;height:15px;line-height:15px;font-size:11px;color:#000;letter-spacing:-0.2px;">21</span>
<span class="t" style="left:539.01px;top:870.00px;height:15px;line-height:15px;font-size:11px;color:#000;letter-spacing:-0.2px;">-6</span>
<span class="t" style="left:611.22px;top:870.00px;height:15px;line-height:15px;font-size:11px;color:#000;letter-spacing:-0.2px;">564</span>
<span class="t" style="left:710.64px;top:870.00px;height:15px;line-height:15px;font-size:11px;color:#000;letter-spacing:-0.2px;">29,38</span>
<span class="t" style="left:823.58px;top:870.00px;height:15px;line-height:15px;font-size:11px;color:#000;letter-spacing:-0.2px;">160,28</span>
<div style="left:894px;top:867px;width:51px;height:21px;background:#90ee90;"></div>
<span class="t" style="left:899.02px;top:870.00px;height:15px;line-height:15px;font-size:11px;color:#000;letter-spacing:-0.2px;">2422,32</span>
<span class="t" style="left:976.14px;top:870.00px;height:15px;line-height:15px;font-size:11px;color:#000;letter-spacing:-0.2px;">19,72</span>
<span class="t" style="left:1049.69px;top:870.00px;height:15px;line-height:15px;font-size:11px;color:#000;letter-spacing:-0.2px;">0,54</span>
<span class="t" style="left:1089.13px;top:870.00px;height:15px;line-height:15px;font-size:11px;color:#000;letter-spacing:-0.2px;">-0,000256</span>
<span class="t" style="left:1145.24px;top:870.00px;height:15px;line-height:15px;font-size:11px;color:#000;letter-spacing:-0.2px;">-186,62</span>
<span class="t" style="left:1191.14px;top:870.00px;height:15px;line-height:15px;font-size:11px;color:#000;letter-spacing:-0.2px;">86,88</span>
<div style="left:1226px;top:868px;width:22px;height:19px;border:1px solid #707070;border-radius:3px;box-sizing:border-box;background:linear-gradient(#f3f3f3 0,#ececec 48%,#dedede 52%,#d0d0d0 100%);box-shadow:inset 0 0 0 1px rgba(255,255,255,.75);"></div>
<span class="t" style="left:1233.33px;top:870.00px;height:15px;line-height:15px;font-size:11px;color:#000;">X</span>
<div style="left:7px;top:910px;width:1243px;height:1px;background:#000;"></div>
<div style="left:25px;top:893px;width:13px;height:13px;border:1px solid #8e8f8f;box-sizing:border-box;background:linear-gradient(135deg,#cfd3d6 0,#eef0f1 55%,#fdfdfd 100%);box-shadow:inset 0 0 0 1px #f4f4f4;"></div>
<svg style="left:25px;top:893px" width="13" height="13" viewBox="0 0 13 13"><path d="M3.2 6.300l1.200-.6 1.500 2.600c.9-2.300 2-4 3.600-5.600l.7.500c-1.600 2.100-2.700 4.300-3.600 7.300h-1.300c-.5-1.500-1.200-2.900-2.100-4.200z" fill="#31347c" stroke="#4a5fa8" stroke-width=".5"/></svg>
<span class="t" style="left:120.80px;top:892.00px;height:15px;line-height:15px;font-size:11px;color:#000;letter-spacing:-0.2px;">Si76500BW0</span>
<span class="t" style="left:276.14px;top:892.00px;height:15px;line-height:15px;font-size:11px;color:#000;letter-spacing:-0.2px;">Put</span>
<span class="t" style="left:335.78px;top:892.00px;height:15px;line-height:15px;font-size:11px;color:#000;letter-spacing:-0.2px;">19.11.2020</span>
<span class="t" style="left:451.28px;top:892.00px;height:15px;line-height:15px;font-size:11px;color:#000;letter-spacing:-0.2px;">21</span>
<span class="t" style="left:539.01px;top:892.00px;height:15px;line-height:15px;font-size:11px;color:#000;letter-spacing:-0.2px;">-1</span>
<span class="t" style="left:608.16px;top:892.00px;height:15px;line-height:15px;font-size:11px;color:#000;letter-spacing:-0.2px;">1377</span>
<span class="t" style="left:710.64px;top:892.00px;height:15px;line-height:15px;font-size:11px;color:#000;letter-spacing:-0.2px;">36,39</span>
<span class="t" style="left:823.58px;top:892.00px;height:15px;line-height:15px;font-size:11px;color:#000;letter-spacing:-0.2px;">382,09</span>
<div style="left:894px;top:889px;width:51px;height:21px;background:#90ee90;"></div>
<span class="t" style="left:902.08px;top:892.00px;height:15px;line-height:15px;font-size:11px;color:#000;letter-spacing:-0.2px;">994,91</span>
<span class="t" style="left:976.14px;top:892.00px;height:15px;line-height:15px;font-size:11px;color:#000;letter-spacing:-0.2px;">19,95</span>
<span class="t" style="left:1049.69px;top:892.00px;height:15px;line-height:15px;font-size:11px;color:#000;letter-spacing:-0.2px;">0,18</span>
<span class="t" style="left:1092.80px;top:892.00px;height:15px;line-height:15px;font-size:11px;color:#000;letter-spacing:-0.2px;">-6,8E-05</span>
<span class="t" style="left:1151.36px;top:892.00px;height:15px;line-height:15px;font-size:11px;color:#000;letter-spacing:-0.2px;">-50,4</span>
<span class="t" style="left:1191.14px;top:892.00px;height:15px;line-height:15px;font-size:11px;color:#000;letter-spacing:-0.2px;">23,74</span>
<div style="left:1226px;top:890px;width:22px;height:19px;border:1px solid #707070;border-radius:3px;box-sizing:border-box;background:linear-gradient(#f3f3f3 0,#ececec 48%,#dedede 52%,#d0d0d0 100%);box-shadow:inset 0 0 0 1px rgba(255,255,255,.75);"></div>
<span class="t" style="left:1233.33px;top:892.00px;height:15px;line-height:15px;font-size:11px;color:#000;">X</span>
<div style="left:7px;top:932px;width:1243px;height:1px;background:#000;"></div>
<div style="left:25px;top:915px;width:13px;height:13px;border:1px solid #8e8f8f;box-sizing:border-box;background:linear-gradient(135deg,#cfd3d6 0,#eef0f1 55%,#fdfdfd 100%);box-shadow:inset 0 0 0 1px #f4f4f4;"></div>
<svg style="left:25px;top:915px" width="13" height="13" viewBox="0 0 13 13"><path d="M3.2 6.300l1.200-.6 1.500 2.600c.9-2.300 2-4 3.600-5.600l.7.500c-1.600 2.100-2.700 4.300-3.600 7.300h-1.300c-.5-1.500-1.200-2.900-2.100-4.200z" fill="#31347c" stroke="#4a5fa8" stroke-width=".5"/></svg>
<span class="t" style="left:122.32px;top:914.00px;height:15px;line-height:15px;font-size:11px;color:#000;letter-spacing:-0.2px;">Si76500BK0</span>
<span class="t" style="left:274.92px;top:914.00px;height:15px;line-height:15px;font-size:11px;color:#000;letter-spacing:-0.2px;">Call</span>
<span class="t" style="left:335.78px;top:914.00px;height:15px;line-height:15px;font-size:11px;color:#000;letter-spacing:-0.2px;">19.11.2020</span>
<span class="t" style="left:451.28px;top:914.00px;height:15px;line-height:15px;font-size:11px;color:#000;letter-spacing:-0.2px;">21</span>
<span class="t" style="left:539.01px;top:914.00px;height:15px;line-height:15px;font-size:11px;color:#000;letter-spacing:-0.2px;">-1</span>
<span class="t" style="left:608.16px;top:914.00px;height:15px;line-height:15px;font-size:11px;color:#000;letter-spacing:-0.2px;">1459</span>
<span class="t" style="left:721.34px;top:914.00px;height:15px;line-height:15px;font-size:11px;color:#000;letter-spacing:-0.2px;">0</span>
<span class="t" style="left:820.52px;top:914.00px;height:15px;line-height:15px;font-size:11px;color:#000;letter-spacing:-0.2px;">3736,09</span>
<div style="left:894px;top:911px;width:51px;height:21px;background:#ffb6c1;"></div>
<span class="t" style="left:897.19px;top:914.00px;height:15px;line-height:15px;font-size:11px;color:#000;letter-spacing:-0.2px;">-2277,09</span>
<span class="t" style="left:976.14px;top:914.00px;height:15px;line-height:15px;font-size:11px;color:#000;letter-spacing:-0.2px;">19,95</span>
<span class="t" style="left:1047.86px;top:914.00px;height:15px;line-height:15px;font-size:11px;color:#000;letter-spacing:-0.2px;">-0,82</span>
<span class="t" style="left:1092.80px;top:914.00px;height:15px;line-height:15px;font-size:11px;color:#000;letter-spacing:-0.2px;">-6,8E-05</span>
<span class="t" style="left:1151.36px;top:914.00px;height:15px;line-height:15px;font-size:11px;color:#000;letter-spacing:-0.2px;">-50,4</span>
<span class="t" style="left:1191.14px;top:914.00px;height:15px;line-height:15px;font-size:11px;color:#000;letter-spacing:-0.2px;">23,74</span>
<div style="left:1226px;top:912px;width:22px;height:19px;border:1px solid #707070;border-radius:3px;box-sizing:border-box;background:linear-gradient(#f3f3f3 0,#ececec 48%,#dedede 52%,#d0d0d0 100%);box-shadow:inset 0 0 0 1px rgba(255,255,255,.75);"></div>
<span class="t" style="left:1233.33px;top:914.00px;height:15px;line-height:15px;font-size:11px;color:#000;">X</span>
<div style="left:7px;top:954px;width:1243px;height:1px;background:#000;"></div>
<div style="left:25px;top:937px;width:13px;height:13px;border:1px solid #8e8f8f;box-sizing:border-box;background:linear-gradient(135deg,#cfd3d6 0,#eef0f1 55%,#fdfdfd 100%);box-shadow:inset 0 0 0 1px #f4f4f4;"></div>
<svg style="left:25px;top:937px" width="13" height="13" viewBox="0 0 13 13"><path d="M3.2 6.300l1.200-.6 1.500 2.600c.9-2.300 2-4 3.600-5.600l.7.500c-1.600 2.100-2.700 4.300-3.600 7.300h-1.300c-.5-1.500-1.200-2.900-2.100-4.200z" fill="#31347c" stroke="#4a5fa8" stroke-width=".5"/></svg>
<span class="t" style="left:120.80px;top:936.00px;height:15px;line-height:15px;font-size:11px;color:#000;letter-spacing:-0.2px;">Si75500BW0</span>
<span class="t" style="left:276.14px;top:936.00px;height:15px;line-height:15px;font-size:11px;color:#000;letter-spacing:-0.2px;">Put</span>
<span class="t" style="left:335.78px;top:936.00px;height:15px;line-height:15px;font-size:11px;color:#000;letter-spacing:-0.2px;">19.11.2020</span>
<span class="t" style="left:451.28px;top:936.00px;height:15px;line-height:15px;font-size:11px;color:#000;letter-spacing:-0.2px;">21</span>
<span class="t" style="left:539.01px;top:936.00px;height:15px;line-height:15px;font-size:11px;color:#000;letter-spacing:-0.2px;">-1</span>
<span class="t" style="left:611.22px;top:936.00px;height:15px;line-height:15px;font-size:11px;color:#000;letter-spacing:-0.2px;">872</span>
<span class="t" style="left:710.64px;top:936.00px;height:15px;line-height:15px;font-size:11px;color:#000;letter-spacing:-0.2px;">32,97</span>
<span class="t" style="left:823.58px;top:936.00px;height:15px;line-height:15px;font-size:11px;color:#000;letter-spacing:-0.2px;">216,87</span>
<div style="left:894px;top:933px;width:51px;height:21px;background:#90ee90;"></div>
<span class="t" style="left:902.08px;top:936.00px;height:15px;line-height:15px;font-size:11px;color:#000;letter-spacing:-0.2px;">655,13</span>
<span class="t" style="left:976.14px;top:936.00px;height:15px;line-height:15px;font-size:11px;color:#000;letter-spacing:-0.2px;">19,76</span>
<span class="t" style="left:1050.10px;top:936.00px;height:15px;line-height:15px;font-size:11px;color:#000;letter-spacing:-0.2px;">0,11</span>
<span class="t" style="left:1092.80px;top:936.00px;height:15px;line-height:15px;font-size:11px;color:#000;letter-spacing:-0.2px;">-5,1E-05</span>
<span class="t" style="left:1148.30px;top:936.00px;height:15px;line-height:15px;font-size:11px;color:#000;letter-spacing:-0.2px;">-37,28</span>
<span class="t" style="left:1191.14px;top:936.00px;height:15px;line-height:15px;font-size:11px;color:#000;letter-spacing:-0.2px;">17,39</span>
<div style="left:1226px;top:934px;width:22px;height:19px;border:1px solid #707070;border-radius:3px;box-sizing:border-box;background:linear-gradient(#f3f3f3 0,#ececec 48%,#dedede 52%,#d0d0d0 100%);box-shadow:inset 0 0 0 1px rgba(255,255,255,.75);"></div>
<span class="t" style="left:1233.33px;top:936.00px;height:15px;line-height:15px;font-size:11px;color:#000;">X</span>
<div style="left:7px;top:976px;width:1243px;height:1px;background:#000;"></div>
<div style="left:25px;top:959px;width:13px;height:13px;border:1px solid #8e8f8f;box-sizing:border-box;background:linear-gradient(135deg,#cfd3d6 0,#eef0f1 55%,#fdfdfd 100%);box-shadow:inset 0 0 0 1px #f4f4f4;"></div>
<svg style="left:25px;top:959px" width="13" height="13" viewBox="0 0 13 13"><path d="M3.2 6.300l1.200-.6 1.500 2.600c.9-2.300 2-4 3.600-5.600l.7.500c-1.600 2.100-2.700 4.300-3.600 7.300h-1.300c-.5-1.500-1.200-2.900-2.100-4.200z" fill="#31347c" stroke="#4a5fa8" stroke-width=".5"/></svg>
<span class="t" style="left:122.32px;top:958.00px;height:15px;line-height:15px;font-size:11px;color:#000;letter-spacing:-0.2px;">Si75500BK0</span>
<span class="t" style="left:274.92px;top:958.00px;height:15px;line-height:15px;font-size:11px;color:#000;letter-spacing:-0.2px;">Call</span>
<span class="t" style="left:335.78px;top:958.00px;height:15px;line-height:15px;font-size:11px;color:#000;letter-spacing:-0.2px;">19.11.2020</span>
<span class="t" style="left:451.28px;top:958.00px;height:15px;line-height:15px;font-size:11px;color:#000;letter-spacing:-0.2px;">21</span>
<span class="t" style="left:540.84px;top:958.00px;height:15px;line-height:15px;font-size:11px;color:#000;letter-spacing:-0.2px;">1</span>
<span class="t" style="left:608.16px;top:958.00px;height:15px;line-height:15px;font-size:11px;color:#000;letter-spacing:-0.2px;">1956</span>
<span class="t" style="left:721.34px;top:958.00px;height:15px;line-height:15px;font-size:11px;color:#000;letter-spacing:-0.2px;">0</span>
<span class="t" style="left:820.52px;top:958.00px;height:15px;line-height:15px;font-size:11px;color:#000;letter-spacing:-0.2px;">4570,87</span>
<div style="left:894px;top:955px;width:51px;height:21px;background:#90ee90;"></div>
<span class="t" style="left:899.02px;top:958.00px;height:15px;line-height:15px;font-size:11px;color:#000;letter-spacing:-0.2px;">2614,87</span>
<span class="t" style="left:976.14px;top:958.00px;height:15px;line-height:15px;font-size:11px;color:#000;letter-spacing:-0.2px;">19,76</span>
<span class="t" style="left:1049.69px;top:958.00px;height:15px;line-height:15px;font-size:11px;color:#000;letter-spacing:-0.2px;">0,89</span>
<span class="t" style="left:1094.64px;top:958.00px;height:15px;line-height:15px;font-size:11px;color:#000;letter-spacing:-0.2px;">5,1E-05</span>
<span class="t" style="left:1150.14px;top:958.00px;height:15px;line-height:15px;font-size:11px;color:#000;letter-spacing:-0.2px;">37,28</span>
<span class="t" style="left:1189.30px;top:958.00px;height:15px;line-height:15px;font-size:11px;color:#000;letter-spacing:-0.2px;">-17,39</span>
<div style="left:1226px;top:956px;width:22px;height:19px;border:1px solid #707070;border-radius:3px;box-sizing:border-box;background:linear-gradient(#f3f3f3 0,#ececec 48%,#dedede 52%,#d0d0d0 100%);box-shadow:inset 0 0 0 1px rgba(255,255,255,.75);"></div>
<span class="t" style="left:1233.33px;top:958.00px;height:15px;line-height:15px;font-size:11px;color:#000;">X</span>
<div style="left:7px;top:998px;width:1243px;height:1px;background:#000;"></div>
<div style="left:25px;top:981px;width:13px;height:13px;border:1px solid #8e8f8f;box-sizing:border-box;background:linear-gradient(135deg,#cfd3d6 0,#eef0f1 55%,#fdfdfd 100%);box-shadow:inset 0 0 0 1px #f4f4f4;"></div>
<svg style="left:25px;top:981px" width="13" height="13" viewBox="0 0 13 13"><path d="M3.2 6.300l1.200-.6 1.500 2.600c.9-2.300 2-4 3.600-5.600l.7.500c-1.600 2.100-2.700 4.300-3.600 7.300h-1.300c-.5-1.500-1.200-2.900-2.100-4.200z" fill="#31347c" stroke="#4a5fa8" stroke-width=".5"/></svg>
<span class="t" style="left:126.61px;top:980.00px;height:15px;line-height:15px;font-size:11px;color:#000;letter-spacing:-0.2px;">FixedProfit</span>
<span class="t" style="left:915.84px;top:980.00px;height:15px;line-height:15px;font-size:11px;color:#000;letter-spacing:-0.2px;">0</span>
<div style="left:1226px;top:978px;width:22px;height:19px;border:1px solid #707070;border-radius:3px;box-sizing:border-box;background:linear-gradient(#f3f3f3 0,#ececec 48%,#dedede 52%,#d0d0d0 100%);box-shadow:inset 0 0 0 1px rgba(255,255,255,.75);"></div>
<span class="t" style="left:1233.33px;top:980.00px;height:15px;line-height:15px;font-size:11px;color:#000;">X</span>
<div style="left:7px;top:1020px;width:1243px;height:1px;background:#000;"></div>
<div style="left:25px;top:1003px;width:13px;height:13px;border:1px solid #8e8f8f;box-sizing:border-box;background:linear-gradient(135deg,#cfd3d6 0,#eef0f1 55%,#fdfdfd 100%);box-shadow:inset 0 0 0 1px #f4f4f4;"></div>
<svg style="left:25px;top:1003px" width="13" height="13" viewBox="0 0 13 13"><path d="M3.2 6.300l1.200-.6 1.500 2.600c.9-2.300 2-4 3.600-5.600l.7.500c-1.600 2.100-2.700 4.300-3.600 7.300h-1.300c-.5-1.500-1.200-2.900-2.100-4.200z" fill="#31347c" stroke="#4a5fa8" stroke-width=".5"/></svg>
<span class="t" style="left:136.96px;top:1002.00px;height:15px;line-height:15px;font-size:11px;color:#000;letter-spacing:-0.2px;">Итого:</span>
<div style="left:894px;top:999px;width:51px;height:21px;background:#90ee90;"></div>
<span class="t" style="left:899.02px;top:1002.00px;height:15px;line-height:15px;font-size:11px;color:#000;letter-spacing:-0.2px;">2463,32</span>
<span class="t" style="left:1049.69px;top:1002.00px;height:15px;line-height:15px;font-size:11px;color:#000;letter-spacing:-0.2px;">0,42</span>
<span class="t" style="left:1089.13px;top:1002.00px;height:15px;line-height:15px;font-size:11px;color:#000;letter-spacing:-0.2px;">-0,000274</span>
<span class="t" style="left:1145.24px;top:1002.00px;height:15px;line-height:15px;font-size:11px;color:#000;letter-spacing:-0.2px;">-195,78</span>
<span class="t" style="left:1191.14px;top:1002.00px;height:15px;line-height:15px;font-size:11px;color:#000;letter-spacing:-0.2px;">89,32</span>
<div style="left:1226px;top:1000px;width:22px;height:19px;border:1px solid #707070;border-radius:3px;box-sizing:border-box;background:linear-gradient(#f3f3f3 0,#ececec 48%,#dedede 52%,#d0d0d0 100%);box-shadow:inset 0 0 0 1px rgba(255,255,255,.75);"></div>
<span class="t" style="left:1233.33px;top:1002.00px;height:15px;line-height:15px;font-size:11px;color:#000;">X</span>
<div style="left:7px;top:756px;width:1243px;height:1px;background:#000;"></div>
<div style="left:56px;top:757px;width:1px;height:264px;background:#000;"></div>
<div style="left:250px;top:757px;width:1px;height:264px;background:#000;"></div>
<div style="left:319px;top:757px;width:1px;height:264px;background:#000;"></div>
<div style="left:407px;top:757px;width:1px;height:264px;background:#000;"></div>
<div style="left:508px;top:757px;width:1px;height:264px;background:#000;"></div>
<div style="left:580px;top:757px;width:1px;height:264px;background:#000;"></div>
<div style="left:661px;top:757px;width:1px;height:264px;background:#000;"></div>
<div style="left:788px;top:757px;width:1px;height:264px;background:#000;"></div>
<div style="left:893px;top:757px;width:1px;height:264px;background:#000;"></div>
<div style="left:945px;top:757px;width:1px;height:264px;background:#000;"></div>
<div style="left:1035px;top:757px;width:1px;height:264px;background:#000;"></div>
<div style="left:1086px;top:757px;width:1px;height:264px;background:#000;"></div>
<div style="left:1142px;top:757px;width:1px;height:264px;background:#000;"></div>
<div style="left:1186px;top:757px;width:1px;height:264px;background:#000;"></div>
<div style="left:1224px;top:757px;width:1px;height:264px;background:#000;"></div>
<div style="left:16.5px;top:754px;width:627.5px;height:49.5px;border:3px solid #0000f0;box-sizing:border-box;border-radius:1.5px;"></div>
<div style="left:0px;top:1042px;width:1257px;height:22px;background:#cd853f;"></div>
<span class="t" style="left:3.50px;top:1045.50px;height:16px;line-height:16px;font-size:12px;color:#1a0d00;letter-spacing:-0.143px;">Время обновления 79 мс</span>
<span class="t" style="left:148.40px;top:1045.50px;height:16px;line-height:16px;font-size:12px;color:#1a0d00;letter-spacing:-0.223px;">Profit=2463,32 Delta(Δ)=0,42 Gamma(Γ)=-0,000274 Vega=-195,78 Theta(Θ)=89,32</span>
<div style="left:1252px;top:1059px;width:2px;height:2px;background:#f4e6d6;"></div>
<div style="left:1251px;top:1058px;width:2px;height:2px;background:#8a5a28;opacity:.6;"></div>
<div style="left:1248px;top:1059px;width:2px;height:2px;background:#f4e6d6;"></div>
<div style="left:1247px;top:1058px;width:2px;height:2px;background:#8a5a28;opacity:.6;"></div>
<div style="left:1244px;top:1059px;width:2px;height:2px;background:#f4e6d6;"></div>
<div style="left:1243px;top:1058px;width:2px;height:2px;background:#8a5a28;opacity:.6;"></div>
<div style="left:1252px;top:1055px;width:2px;height:2px;background:#f4e6d6;"></div>
<div style="left:1251px;top:1054px;width:2px;height:2px;background:#8a5a28;opacity:.6;"></div>
<div style="left:1248px;top:1055px;width:2px;height:2px;background:#f4e6d6;"></div>
<div style="left:1247px;top:1054px;width:2px;height:2px;background:#8a5a28;opacity:.6;"></div>
<div style="left:1252px;top:1051px;width:2px;height:2px;background:#f4e6d6;"></div>
<div style="left:1251px;top:1050px;width:2px;height:2px;background:#8a5a28;opacity:.6;"></div>
</div></body></html>
